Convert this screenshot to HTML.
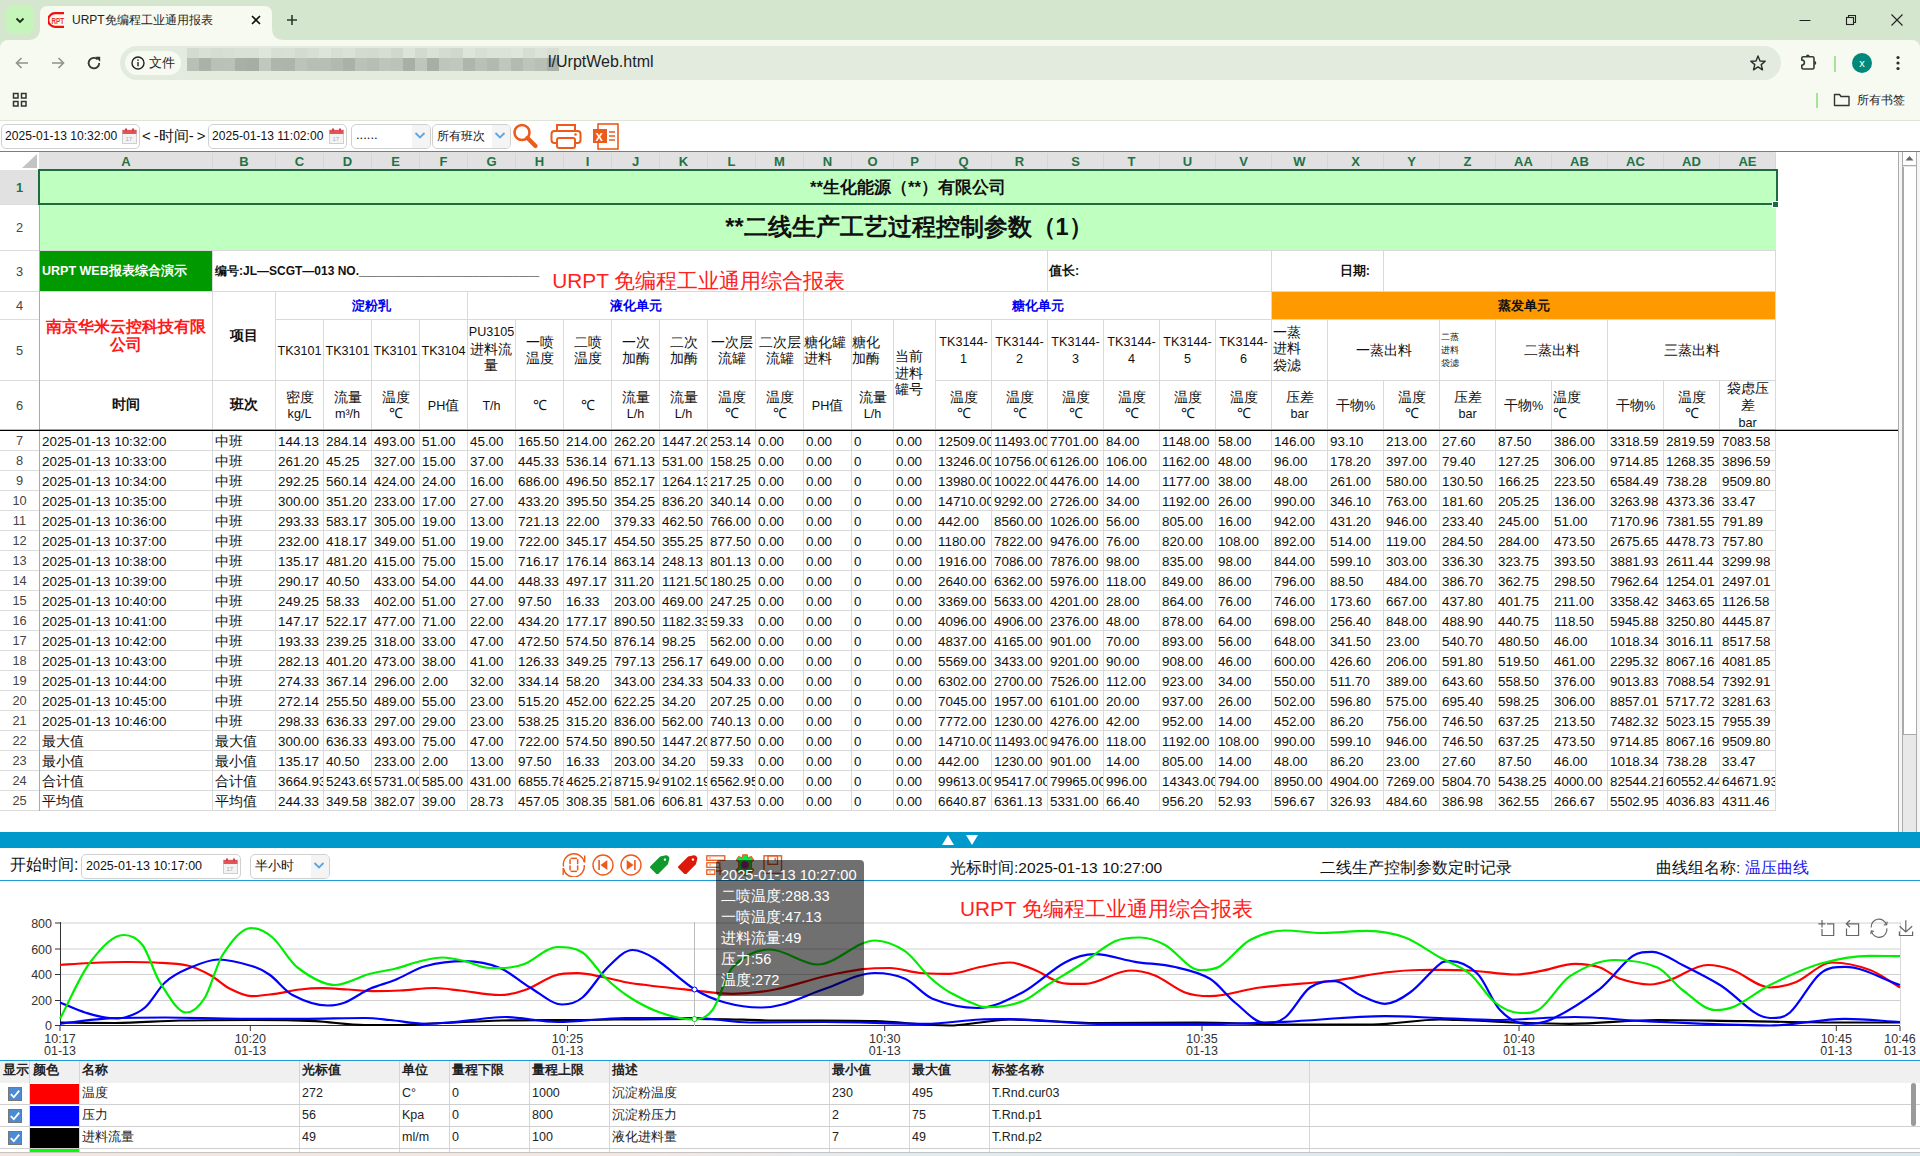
<!DOCTYPE html>
<html><head><meta charset="utf-8"><title>URPT</title>
<style>
html,body{margin:0;padding:0}
body{width:1920px;height:1156px;overflow:hidden;position:relative;font-family:"Liberation Sans",sans-serif;background:#fff}
.c{position:absolute;display:flex;align-items:center;overflow:hidden;white-space:nowrap;font-size:13.4px;color:#111;box-sizing:border-box}
.ch{position:absolute;top:153px;height:16px;line-height:18px;text-align:center;color:#217346;font-weight:bold;font-size:13px}
.zh{font-size:14px}
.rh{position:absolute;left:0;width:39px;text-align:center;font-size:12.8px}
</style></head><body>
<div style="position:absolute;left:0;top:0;width:1920px;height:50px;background:#d5e6cf"></div>
<div style="position:absolute;left:0;top:40px;width:1920px;height:80px;background:#f7faf0;border-radius:8px 8px 0 0"></div>
<svg style="position:absolute;left:28px;top:6px" width="256" height="34" viewBox="0 0 256 34"><path d="M0 34 Q12 34 12 22 L12 8 Q12 0 20 0 L236 0 Q244 0 244 8 L244 22 Q244 34 256 34 Z" fill="#f7faf0"/></svg>
<div style="position:absolute;left:6px;top:6px;width:28px;height:28px;border-radius:8px;background:#c5f5b9"></div>
<svg style="position:absolute;left:14px;top:14px" width="12" height="12" viewBox="0 0 12 12"><path d="M2.5 4.5 L6 8 L9.5 4.5" fill="none" stroke="#1f2a1f" stroke-width="1.8"/></svg>
<svg style="position:absolute;left:48px;top:12px" width="17" height="16" viewBox="0 0 17 16"><path d="M16 1.2 L7 1.2 A6.8 6.8 0 0 0 7 14.8 L16 14.8" fill="none" stroke="#f01010" stroke-width="2.2"/><text x="3.4" y="12.2" font-family="Liberation Sans" font-size="9.5" font-weight="bold" fill="#f03030" textLength="12.6" lengthAdjust="spacingAndGlyphs">RPT</text></svg>
<div style="position:absolute;left:72px;top:11px;font-size:12px;line-height:18px;color:#1f1f1f;white-space:nowrap">URPT免编程工业通用报表</div>
<svg style="position:absolute;left:250px;top:14px" width="12" height="12" viewBox="0 0 12 12"><path d="M2 2 L10 10 M10 2 L2 10" stroke="#111" stroke-width="1.6"/></svg>
<svg style="position:absolute;left:286px;top:14px" width="12" height="12" viewBox="0 0 12 12"><path d="M6 1 L6 11 M1 6 L11 6" stroke="#2b3a2b" stroke-width="1.6"/></svg>
<svg style="position:absolute;left:1798px;top:13px" width="14" height="14" viewBox="0 0 14 14"><path d="M1.5 7.5 L12.5 7.5" stroke="#222" stroke-width="1"/></svg>
<svg style="position:absolute;left:1844px;top:13px" width="14" height="14" viewBox="0 0 14 14"><rect x="2.5" y="4.5" width="7" height="7" fill="none" stroke="#222" stroke-width="1.1"/><path d="M4.5 4.5 L4.5 2.5 L11.5 2.5 L11.5 9.5 L9.5 9.5" fill="none" stroke="#222" stroke-width="1.1"/></svg>
<svg style="position:absolute;left:1890px;top:13px" width="14" height="14" viewBox="0 0 14 14"><path d="M1.5 1.5 L12.5 12.5 M12.5 1.5 L1.5 12.5" stroke="#222" stroke-width="1.1"/></svg>
<div style="position:absolute;left:0;top:120px;width:1920px;height:1px;background:#dfe3d8"></div>
<svg style="position:absolute;left:14px;top:55px" width="16" height="16" viewBox="0 0 16 16"><path d="M14 8 L2.5 8 M7.5 3 L2.5 8 L7.5 13" fill="none" stroke="#8e948a" stroke-width="1.6"/></svg>
<svg style="position:absolute;left:50px;top:55px" width="16" height="16" viewBox="0 0 16 16"><path d="M2 8 L13.5 8 M8.5 3 L13.5 8 L8.5 13" fill="none" stroke="#8e948a" stroke-width="1.6"/></svg>
<svg style="position:absolute;left:86px;top:55px" width="16" height="16" viewBox="0 0 16 16"><path d="M13.2 8 A5.3 5.3 0 1 1 11.6 4.3" fill="none" stroke="#2e3a2e" stroke-width="1.8"/><path d="M9.2 1.8 L14.2 1.8 L14.2 6.8 Z" fill="#2e3a2e"/></svg>
<div style="position:absolute;left:120px;top:46px;width:1661px;height:34px;border-radius:17px;background:#e3ebdf"></div>
<div style="position:absolute;left:125px;top:51px;width:56px;height:24px;border-radius:12px;background:#f7faf0"></div>
<svg style="position:absolute;left:130px;top:55px" width="16" height="16" viewBox="0 0 16 16"><circle cx="8" cy="8" r="6" fill="none" stroke="#222" stroke-width="1.4"/><rect x="7.3" y="7" width="1.4" height="4.3" fill="#222"/><rect x="7.3" y="4.4" width="1.4" height="1.5" fill="#222"/></svg>
<div style="position:absolute;left:149px;top:54px;font-size:13px;line-height:18px;color:#1f1f1f">文件</div>
<div style="position:absolute;left:187px;top:48px;width:12px;height:10px;background:rgb(211,219,209)"></div>
<div style="position:absolute;left:187px;top:58px;width:12px;height:13px;background:rgb(184,192,182)"></div>
<div style="position:absolute;left:199px;top:48px;width:12px;height:10px;background:rgb(216,224,214)"></div>
<div style="position:absolute;left:199px;top:58px;width:12px;height:13px;background:rgb(170,178,168)"></div>
<div style="position:absolute;left:211px;top:48px;width:12px;height:10px;background:rgb(213,221,211)"></div>
<div style="position:absolute;left:211px;top:58px;width:12px;height:13px;background:rgb(185,193,183)"></div>
<div style="position:absolute;left:223px;top:48px;width:12px;height:10px;background:rgb(215,223,213)"></div>
<div style="position:absolute;left:223px;top:58px;width:12px;height:13px;background:rgb(186,194,184)"></div>
<div style="position:absolute;left:235px;top:48px;width:12px;height:10px;background:rgb(217,225,215)"></div>
<div style="position:absolute;left:235px;top:58px;width:12px;height:13px;background:rgb(168,176,166)"></div>
<div style="position:absolute;left:247px;top:48px;width:12px;height:10px;background:rgb(217,225,215)"></div>
<div style="position:absolute;left:247px;top:58px;width:12px;height:13px;background:rgb(166,174,164)"></div>
<div style="position:absolute;left:259px;top:48px;width:12px;height:10px;background:rgb(222,230,220)"></div>
<div style="position:absolute;left:259px;top:58px;width:12px;height:13px;background:rgb(192,200,190)"></div>
<div style="position:absolute;left:271px;top:48px;width:12px;height:10px;background:rgb(215,223,213)"></div>
<div style="position:absolute;left:271px;top:58px;width:12px;height:13px;background:rgb(174,182,172)"></div>
<div style="position:absolute;left:283px;top:48px;width:12px;height:10px;background:rgb(216,224,214)"></div>
<div style="position:absolute;left:283px;top:58px;width:12px;height:13px;background:rgb(173,181,171)"></div>
<div style="position:absolute;left:295px;top:48px;width:12px;height:10px;background:rgb(211,219,209)"></div>
<div style="position:absolute;left:295px;top:58px;width:12px;height:13px;background:rgb(188,196,186)"></div>
<div style="position:absolute;left:307px;top:48px;width:12px;height:10px;background:rgb(215,223,213)"></div>
<div style="position:absolute;left:307px;top:58px;width:12px;height:13px;background:rgb(183,191,181)"></div>
<div style="position:absolute;left:319px;top:48px;width:12px;height:10px;background:rgb(221,229,219)"></div>
<div style="position:absolute;left:319px;top:58px;width:12px;height:13px;background:rgb(183,191,181)"></div>
<div style="position:absolute;left:331px;top:48px;width:12px;height:10px;background:rgb(215,223,213)"></div>
<div style="position:absolute;left:331px;top:58px;width:12px;height:13px;background:rgb(178,186,176)"></div>
<div style="position:absolute;left:343px;top:48px;width:12px;height:10px;background:rgb(218,226,216)"></div>
<div style="position:absolute;left:343px;top:58px;width:12px;height:13px;background:rgb(170,178,168)"></div>
<div style="position:absolute;left:355px;top:48px;width:12px;height:10px;background:rgb(211,219,209)"></div>
<div style="position:absolute;left:355px;top:58px;width:12px;height:13px;background:rgb(186,194,184)"></div>
<div style="position:absolute;left:367px;top:48px;width:12px;height:10px;background:rgb(210,218,208)"></div>
<div style="position:absolute;left:367px;top:58px;width:12px;height:13px;background:rgb(182,190,180)"></div>
<div style="position:absolute;left:379px;top:48px;width:12px;height:10px;background:rgb(214,222,212)"></div>
<div style="position:absolute;left:379px;top:58px;width:12px;height:13px;background:rgb(189,197,187)"></div>
<div style="position:absolute;left:391px;top:48px;width:12px;height:10px;background:rgb(208,216,206)"></div>
<div style="position:absolute;left:391px;top:58px;width:12px;height:13px;background:rgb(187,195,185)"></div>
<div style="position:absolute;left:403px;top:48px;width:12px;height:10px;background:rgb(220,228,218)"></div>
<div style="position:absolute;left:403px;top:58px;width:12px;height:13px;background:rgb(168,176,166)"></div>
<div style="position:absolute;left:415px;top:48px;width:12px;height:10px;background:rgb(210,218,208)"></div>
<div style="position:absolute;left:415px;top:58px;width:12px;height:13px;background:rgb(190,198,188)"></div>
<div style="position:absolute;left:427px;top:48px;width:12px;height:10px;background:rgb(217,225,215)"></div>
<div style="position:absolute;left:427px;top:58px;width:12px;height:13px;background:rgb(167,175,165)"></div>
<div style="position:absolute;left:439px;top:48px;width:12px;height:10px;background:rgb(212,220,210)"></div>
<div style="position:absolute;left:439px;top:58px;width:12px;height:13px;background:rgb(190,198,188)"></div>
<div style="position:absolute;left:451px;top:48px;width:12px;height:10px;background:rgb(208,216,206)"></div>
<div style="position:absolute;left:451px;top:58px;width:12px;height:13px;background:rgb(192,200,190)"></div>
<div style="position:absolute;left:463px;top:48px;width:12px;height:10px;background:rgb(221,229,219)"></div>
<div style="position:absolute;left:463px;top:58px;width:12px;height:13px;background:rgb(174,182,172)"></div>
<div style="position:absolute;left:475px;top:48px;width:12px;height:10px;background:rgb(215,223,213)"></div>
<div style="position:absolute;left:475px;top:58px;width:12px;height:13px;background:rgb(185,193,183)"></div>
<div style="position:absolute;left:487px;top:48px;width:12px;height:10px;background:rgb(219,227,217)"></div>
<div style="position:absolute;left:487px;top:58px;width:12px;height:13px;background:rgb(178,186,176)"></div>
<div style="position:absolute;left:499px;top:48px;width:12px;height:10px;background:rgb(219,227,217)"></div>
<div style="position:absolute;left:499px;top:58px;width:12px;height:13px;background:rgb(191,199,189)"></div>
<div style="position:absolute;left:511px;top:48px;width:12px;height:10px;background:rgb(222,230,220)"></div>
<div style="position:absolute;left:511px;top:58px;width:12px;height:13px;background:rgb(179,187,177)"></div>
<div style="position:absolute;left:523px;top:48px;width:12px;height:10px;background:rgb(214,222,212)"></div>
<div style="position:absolute;left:523px;top:58px;width:12px;height:13px;background:rgb(189,197,187)"></div>
<div style="position:absolute;left:535px;top:48px;width:12px;height:10px;background:rgb(220,228,218)"></div>
<div style="position:absolute;left:535px;top:58px;width:12px;height:13px;background:rgb(184,192,182)"></div>
<div style="position:absolute;left:547px;top:48px;width:12px;height:10px;background:rgb(215,223,213)"></div>
<div style="position:absolute;left:547px;top:58px;width:12px;height:13px;background:rgb(170,178,168)"></div>
<div style="position:absolute;left:548px;top:52px;font-size:16px;line-height:20px;color:#1f1f1f;white-space:nowrap">l/UrptWeb.html</div>
<svg style="position:absolute;left:1749px;top:54px" width="18" height="18" viewBox="0 0 18 18"><path d="M9 2 L11 7 L16.2 7.3 L12.2 10.6 L13.5 15.8 L9 12.9 L4.5 15.8 L5.8 10.6 L1.8 7.3 L7 7 Z" fill="none" stroke="#2b2b2b" stroke-width="1.4" stroke-linejoin="round"/></svg>
<svg style="position:absolute;left:1795px;top:50px" width="26" height="26" viewBox="0 0 26 26"><path d="M8.3 6.8 H17.5 Q19 6.8 19 8.3 V17.5 Q19 19 17.5 19 H8.3 Q6.8 19 6.8 17.5 V15.2 A2.6 2.6 0 0 0 6.8 10 V8.3 Q6.8 6.8 8.3 6.8 Z" fill="none" stroke="#2e3e2e" stroke-width="1.6"/><path d="M10.9 6.4 A1.9 1.9 0 0 1 14.7 6.4 Z M19.4 11 A1.9 1.9 0 0 1 19.4 14.8 Z" fill="#2e3e2e"/></svg>
<div style="position:absolute;left:1834px;top:56px;width:2px;height:16px;background:#a8e39a"></div>
<div style="position:absolute;left:1852px;top:53px;width:20px;height:20px;border-radius:10px;background:#00897b;color:#fff;font-size:11px;line-height:20px;text-align:center">x</div>
<svg style="position:absolute;left:1890px;top:54px" width="16" height="18" viewBox="0 0 16 18"><circle cx="8" cy="3.5" r="1.6" fill="#2b2b2b"/><circle cx="8" cy="9" r="1.6" fill="#2b2b2b"/><circle cx="8" cy="14.5" r="1.6" fill="#2b2b2b"/></svg>
<svg style="position:absolute;left:12px;top:92px" width="16" height="16" viewBox="0 0 16 16"><g fill="none" stroke="#333" stroke-width="1.5"><rect x="1.5" y="1.5" width="4.5" height="4.5"/><rect x="9.5" y="1.5" width="4.5" height="4.5"/><rect x="1.5" y="9.5" width="4.5" height="4.5"/><rect x="9.5" y="9.5" width="4.5" height="4.5"/></g></svg>
<div style="position:absolute;left:1816px;top:93px;width:2px;height:15px;background:#a8e39a"></div>
<svg style="position:absolute;left:1833px;top:92px" width="18" height="16" viewBox="0 0 18 16"><path d="M1.5 2.5 L6.5 2.5 L8 4.5 L16 4.5 L16 13.5 L1.5 13.5 Z" fill="none" stroke="#333" stroke-width="1.4" stroke-linejoin="round"/></svg>
<div style="position:absolute;left:1857px;top:92px;font-size:12px;line-height:16px;color:#222;white-space:nowrap">所有书签</div>
<div style="position:absolute;left:0;top:121px;width:1920px;height:30px;background:#fff"></div>
<div style="position:absolute;left:1px;top:124px;width:137px;height:23px;border:1px solid #d0d0d0;border-radius:5px;background:#fff"></div><div style="position:absolute;left:5px;top:127px;font-size:12.1px;line-height:18px;color:#111;white-space:nowrap">2025-01-13 10:32:00</div><svg style="position:absolute;left:122px;top:128px" width="15" height="16" viewBox="0 0 15 16"><rect x="0.5" y="2" width="14" height="13.5" fill="#f3f3f3" stroke="#cfcfcf"/><rect x="0.5" y="2" width="14" height="4" fill="#e5535a"/><rect x="3" y="0.5" width="2" height="3" fill="#c44"/><rect x="10" y="0.5" width="2" height="3" fill="#c44"/><text x="3.5" y="13" font-size="6" fill="#aaa" font-family="Liberation Sans">17</text></svg>
<div style="position:absolute;left:142px;top:126px;font-size:15px;line-height:20px;color:#111;white-space:nowrap">&lt;<span style="margin-left:3px">-</span>时间-<span style="margin-left:3px">&gt;</span></div>
<div style="position:absolute;left:208px;top:124px;width:137px;height:23px;border:1px solid #d0d0d0;border-radius:5px;background:#fff"></div><div style="position:absolute;left:212px;top:127px;font-size:12.1px;line-height:18px;color:#111;white-space:nowrap">2025-01-13 11:02:00</div><svg style="position:absolute;left:329px;top:128px" width="15" height="16" viewBox="0 0 15 16"><rect x="0.5" y="2" width="14" height="13.5" fill="#f3f3f3" stroke="#cfcfcf"/><rect x="0.5" y="2" width="14" height="4" fill="#e5535a"/><rect x="3" y="0.5" width="2" height="3" fill="#c44"/><rect x="10" y="0.5" width="2" height="3" fill="#c44"/><text x="3.5" y="13" font-size="6" fill="#aaa" font-family="Liberation Sans">17</text></svg>
<div style="position:absolute;left:351px;top:124px;width:78px;height:23px;border:1px solid #d0d0d0;border-radius:5px;background:#fff;overflow:hidden"><div style="position:absolute;right:0;top:0;width:18px;height:23px;background:#f4f4f4"></div></div><div style="position:absolute;left:356px;top:126px;font-size:13px;line-height:18px;color:#111;white-space:nowrap">......</div><svg style="position:absolute;left:414px;top:131px" width="12" height="9" viewBox="0 0 12 9"><path d="M1.5 2 L6 6.5 L10.5 2" fill="none" stroke="#5aa7e6" stroke-width="1.8"/></svg>
<div style="position:absolute;left:432px;top:124px;width:77px;height:23px;border:1px solid #d0d0d0;border-radius:5px;background:#fff;overflow:hidden"><div style="position:absolute;right:0;top:0;width:18px;height:23px;background:#f4f4f4"></div></div><div style="position:absolute;left:437px;top:127px;font-size:13px;line-height:18px;color:#111;white-space:nowrap"><span style="font-size:12px">所有班次</span></div><svg style="position:absolute;left:494px;top:131px" width="12" height="9" viewBox="0 0 12 9"><path d="M1.5 2 L6 6.5 L10.5 2" fill="none" stroke="#5aa7e6" stroke-width="1.8"/></svg>
<svg style="position:absolute;left:512px;top:122px" width="27" height="27" viewBox="0 0 27 27"><circle cx="10" cy="10.5" r="7.5" fill="none" stroke="#ec5a1c" stroke-width="2.6"/><path d="M15.5 16 L23.5 24" stroke="#ec5a1c" stroke-width="4.2" stroke-linecap="round"/></svg>
<svg style="position:absolute;left:550px;top:123px" width="32" height="27" viewBox="0 0 32 27"><g fill="none" stroke="#ec5a1c" stroke-width="2"><path d="M7 8 L7 2 L25 2 L25 8"/><rect x="1.5" y="8" width="29" height="12" rx="3"/><rect x="7" y="15" width="18" height="10" rx="2" fill="#fff"/></g><circle cx="25.5" cy="11.5" r="1.3" fill="#ec5a1c"/></svg>
<svg style="position:absolute;left:592px;top:123px" width="28" height="27" viewBox="0 0 28 27"><rect x="6" y="1" width="20" height="25" fill="#fff" stroke="#ec5a1c" stroke-width="1.6"/><path d="M17 9 L23 9 M17 13 L23 13 M17 17 L23 17" stroke="#ec5a1c" stroke-width="1.4"/><rect x="1" y="6" width="14" height="14" fill="#ec5a1c"/><text x="3.6" y="17.5" font-size="11" font-weight="bold" fill="#fff" font-family="Liberation Sans">X</text></svg>
<div style="position:absolute;left:0;top:151px;width:1920px;height:1px;background:#1e9ad6"></div>
<div style="position:absolute;left:0;top:152px;width:1898px;height:680px;background:#fff"></div>
<div style="position:absolute;left:39px;top:152px;width:1737px;height:17px;background:#e1e1e1"></div>
<svg style="position:absolute;left:20px;top:153px" width="18" height="16" viewBox="0 0 18 16"><path d="M17 1 L17 15 L2 15 Z" fill="#c4c4c4"/></svg>
<div class="ch" style="left:40px;width:172px">A</div>
<div style="position:absolute;left:212px;top:153px;width:1px;height:16px;background:#d6d6d6"></div>
<div class="ch" style="left:213px;width:62px">B</div>
<div style="position:absolute;left:275px;top:153px;width:1px;height:16px;background:#d6d6d6"></div>
<div class="ch" style="left:276px;width:47px">C</div>
<div style="position:absolute;left:323px;top:153px;width:1px;height:16px;background:#d6d6d6"></div>
<div class="ch" style="left:324px;width:47px">D</div>
<div style="position:absolute;left:371px;top:153px;width:1px;height:16px;background:#d6d6d6"></div>
<div class="ch" style="left:372px;width:47px">E</div>
<div style="position:absolute;left:419px;top:153px;width:1px;height:16px;background:#d6d6d6"></div>
<div class="ch" style="left:420px;width:47px">F</div>
<div style="position:absolute;left:467px;top:153px;width:1px;height:16px;background:#d6d6d6"></div>
<div class="ch" style="left:468px;width:47px">G</div>
<div style="position:absolute;left:515px;top:153px;width:1px;height:16px;background:#d6d6d6"></div>
<div class="ch" style="left:516px;width:47px">H</div>
<div style="position:absolute;left:563px;top:153px;width:1px;height:16px;background:#d6d6d6"></div>
<div class="ch" style="left:564px;width:47px">I</div>
<div style="position:absolute;left:611px;top:153px;width:1px;height:16px;background:#d6d6d6"></div>
<div class="ch" style="left:612px;width:47px">J</div>
<div style="position:absolute;left:659px;top:153px;width:1px;height:16px;background:#d6d6d6"></div>
<div class="ch" style="left:660px;width:47px">K</div>
<div style="position:absolute;left:707px;top:153px;width:1px;height:16px;background:#d6d6d6"></div>
<div class="ch" style="left:708px;width:47px">L</div>
<div style="position:absolute;left:755px;top:153px;width:1px;height:16px;background:#d6d6d6"></div>
<div class="ch" style="left:756px;width:47px">M</div>
<div style="position:absolute;left:803px;top:153px;width:1px;height:16px;background:#d6d6d6"></div>
<div class="ch" style="left:804px;width:47px">N</div>
<div style="position:absolute;left:851px;top:153px;width:1px;height:16px;background:#d6d6d6"></div>
<div class="ch" style="left:852px;width:41px">O</div>
<div style="position:absolute;left:893px;top:153px;width:1px;height:16px;background:#d6d6d6"></div>
<div class="ch" style="left:894px;width:41px">P</div>
<div style="position:absolute;left:935px;top:153px;width:1px;height:16px;background:#d6d6d6"></div>
<div class="ch" style="left:936px;width:55px">Q</div>
<div style="position:absolute;left:991px;top:153px;width:1px;height:16px;background:#d6d6d6"></div>
<div class="ch" style="left:992px;width:55px">R</div>
<div style="position:absolute;left:1047px;top:153px;width:1px;height:16px;background:#d6d6d6"></div>
<div class="ch" style="left:1048px;width:55px">S</div>
<div style="position:absolute;left:1103px;top:153px;width:1px;height:16px;background:#d6d6d6"></div>
<div class="ch" style="left:1104px;width:55px">T</div>
<div style="position:absolute;left:1159px;top:153px;width:1px;height:16px;background:#d6d6d6"></div>
<div class="ch" style="left:1160px;width:55px">U</div>
<div style="position:absolute;left:1215px;top:153px;width:1px;height:16px;background:#d6d6d6"></div>
<div class="ch" style="left:1216px;width:55px">V</div>
<div style="position:absolute;left:1271px;top:153px;width:1px;height:16px;background:#d6d6d6"></div>
<div class="ch" style="left:1272px;width:55px">W</div>
<div style="position:absolute;left:1327px;top:153px;width:1px;height:16px;background:#d6d6d6"></div>
<div class="ch" style="left:1328px;width:55px">X</div>
<div style="position:absolute;left:1383px;top:153px;width:1px;height:16px;background:#d6d6d6"></div>
<div class="ch" style="left:1384px;width:55px">Y</div>
<div style="position:absolute;left:1439px;top:153px;width:1px;height:16px;background:#d6d6d6"></div>
<div class="ch" style="left:1440px;width:55px">Z</div>
<div style="position:absolute;left:1495px;top:153px;width:1px;height:16px;background:#d6d6d6"></div>
<div class="ch" style="left:1496px;width:55px">AA</div>
<div style="position:absolute;left:1551px;top:153px;width:1px;height:16px;background:#d6d6d6"></div>
<div class="ch" style="left:1552px;width:55px">AB</div>
<div style="position:absolute;left:1607px;top:153px;width:1px;height:16px;background:#d6d6d6"></div>
<div class="ch" style="left:1608px;width:55px">AC</div>
<div style="position:absolute;left:1663px;top:153px;width:1px;height:16px;background:#d6d6d6"></div>
<div class="ch" style="left:1664px;width:55px">AD</div>
<div style="position:absolute;left:1719px;top:153px;width:1px;height:16px;background:#d6d6d6"></div>
<div class="ch" style="left:1720px;width:55px">AE</div>
<div style="position:absolute;left:1775px;top:153px;width:1px;height:16px;background:#d6d6d6"></div>
<div class="rh" style="top:170px;height:34px;line-height:35px;background:#e1e1e1;color:#217346;font-weight:bold">1</div>
<div style="position:absolute;left:0;top:204px;width:39px;height:1px;background:#dcdcdc"></div>
<div class="rh" style="top:205px;height:45px;line-height:46px;background:#fff;color:#444;font-weight:normal">2</div>
<div style="position:absolute;left:0;top:250px;width:39px;height:1px;background:#dcdcdc"></div>
<div class="rh" style="top:251px;height:40px;line-height:41px;background:#fff;color:#444;font-weight:normal">3</div>
<div style="position:absolute;left:0;top:291px;width:39px;height:1px;background:#dcdcdc"></div>
<div class="rh" style="top:292px;height:27px;line-height:28px;background:#fff;color:#444;font-weight:normal">4</div>
<div style="position:absolute;left:0;top:319px;width:39px;height:1px;background:#dcdcdc"></div>
<div class="rh" style="top:320px;height:60px;line-height:61px;background:#fff;color:#444;font-weight:normal">5</div>
<div style="position:absolute;left:0;top:380px;width:39px;height:1px;background:#dcdcdc"></div>
<div class="rh" style="top:381px;height:49px;line-height:50px;background:#fff;color:#444;font-weight:normal">6</div>
<div class="rh" style="top:431px;height:19px;line-height:20px;background:#fff;color:#444;font-weight:normal">7</div>
<div style="position:absolute;left:0;top:450px;width:39px;height:1px;background:#dcdcdc"></div>
<div class="rh" style="top:451px;height:19px;line-height:20px;background:#fff;color:#444;font-weight:normal">8</div>
<div style="position:absolute;left:0;top:470px;width:39px;height:1px;background:#dcdcdc"></div>
<div class="rh" style="top:471px;height:19px;line-height:20px;background:#fff;color:#444;font-weight:normal">9</div>
<div style="position:absolute;left:0;top:490px;width:39px;height:1px;background:#dcdcdc"></div>
<div class="rh" style="top:491px;height:19px;line-height:20px;background:#fff;color:#444;font-weight:normal">10</div>
<div style="position:absolute;left:0;top:510px;width:39px;height:1px;background:#dcdcdc"></div>
<div class="rh" style="top:511px;height:19px;line-height:20px;background:#fff;color:#444;font-weight:normal">11</div>
<div style="position:absolute;left:0;top:530px;width:39px;height:1px;background:#dcdcdc"></div>
<div class="rh" style="top:531px;height:19px;line-height:20px;background:#fff;color:#444;font-weight:normal">12</div>
<div style="position:absolute;left:0;top:550px;width:39px;height:1px;background:#dcdcdc"></div>
<div class="rh" style="top:551px;height:19px;line-height:20px;background:#fff;color:#444;font-weight:normal">13</div>
<div style="position:absolute;left:0;top:570px;width:39px;height:1px;background:#dcdcdc"></div>
<div class="rh" style="top:571px;height:19px;line-height:20px;background:#fff;color:#444;font-weight:normal">14</div>
<div style="position:absolute;left:0;top:590px;width:39px;height:1px;background:#dcdcdc"></div>
<div class="rh" style="top:591px;height:19px;line-height:20px;background:#fff;color:#444;font-weight:normal">15</div>
<div style="position:absolute;left:0;top:610px;width:39px;height:1px;background:#dcdcdc"></div>
<div class="rh" style="top:611px;height:19px;line-height:20px;background:#fff;color:#444;font-weight:normal">16</div>
<div style="position:absolute;left:0;top:630px;width:39px;height:1px;background:#dcdcdc"></div>
<div class="rh" style="top:631px;height:19px;line-height:20px;background:#fff;color:#444;font-weight:normal">17</div>
<div style="position:absolute;left:0;top:650px;width:39px;height:1px;background:#dcdcdc"></div>
<div class="rh" style="top:651px;height:19px;line-height:20px;background:#fff;color:#444;font-weight:normal">18</div>
<div style="position:absolute;left:0;top:670px;width:39px;height:1px;background:#dcdcdc"></div>
<div class="rh" style="top:671px;height:19px;line-height:20px;background:#fff;color:#444;font-weight:normal">19</div>
<div style="position:absolute;left:0;top:690px;width:39px;height:1px;background:#dcdcdc"></div>
<div class="rh" style="top:691px;height:19px;line-height:20px;background:#fff;color:#444;font-weight:normal">20</div>
<div style="position:absolute;left:0;top:710px;width:39px;height:1px;background:#dcdcdc"></div>
<div class="rh" style="top:711px;height:19px;line-height:20px;background:#fff;color:#444;font-weight:normal">21</div>
<div style="position:absolute;left:0;top:730px;width:39px;height:1px;background:#dcdcdc"></div>
<div class="rh" style="top:731px;height:19px;line-height:20px;background:#fff;color:#444;font-weight:normal">22</div>
<div style="position:absolute;left:0;top:750px;width:39px;height:1px;background:#dcdcdc"></div>
<div class="rh" style="top:751px;height:19px;line-height:20px;background:#fff;color:#444;font-weight:normal">23</div>
<div style="position:absolute;left:0;top:770px;width:39px;height:1px;background:#dcdcdc"></div>
<div class="rh" style="top:771px;height:19px;line-height:20px;background:#fff;color:#444;font-weight:normal">24</div>
<div style="position:absolute;left:0;top:790px;width:39px;height:1px;background:#dcdcdc"></div>
<div class="rh" style="top:791px;height:19px;line-height:20px;background:#fff;color:#444;font-weight:normal">25</div>
<div style="position:absolute;left:0;top:810px;width:39px;height:1px;background:#dcdcdc"></div>
<div style="position:absolute;left:39px;top:169px;width:1px;height:642px;background:#aaa"></div>
<div class="c" style="left:40px;top:170px;width:1736px;height:34px;background:#bfffbf;justify-content:center;font-weight:bold;font-size:16.8px;padding-left:0px">**生化能源（**）有限公司</div>
<div class="c" style="left:40px;top:204px;width:1736px;height:47px;background:#bfffbf;border-bottom:1px solid #d9d9d9;justify-content:center;font-weight:bold;font-size:23.5px;padding-left:2px">**二线生产工艺过程控制参数（1）</div>
<div style="position:absolute;left:38px;top:169px;width:1736px;height:32px;border:2px solid #1e6b41;border-bottom-width:2px"></div>
<div style="position:absolute;left:1772px;top:201px;width:5px;height:5px;background:#1e6b41;border:1px solid #fff"></div>
<div class="c" style="left:40px;top:251px;width:173px;height:41px;border-right:1px solid #d9d9d9;border-bottom:1px solid #d9d9d9;justify-content:flex-start;text-align:left;padding-left:2px;background:#009900;color:#fff;font-weight:bold;font-size:12.5px">URPT WEB报表综合演示</div>
<div class="c" style="left:213px;top:251px;width:835px;height:41px;border-right:1px solid #d9d9d9;border-bottom:1px solid #d9d9d9;justify-content:flex-start;text-align:left;padding-left:2px;"><span style="font-weight:bold;font-size:12px">编号:JL—SCGT—013 NO.___________________________</span><span style="color:#ff2020;font-size:20.8px;margin-left:13px;position:relative;top:10px">URPT 免编程工业通用综合报表</span></div>
<div class="c" style="left:1048px;top:251px;width:224px;height:41px;border-right:1px solid #d9d9d9;border-bottom:1px solid #d9d9d9;justify-content:flex-start;text-align:left;padding-left:1px;"><b style="font-size:12.5px">值长:</b></div>
<div class="c" style="left:1272px;top:251px;width:112px;height:41px;border-right:1px solid #d9d9d9;border-bottom:1px solid #d9d9d9;justify-content:flex-end;text-align:right;padding-left:0px;padding-right:13px"><b style="font-size:12.5px">日期:</b></div>
<div class="c" style="left:1384px;top:251px;width:392px;height:41px;border-right:1px solid #d9d9d9;border-bottom:1px solid #d9d9d9;justify-content:flex-start;text-align:left;padding-left:0px;"></div>
<div class="c" style="left:40px;top:292px;width:173px;height:89px;border-right:1px solid #d9d9d9;border-bottom:1px solid #d9d9d9;justify-content:center;text-align:center;padding-left:0px;"><span style="color:#ff1a1a;font-weight:bold;font-size:16px;line-height:18px">南京华米云控科技有限<br>公司</span></div>
<div class="c" style="left:213px;top:292px;width:63px;height:89px;border-right:1px solid #d9d9d9;border-bottom:1px solid #d9d9d9;justify-content:center;text-align:center;padding-left:0px;"><b style="font-size:14px">项目</b></div>
<div class="c" style="left:276px;top:292px;width:192px;height:28px;border-right:1px solid #d9d9d9;border-bottom:1px solid #d9d9d9;justify-content:center;text-align:center;padding-left:0px;"><b style="color:#0000ee;font-size:13px">淀粉乳</b></div>
<div class="c" style="left:468px;top:292px;width:336px;height:28px;border-right:1px solid #d9d9d9;border-bottom:1px solid #d9d9d9;justify-content:center;text-align:center;padding-left:0px;"><b style="color:#0000ee;font-size:13px">液化单元</b></div>
<div class="c" style="left:804px;top:292px;width:468px;height:28px;border-right:1px solid #d9d9d9;border-bottom:1px solid #d9d9d9;justify-content:center;text-align:center;padding-left:0px;"><b style="color:#0000ee;font-size:13px">糖化单元</b></div>
<div class="c" style="left:1272px;top:292px;width:504px;height:28px;border-right:1px solid #d9d9d9;border-bottom:1px solid #d9d9d9;justify-content:center;text-align:center;padding-left:0px;background:#ff9900"><b style="font-size:13px">蒸发单元</b></div>
<div class="c" style="left:276px;top:320px;width:48px;height:61px;border-right:1px solid #d9d9d9;border-bottom:1px solid #d9d9d9;justify-content:center;text-align:center;padding-left:0px;"><span style="font-size:14px;line-height:16px;"><span style="font-size:12.6px">TK3101</span></span></div>
<div class="c" style="left:324px;top:320px;width:48px;height:61px;border-right:1px solid #d9d9d9;border-bottom:1px solid #d9d9d9;justify-content:center;text-align:center;padding-left:0px;"><span style="font-size:14px;line-height:16px;"><span style="font-size:12.6px">TK3101</span></span></div>
<div class="c" style="left:372px;top:320px;width:48px;height:61px;border-right:1px solid #d9d9d9;border-bottom:1px solid #d9d9d9;justify-content:center;text-align:center;padding-left:0px;"><span style="font-size:14px;line-height:16px;"><span style="font-size:12.6px">TK3101</span></span></div>
<div class="c" style="left:420px;top:320px;width:48px;height:61px;border-right:1px solid #d9d9d9;border-bottom:1px solid #d9d9d9;justify-content:center;text-align:center;padding-left:0px;"><span style="font-size:14px;line-height:16px;"><span style="font-size:12.6px">TK3104</span></span></div>
<div class="c" style="left:468px;top:320px;width:48px;height:61px;border-right:1px solid #d9d9d9;border-bottom:1px solid #d9d9d9;justify-content:center;text-align:center;padding-left:0px;"><span style="font-size:14px;line-height:16px;position:relative;top:-1.5px;line-height:16.5px;"><span style="font-size:12.6px">PU3105</span><br>进料流<br>量</span></div>
<div class="c" style="left:516px;top:320px;width:48px;height:61px;border-right:1px solid #d9d9d9;border-bottom:1px solid #d9d9d9;justify-content:center;text-align:center;padding-left:0px;"><span style="font-size:14px;line-height:16px;">一喷<br>温度</span></div>
<div class="c" style="left:564px;top:320px;width:48px;height:61px;border-right:1px solid #d9d9d9;border-bottom:1px solid #d9d9d9;justify-content:center;text-align:center;padding-left:0px;"><span style="font-size:14px;line-height:16px;">二喷<br>温度</span></div>
<div class="c" style="left:612px;top:320px;width:48px;height:61px;border-right:1px solid #d9d9d9;border-bottom:1px solid #d9d9d9;justify-content:center;text-align:center;padding-left:0px;"><span style="font-size:14px;line-height:16px;">一次<br>加酶</span></div>
<div class="c" style="left:660px;top:320px;width:48px;height:61px;border-right:1px solid #d9d9d9;border-bottom:1px solid #d9d9d9;justify-content:center;text-align:center;padding-left:0px;"><span style="font-size:14px;line-height:16px;">二次<br>加酶</span></div>
<div class="c" style="left:708px;top:320px;width:48px;height:61px;border-right:1px solid #d9d9d9;border-bottom:1px solid #d9d9d9;justify-content:center;text-align:center;padding-left:0px;"><span style="font-size:14px;line-height:16px;">一次层<br>流罐</span></div>
<div class="c" style="left:756px;top:320px;width:48px;height:61px;border-right:1px solid #d9d9d9;border-bottom:1px solid #d9d9d9;justify-content:center;text-align:center;padding-left:0px;"><span style="font-size:14px;line-height:16px;">二次层<br>流罐</span></div>
<div class="c" style="left:804px;top:320px;width:48px;height:61px;border-right:1px solid #d9d9d9;border-bottom:1px solid #d9d9d9;justify-content:flex-start;text-align:left;padding-left:0px;"><span style="font-size:14px;line-height:16px;">糖化罐<br>进料</span></div>
<div class="c" style="left:852px;top:320px;width:42px;height:61px;border-right:1px solid #d9d9d9;border-bottom:1px solid #d9d9d9;justify-content:flex-start;text-align:left;padding-left:0px;"><span style="font-size:14px;line-height:16px;">糖化<br>加酶</span></div>
<div class="c" style="left:894px;top:320px;width:42px;height:110px;border-right:1px solid #d9d9d9;border-bottom:1px solid #d9d9d9;justify-content:flex-start;text-align:left;padding-left:1px;"><span style="font-size:14px;line-height:16px;position:relative;top:-1.5px;line-height:16.5px;">当前<br>进料<br>罐号</span></div>
<div class="c" style="left:936px;top:320px;width:56px;height:61px;border-right:1px solid #d9d9d9;border-bottom:1px solid #d9d9d9;justify-content:center;text-align:center;padding-left:0px;"><span style="font-size:14px;line-height:16px;"><span style="font-size:12.6px">TK3144-</span><br><span style="font-size:12.6px">1</span></span></div>
<div class="c" style="left:992px;top:320px;width:56px;height:61px;border-right:1px solid #d9d9d9;border-bottom:1px solid #d9d9d9;justify-content:center;text-align:center;padding-left:0px;"><span style="font-size:14px;line-height:16px;"><span style="font-size:12.6px">TK3144-</span><br><span style="font-size:12.6px">2</span></span></div>
<div class="c" style="left:1048px;top:320px;width:56px;height:61px;border-right:1px solid #d9d9d9;border-bottom:1px solid #d9d9d9;justify-content:center;text-align:center;padding-left:0px;"><span style="font-size:14px;line-height:16px;"><span style="font-size:12.6px">TK3144-</span><br><span style="font-size:12.6px">3</span></span></div>
<div class="c" style="left:1104px;top:320px;width:56px;height:61px;border-right:1px solid #d9d9d9;border-bottom:1px solid #d9d9d9;justify-content:center;text-align:center;padding-left:0px;"><span style="font-size:14px;line-height:16px;"><span style="font-size:12.6px">TK3144-</span><br><span style="font-size:12.6px">4</span></span></div>
<div class="c" style="left:1160px;top:320px;width:56px;height:61px;border-right:1px solid #d9d9d9;border-bottom:1px solid #d9d9d9;justify-content:center;text-align:center;padding-left:0px;"><span style="font-size:14px;line-height:16px;"><span style="font-size:12.6px">TK3144-</span><br><span style="font-size:12.6px">5</span></span></div>
<div class="c" style="left:1216px;top:320px;width:56px;height:61px;border-right:1px solid #d9d9d9;border-bottom:1px solid #d9d9d9;justify-content:center;text-align:center;padding-left:0px;"><span style="font-size:14px;line-height:16px;"><span style="font-size:12.6px">TK3144-</span><br><span style="font-size:12.6px">6</span></span></div>
<div class="c" style="left:1272px;top:320px;width:56px;height:61px;border-right:1px solid #d9d9d9;border-bottom:1px solid #d9d9d9;justify-content:flex-start;text-align:left;padding-left:1px;"><span style="font-size:14px;line-height:16px;position:relative;top:-1.5px;line-height:16.5px;">一蒸<br>进料<br>袋滤</span></div>
<div class="c" style="left:1328px;top:320px;width:112px;height:61px;border-right:1px solid #d9d9d9;border-bottom:1px solid #d9d9d9;justify-content:center;text-align:center;padding-left:0px;"><span style="font-size:14px;line-height:16px;">一蒸出料</span></div>
<div class="c" style="left:1440px;top:320px;width:56px;height:61px;border-right:1px solid #d9d9d9;border-bottom:1px solid #d9d9d9;justify-content:flex-start;text-align:left;padding-left:1px;"><span style="font-size:9px;line-height:16px;line-height:13px">二蒸<br>进料<br>袋滤</span></div>
<div class="c" style="left:1496px;top:320px;width:112px;height:61px;border-right:1px solid #d9d9d9;border-bottom:1px solid #d9d9d9;justify-content:center;text-align:center;padding-left:0px;"><span style="font-size:14px;line-height:16px;">二蒸出料</span></div>
<div class="c" style="left:1608px;top:320px;width:168px;height:61px;border-right:1px solid #d9d9d9;border-bottom:1px solid #d9d9d9;justify-content:center;text-align:center;padding-left:0px;"><span style="font-size:14px;line-height:16px;">三蒸出料</span></div>
<div class="c" style="left:40px;top:381px;width:173px;height:49px;border-right:1px solid #d9d9d9;border-bottom:1px solid #d9d9d9;justify-content:center;text-align:center;padding-left:0px;"><b style="font-size:14px">时间</b></div>
<div class="c" style="left:213px;top:381px;width:63px;height:49px;border-right:1px solid #d9d9d9;border-bottom:1px solid #d9d9d9;justify-content:center;text-align:center;padding-left:0px;"><b style="font-size:14px">班次</b></div>
<div class="c" style="left:276px;top:381px;width:48px;height:49px;border-right:1px solid #d9d9d9;border-bottom:1px solid #d9d9d9;justify-content:center;text-align:center;padding-left:0px;"><span style="font-size:14px;line-height:16px;">密度<br><span style="font-size:12.6px">kg/L</span></span></div>
<div class="c" style="left:324px;top:381px;width:48px;height:49px;border-right:1px solid #d9d9d9;border-bottom:1px solid #d9d9d9;justify-content:center;text-align:center;padding-left:0px;"><span style="font-size:14px;line-height:16px;">流量<br><span style="font-size:12.6px">m³/h</span></span></div>
<div class="c" style="left:372px;top:381px;width:48px;height:49px;border-right:1px solid #d9d9d9;border-bottom:1px solid #d9d9d9;justify-content:center;text-align:center;padding-left:0px;"><span style="font-size:14px;line-height:16px;">温度<br>℃</span></div>
<div class="c" style="left:420px;top:381px;width:48px;height:49px;border-right:1px solid #d9d9d9;border-bottom:1px solid #d9d9d9;justify-content:center;text-align:center;padding-left:0px;"><span style="font-size:14px;line-height:16px;"><span style="font-size:12.6px">PH</span>值</span></div>
<div class="c" style="left:468px;top:381px;width:48px;height:49px;border-right:1px solid #d9d9d9;border-bottom:1px solid #d9d9d9;justify-content:center;text-align:center;padding-left:0px;"><span style="font-size:14px;line-height:16px;"><span style="font-size:12.6px">T/h</span></span></div>
<div class="c" style="left:516px;top:381px;width:48px;height:49px;border-right:1px solid #d9d9d9;border-bottom:1px solid #d9d9d9;justify-content:center;text-align:center;padding-left:0px;"><span style="font-size:14px;line-height:16px;">℃</span></div>
<div class="c" style="left:564px;top:381px;width:48px;height:49px;border-right:1px solid #d9d9d9;border-bottom:1px solid #d9d9d9;justify-content:center;text-align:center;padding-left:0px;"><span style="font-size:14px;line-height:16px;">℃</span></div>
<div class="c" style="left:612px;top:381px;width:48px;height:49px;border-right:1px solid #d9d9d9;border-bottom:1px solid #d9d9d9;justify-content:center;text-align:center;padding-left:0px;"><span style="font-size:14px;line-height:16px;">流量<br><span style="font-size:12.6px">L/h</span></span></div>
<div class="c" style="left:660px;top:381px;width:48px;height:49px;border-right:1px solid #d9d9d9;border-bottom:1px solid #d9d9d9;justify-content:center;text-align:center;padding-left:0px;"><span style="font-size:14px;line-height:16px;">流量<br><span style="font-size:12.6px">L/h</span></span></div>
<div class="c" style="left:708px;top:381px;width:48px;height:49px;border-right:1px solid #d9d9d9;border-bottom:1px solid #d9d9d9;justify-content:center;text-align:center;padding-left:0px;"><span style="font-size:14px;line-height:16px;">温度<br>℃</span></div>
<div class="c" style="left:756px;top:381px;width:48px;height:49px;border-right:1px solid #d9d9d9;border-bottom:1px solid #d9d9d9;justify-content:center;text-align:center;padding-left:0px;"><span style="font-size:14px;line-height:16px;">温度<br>℃</span></div>
<div class="c" style="left:804px;top:381px;width:48px;height:49px;border-right:1px solid #d9d9d9;border-bottom:1px solid #d9d9d9;justify-content:center;text-align:center;padding-left:0px;"><span style="font-size:14px;line-height:16px;"><span style="font-size:12.6px">PH</span>值</span></div>
<div class="c" style="left:852px;top:381px;width:42px;height:49px;border-right:1px solid #d9d9d9;border-bottom:1px solid #d9d9d9;justify-content:center;text-align:center;padding-left:0px;"><span style="font-size:14px;line-height:16px;">流量<br><span style="font-size:12.6px">L/h</span></span></div>
<div class="c" style="left:936px;top:381px;width:56px;height:49px;border-right:1px solid #d9d9d9;border-bottom:1px solid #d9d9d9;justify-content:center;text-align:center;padding-left:0px;"><span style="font-size:14px;line-height:16px;">温度<br>℃</span></div>
<div class="c" style="left:992px;top:381px;width:56px;height:49px;border-right:1px solid #d9d9d9;border-bottom:1px solid #d9d9d9;justify-content:center;text-align:center;padding-left:0px;"><span style="font-size:14px;line-height:16px;">温度<br>℃</span></div>
<div class="c" style="left:1048px;top:381px;width:56px;height:49px;border-right:1px solid #d9d9d9;border-bottom:1px solid #d9d9d9;justify-content:center;text-align:center;padding-left:0px;"><span style="font-size:14px;line-height:16px;">温度<br>℃</span></div>
<div class="c" style="left:1104px;top:381px;width:56px;height:49px;border-right:1px solid #d9d9d9;border-bottom:1px solid #d9d9d9;justify-content:center;text-align:center;padding-left:0px;"><span style="font-size:14px;line-height:16px;">温度<br>℃</span></div>
<div class="c" style="left:1160px;top:381px;width:56px;height:49px;border-right:1px solid #d9d9d9;border-bottom:1px solid #d9d9d9;justify-content:center;text-align:center;padding-left:0px;"><span style="font-size:14px;line-height:16px;">温度<br>℃</span></div>
<div class="c" style="left:1216px;top:381px;width:56px;height:49px;border-right:1px solid #d9d9d9;border-bottom:1px solid #d9d9d9;justify-content:center;text-align:center;padding-left:0px;"><span style="font-size:14px;line-height:16px;">温度<br>℃</span></div>
<div class="c" style="left:1272px;top:381px;width:56px;height:49px;border-right:1px solid #d9d9d9;border-bottom:1px solid #d9d9d9;justify-content:center;text-align:center;padding-left:0px;"><span style="font-size:14px;line-height:16px;">压差<br><span style="font-size:12.6px">bar</span></span></div>
<div class="c" style="left:1328px;top:381px;width:56px;height:49px;border-right:1px solid #d9d9d9;border-bottom:1px solid #d9d9d9;justify-content:center;text-align:center;padding-left:0px;"><span style="font-size:14px;line-height:16px;">干物<span style="font-size:12.6px">%</span></span></div>
<div class="c" style="left:1384px;top:381px;width:56px;height:49px;border-right:1px solid #d9d9d9;border-bottom:1px solid #d9d9d9;justify-content:center;text-align:center;padding-left:0px;"><span style="font-size:14px;line-height:16px;">温度<br>℃</span></div>
<div class="c" style="left:1440px;top:381px;width:56px;height:49px;border-right:1px solid #d9d9d9;border-bottom:1px solid #d9d9d9;justify-content:center;text-align:center;padding-left:0px;"><span style="font-size:14px;line-height:16px;">压差<br><span style="font-size:12.6px">bar</span></span></div>
<div class="c" style="left:1496px;top:381px;width:56px;height:49px;border-right:1px solid #d9d9d9;border-bottom:1px solid #d9d9d9;justify-content:center;text-align:center;padding-left:0px;"><span style="font-size:14px;line-height:16px;">干物<span style="font-size:12.6px">%</span></span></div>
<div class="c" style="left:1608px;top:381px;width:56px;height:49px;border-right:1px solid #d9d9d9;border-bottom:1px solid #d9d9d9;justify-content:center;text-align:center;padding-left:0px;"><span style="font-size:14px;line-height:16px;">干物<span style="font-size:12.6px">%</span></span></div>
<div class="c" style="left:1664px;top:381px;width:56px;height:49px;border-right:1px solid #d9d9d9;border-bottom:1px solid #d9d9d9;justify-content:center;text-align:center;padding-left:0px;"><span style="font-size:14px;line-height:16px;">温度<br>℃</span></div>
<div class="c" style="left:1720px;top:381px;width:56px;height:49px;border-right:1px solid #d9d9d9;border-bottom:1px solid #d9d9d9;justify-content:center;text-align:center;padding-left:0px;"><span style="font-size:14px;line-height:16px;position:relative;top:-1.5px;line-height:16.5px;top:0.5px;line-height:17px">袋虑压<br>差<br><span style="font-size:12.6px">bar</span></span></div>
<div class="c" style="left:1552px;top:381px;width:56px;height:49px;border-right:1px solid #d9d9d9;border-bottom:1px solid #d9d9d9;justify-content:flex-start;text-align:left;padding-left:1px;"><span style="font-size:14px;line-height:16px;">温度<br>℃</span></div>
<div style="position:absolute;left:0;top:430px;width:1898px;height:1px;background:#000"></div><div style="position:absolute;left:0;top:429px;width:1898px;height:1px;background:rgba(0,0,0,0.25)"></div>
<div class="c" style="left:40px;top:431px;width:173px;height:20px;border-right:1px solid #d9d9d9;border-bottom:1px solid #d9d9d9;justify-content:flex-start;text-align:left;padding-left:2px;padding-top:2px">2025-01-13 10:32:00</div>
<div class="c" style="left:213px;top:431px;width:63px;height:20px;border-right:1px solid #d9d9d9;border-bottom:1px solid #d9d9d9;justify-content:flex-start;text-align:left;padding-left:2px;padding-top:2px"><span class="zh">中班</span></div>
<div class="c" style="left:276px;top:431px;width:48px;height:20px;border-right:1px solid #d9d9d9;border-bottom:1px solid #d9d9d9;justify-content:flex-start;text-align:left;padding-left:2px;padding-top:2px">144.13</div>
<div class="c" style="left:324px;top:431px;width:48px;height:20px;border-right:1px solid #d9d9d9;border-bottom:1px solid #d9d9d9;justify-content:flex-start;text-align:left;padding-left:2px;padding-top:2px">284.14</div>
<div class="c" style="left:372px;top:431px;width:48px;height:20px;border-right:1px solid #d9d9d9;border-bottom:1px solid #d9d9d9;justify-content:flex-start;text-align:left;padding-left:2px;padding-top:2px">493.00</div>
<div class="c" style="left:420px;top:431px;width:48px;height:20px;border-right:1px solid #d9d9d9;border-bottom:1px solid #d9d9d9;justify-content:flex-start;text-align:left;padding-left:2px;padding-top:2px">51.00</div>
<div class="c" style="left:468px;top:431px;width:48px;height:20px;border-right:1px solid #d9d9d9;border-bottom:1px solid #d9d9d9;justify-content:flex-start;text-align:left;padding-left:2px;padding-top:2px">45.00</div>
<div class="c" style="left:516px;top:431px;width:48px;height:20px;border-right:1px solid #d9d9d9;border-bottom:1px solid #d9d9d9;justify-content:flex-start;text-align:left;padding-left:2px;padding-top:2px">165.50</div>
<div class="c" style="left:564px;top:431px;width:48px;height:20px;border-right:1px solid #d9d9d9;border-bottom:1px solid #d9d9d9;justify-content:flex-start;text-align:left;padding-left:2px;padding-top:2px">214.00</div>
<div class="c" style="left:612px;top:431px;width:48px;height:20px;border-right:1px solid #d9d9d9;border-bottom:1px solid #d9d9d9;justify-content:flex-start;text-align:left;padding-left:2px;padding-top:2px">262.20</div>
<div class="c" style="left:660px;top:431px;width:48px;height:20px;border-right:1px solid #d9d9d9;border-bottom:1px solid #d9d9d9;justify-content:flex-start;text-align:left;padding-left:2px;padding-top:2px">1447.20</div>
<div class="c" style="left:708px;top:431px;width:48px;height:20px;border-right:1px solid #d9d9d9;border-bottom:1px solid #d9d9d9;justify-content:flex-start;text-align:left;padding-left:2px;padding-top:2px">253.14</div>
<div class="c" style="left:756px;top:431px;width:48px;height:20px;border-right:1px solid #d9d9d9;border-bottom:1px solid #d9d9d9;justify-content:flex-start;text-align:left;padding-left:2px;padding-top:2px">0.00</div>
<div class="c" style="left:804px;top:431px;width:48px;height:20px;border-right:1px solid #d9d9d9;border-bottom:1px solid #d9d9d9;justify-content:flex-start;text-align:left;padding-left:2px;padding-top:2px">0.00</div>
<div class="c" style="left:852px;top:431px;width:42px;height:20px;border-right:1px solid #d9d9d9;border-bottom:1px solid #d9d9d9;justify-content:flex-start;text-align:left;padding-left:2px;padding-top:2px">0</div>
<div class="c" style="left:894px;top:431px;width:42px;height:20px;border-right:1px solid #d9d9d9;border-bottom:1px solid #d9d9d9;justify-content:flex-start;text-align:left;padding-left:2px;padding-top:2px">0.00</div>
<div class="c" style="left:936px;top:431px;width:56px;height:20px;border-right:1px solid #d9d9d9;border-bottom:1px solid #d9d9d9;justify-content:flex-start;text-align:left;padding-left:2px;padding-top:2px">12509.00</div>
<div class="c" style="left:992px;top:431px;width:56px;height:20px;border-right:1px solid #d9d9d9;border-bottom:1px solid #d9d9d9;justify-content:flex-start;text-align:left;padding-left:2px;padding-top:2px">11493.00</div>
<div class="c" style="left:1048px;top:431px;width:56px;height:20px;border-right:1px solid #d9d9d9;border-bottom:1px solid #d9d9d9;justify-content:flex-start;text-align:left;padding-left:2px;padding-top:2px">7701.00</div>
<div class="c" style="left:1104px;top:431px;width:56px;height:20px;border-right:1px solid #d9d9d9;border-bottom:1px solid #d9d9d9;justify-content:flex-start;text-align:left;padding-left:2px;padding-top:2px">84.00</div>
<div class="c" style="left:1160px;top:431px;width:56px;height:20px;border-right:1px solid #d9d9d9;border-bottom:1px solid #d9d9d9;justify-content:flex-start;text-align:left;padding-left:2px;padding-top:2px">1148.00</div>
<div class="c" style="left:1216px;top:431px;width:56px;height:20px;border-right:1px solid #d9d9d9;border-bottom:1px solid #d9d9d9;justify-content:flex-start;text-align:left;padding-left:2px;padding-top:2px">58.00</div>
<div class="c" style="left:1272px;top:431px;width:56px;height:20px;border-right:1px solid #d9d9d9;border-bottom:1px solid #d9d9d9;justify-content:flex-start;text-align:left;padding-left:2px;padding-top:2px">146.00</div>
<div class="c" style="left:1328px;top:431px;width:56px;height:20px;border-right:1px solid #d9d9d9;border-bottom:1px solid #d9d9d9;justify-content:flex-start;text-align:left;padding-left:2px;padding-top:2px">93.10</div>
<div class="c" style="left:1384px;top:431px;width:56px;height:20px;border-right:1px solid #d9d9d9;border-bottom:1px solid #d9d9d9;justify-content:flex-start;text-align:left;padding-left:2px;padding-top:2px">213.00</div>
<div class="c" style="left:1440px;top:431px;width:56px;height:20px;border-right:1px solid #d9d9d9;border-bottom:1px solid #d9d9d9;justify-content:flex-start;text-align:left;padding-left:2px;padding-top:2px">27.60</div>
<div class="c" style="left:1496px;top:431px;width:56px;height:20px;border-right:1px solid #d9d9d9;border-bottom:1px solid #d9d9d9;justify-content:flex-start;text-align:left;padding-left:2px;padding-top:2px">87.50</div>
<div class="c" style="left:1552px;top:431px;width:56px;height:20px;border-right:1px solid #d9d9d9;border-bottom:1px solid #d9d9d9;justify-content:flex-start;text-align:left;padding-left:2px;padding-top:2px">386.00</div>
<div class="c" style="left:1608px;top:431px;width:56px;height:20px;border-right:1px solid #d9d9d9;border-bottom:1px solid #d9d9d9;justify-content:flex-start;text-align:left;padding-left:2px;padding-top:2px">3318.59</div>
<div class="c" style="left:1664px;top:431px;width:56px;height:20px;border-right:1px solid #d9d9d9;border-bottom:1px solid #d9d9d9;justify-content:flex-start;text-align:left;padding-left:2px;padding-top:2px">2819.59</div>
<div class="c" style="left:1720px;top:431px;width:56px;height:20px;border-right:1px solid #d9d9d9;border-bottom:1px solid #d9d9d9;justify-content:flex-start;text-align:left;padding-left:2px;padding-top:2px">7083.58</div>
<div class="c" style="left:40px;top:451px;width:173px;height:20px;border-right:1px solid #d9d9d9;border-bottom:1px solid #d9d9d9;justify-content:flex-start;text-align:left;padding-left:2px;padding-top:2px">2025-01-13 10:33:00</div>
<div class="c" style="left:213px;top:451px;width:63px;height:20px;border-right:1px solid #d9d9d9;border-bottom:1px solid #d9d9d9;justify-content:flex-start;text-align:left;padding-left:2px;padding-top:2px"><span class="zh">中班</span></div>
<div class="c" style="left:276px;top:451px;width:48px;height:20px;border-right:1px solid #d9d9d9;border-bottom:1px solid #d9d9d9;justify-content:flex-start;text-align:left;padding-left:2px;padding-top:2px">261.20</div>
<div class="c" style="left:324px;top:451px;width:48px;height:20px;border-right:1px solid #d9d9d9;border-bottom:1px solid #d9d9d9;justify-content:flex-start;text-align:left;padding-left:2px;padding-top:2px">45.25</div>
<div class="c" style="left:372px;top:451px;width:48px;height:20px;border-right:1px solid #d9d9d9;border-bottom:1px solid #d9d9d9;justify-content:flex-start;text-align:left;padding-left:2px;padding-top:2px">327.00</div>
<div class="c" style="left:420px;top:451px;width:48px;height:20px;border-right:1px solid #d9d9d9;border-bottom:1px solid #d9d9d9;justify-content:flex-start;text-align:left;padding-left:2px;padding-top:2px">15.00</div>
<div class="c" style="left:468px;top:451px;width:48px;height:20px;border-right:1px solid #d9d9d9;border-bottom:1px solid #d9d9d9;justify-content:flex-start;text-align:left;padding-left:2px;padding-top:2px">37.00</div>
<div class="c" style="left:516px;top:451px;width:48px;height:20px;border-right:1px solid #d9d9d9;border-bottom:1px solid #d9d9d9;justify-content:flex-start;text-align:left;padding-left:2px;padding-top:2px">445.33</div>
<div class="c" style="left:564px;top:451px;width:48px;height:20px;border-right:1px solid #d9d9d9;border-bottom:1px solid #d9d9d9;justify-content:flex-start;text-align:left;padding-left:2px;padding-top:2px">536.14</div>
<div class="c" style="left:612px;top:451px;width:48px;height:20px;border-right:1px solid #d9d9d9;border-bottom:1px solid #d9d9d9;justify-content:flex-start;text-align:left;padding-left:2px;padding-top:2px">671.13</div>
<div class="c" style="left:660px;top:451px;width:48px;height:20px;border-right:1px solid #d9d9d9;border-bottom:1px solid #d9d9d9;justify-content:flex-start;text-align:left;padding-left:2px;padding-top:2px">531.00</div>
<div class="c" style="left:708px;top:451px;width:48px;height:20px;border-right:1px solid #d9d9d9;border-bottom:1px solid #d9d9d9;justify-content:flex-start;text-align:left;padding-left:2px;padding-top:2px">158.25</div>
<div class="c" style="left:756px;top:451px;width:48px;height:20px;border-right:1px solid #d9d9d9;border-bottom:1px solid #d9d9d9;justify-content:flex-start;text-align:left;padding-left:2px;padding-top:2px">0.00</div>
<div class="c" style="left:804px;top:451px;width:48px;height:20px;border-right:1px solid #d9d9d9;border-bottom:1px solid #d9d9d9;justify-content:flex-start;text-align:left;padding-left:2px;padding-top:2px">0.00</div>
<div class="c" style="left:852px;top:451px;width:42px;height:20px;border-right:1px solid #d9d9d9;border-bottom:1px solid #d9d9d9;justify-content:flex-start;text-align:left;padding-left:2px;padding-top:2px">0</div>
<div class="c" style="left:894px;top:451px;width:42px;height:20px;border-right:1px solid #d9d9d9;border-bottom:1px solid #d9d9d9;justify-content:flex-start;text-align:left;padding-left:2px;padding-top:2px">0.00</div>
<div class="c" style="left:936px;top:451px;width:56px;height:20px;border-right:1px solid #d9d9d9;border-bottom:1px solid #d9d9d9;justify-content:flex-start;text-align:left;padding-left:2px;padding-top:2px">13246.00</div>
<div class="c" style="left:992px;top:451px;width:56px;height:20px;border-right:1px solid #d9d9d9;border-bottom:1px solid #d9d9d9;justify-content:flex-start;text-align:left;padding-left:2px;padding-top:2px">10756.00</div>
<div class="c" style="left:1048px;top:451px;width:56px;height:20px;border-right:1px solid #d9d9d9;border-bottom:1px solid #d9d9d9;justify-content:flex-start;text-align:left;padding-left:2px;padding-top:2px">6126.00</div>
<div class="c" style="left:1104px;top:451px;width:56px;height:20px;border-right:1px solid #d9d9d9;border-bottom:1px solid #d9d9d9;justify-content:flex-start;text-align:left;padding-left:2px;padding-top:2px">106.00</div>
<div class="c" style="left:1160px;top:451px;width:56px;height:20px;border-right:1px solid #d9d9d9;border-bottom:1px solid #d9d9d9;justify-content:flex-start;text-align:left;padding-left:2px;padding-top:2px">1162.00</div>
<div class="c" style="left:1216px;top:451px;width:56px;height:20px;border-right:1px solid #d9d9d9;border-bottom:1px solid #d9d9d9;justify-content:flex-start;text-align:left;padding-left:2px;padding-top:2px">48.00</div>
<div class="c" style="left:1272px;top:451px;width:56px;height:20px;border-right:1px solid #d9d9d9;border-bottom:1px solid #d9d9d9;justify-content:flex-start;text-align:left;padding-left:2px;padding-top:2px">96.00</div>
<div class="c" style="left:1328px;top:451px;width:56px;height:20px;border-right:1px solid #d9d9d9;border-bottom:1px solid #d9d9d9;justify-content:flex-start;text-align:left;padding-left:2px;padding-top:2px">178.20</div>
<div class="c" style="left:1384px;top:451px;width:56px;height:20px;border-right:1px solid #d9d9d9;border-bottom:1px solid #d9d9d9;justify-content:flex-start;text-align:left;padding-left:2px;padding-top:2px">397.00</div>
<div class="c" style="left:1440px;top:451px;width:56px;height:20px;border-right:1px solid #d9d9d9;border-bottom:1px solid #d9d9d9;justify-content:flex-start;text-align:left;padding-left:2px;padding-top:2px">79.40</div>
<div class="c" style="left:1496px;top:451px;width:56px;height:20px;border-right:1px solid #d9d9d9;border-bottom:1px solid #d9d9d9;justify-content:flex-start;text-align:left;padding-left:2px;padding-top:2px">127.25</div>
<div class="c" style="left:1552px;top:451px;width:56px;height:20px;border-right:1px solid #d9d9d9;border-bottom:1px solid #d9d9d9;justify-content:flex-start;text-align:left;padding-left:2px;padding-top:2px">306.00</div>
<div class="c" style="left:1608px;top:451px;width:56px;height:20px;border-right:1px solid #d9d9d9;border-bottom:1px solid #d9d9d9;justify-content:flex-start;text-align:left;padding-left:2px;padding-top:2px">9714.85</div>
<div class="c" style="left:1664px;top:451px;width:56px;height:20px;border-right:1px solid #d9d9d9;border-bottom:1px solid #d9d9d9;justify-content:flex-start;text-align:left;padding-left:2px;padding-top:2px">1268.35</div>
<div class="c" style="left:1720px;top:451px;width:56px;height:20px;border-right:1px solid #d9d9d9;border-bottom:1px solid #d9d9d9;justify-content:flex-start;text-align:left;padding-left:2px;padding-top:2px">3896.59</div>
<div class="c" style="left:40px;top:471px;width:173px;height:20px;border-right:1px solid #d9d9d9;border-bottom:1px solid #d9d9d9;justify-content:flex-start;text-align:left;padding-left:2px;padding-top:2px">2025-01-13 10:34:00</div>
<div class="c" style="left:213px;top:471px;width:63px;height:20px;border-right:1px solid #d9d9d9;border-bottom:1px solid #d9d9d9;justify-content:flex-start;text-align:left;padding-left:2px;padding-top:2px"><span class="zh">中班</span></div>
<div class="c" style="left:276px;top:471px;width:48px;height:20px;border-right:1px solid #d9d9d9;border-bottom:1px solid #d9d9d9;justify-content:flex-start;text-align:left;padding-left:2px;padding-top:2px">292.25</div>
<div class="c" style="left:324px;top:471px;width:48px;height:20px;border-right:1px solid #d9d9d9;border-bottom:1px solid #d9d9d9;justify-content:flex-start;text-align:left;padding-left:2px;padding-top:2px">560.14</div>
<div class="c" style="left:372px;top:471px;width:48px;height:20px;border-right:1px solid #d9d9d9;border-bottom:1px solid #d9d9d9;justify-content:flex-start;text-align:left;padding-left:2px;padding-top:2px">424.00</div>
<div class="c" style="left:420px;top:471px;width:48px;height:20px;border-right:1px solid #d9d9d9;border-bottom:1px solid #d9d9d9;justify-content:flex-start;text-align:left;padding-left:2px;padding-top:2px">24.00</div>
<div class="c" style="left:468px;top:471px;width:48px;height:20px;border-right:1px solid #d9d9d9;border-bottom:1px solid #d9d9d9;justify-content:flex-start;text-align:left;padding-left:2px;padding-top:2px">16.00</div>
<div class="c" style="left:516px;top:471px;width:48px;height:20px;border-right:1px solid #d9d9d9;border-bottom:1px solid #d9d9d9;justify-content:flex-start;text-align:left;padding-left:2px;padding-top:2px">686.00</div>
<div class="c" style="left:564px;top:471px;width:48px;height:20px;border-right:1px solid #d9d9d9;border-bottom:1px solid #d9d9d9;justify-content:flex-start;text-align:left;padding-left:2px;padding-top:2px">496.50</div>
<div class="c" style="left:612px;top:471px;width:48px;height:20px;border-right:1px solid #d9d9d9;border-bottom:1px solid #d9d9d9;justify-content:flex-start;text-align:left;padding-left:2px;padding-top:2px">852.17</div>
<div class="c" style="left:660px;top:471px;width:48px;height:20px;border-right:1px solid #d9d9d9;border-bottom:1px solid #d9d9d9;justify-content:flex-start;text-align:left;padding-left:2px;padding-top:2px">1264.13</div>
<div class="c" style="left:708px;top:471px;width:48px;height:20px;border-right:1px solid #d9d9d9;border-bottom:1px solid #d9d9d9;justify-content:flex-start;text-align:left;padding-left:2px;padding-top:2px">217.25</div>
<div class="c" style="left:756px;top:471px;width:48px;height:20px;border-right:1px solid #d9d9d9;border-bottom:1px solid #d9d9d9;justify-content:flex-start;text-align:left;padding-left:2px;padding-top:2px">0.00</div>
<div class="c" style="left:804px;top:471px;width:48px;height:20px;border-right:1px solid #d9d9d9;border-bottom:1px solid #d9d9d9;justify-content:flex-start;text-align:left;padding-left:2px;padding-top:2px">0.00</div>
<div class="c" style="left:852px;top:471px;width:42px;height:20px;border-right:1px solid #d9d9d9;border-bottom:1px solid #d9d9d9;justify-content:flex-start;text-align:left;padding-left:2px;padding-top:2px">0</div>
<div class="c" style="left:894px;top:471px;width:42px;height:20px;border-right:1px solid #d9d9d9;border-bottom:1px solid #d9d9d9;justify-content:flex-start;text-align:left;padding-left:2px;padding-top:2px">0.00</div>
<div class="c" style="left:936px;top:471px;width:56px;height:20px;border-right:1px solid #d9d9d9;border-bottom:1px solid #d9d9d9;justify-content:flex-start;text-align:left;padding-left:2px;padding-top:2px">13980.00</div>
<div class="c" style="left:992px;top:471px;width:56px;height:20px;border-right:1px solid #d9d9d9;border-bottom:1px solid #d9d9d9;justify-content:flex-start;text-align:left;padding-left:2px;padding-top:2px">10022.00</div>
<div class="c" style="left:1048px;top:471px;width:56px;height:20px;border-right:1px solid #d9d9d9;border-bottom:1px solid #d9d9d9;justify-content:flex-start;text-align:left;padding-left:2px;padding-top:2px">4476.00</div>
<div class="c" style="left:1104px;top:471px;width:56px;height:20px;border-right:1px solid #d9d9d9;border-bottom:1px solid #d9d9d9;justify-content:flex-start;text-align:left;padding-left:2px;padding-top:2px">14.00</div>
<div class="c" style="left:1160px;top:471px;width:56px;height:20px;border-right:1px solid #d9d9d9;border-bottom:1px solid #d9d9d9;justify-content:flex-start;text-align:left;padding-left:2px;padding-top:2px">1177.00</div>
<div class="c" style="left:1216px;top:471px;width:56px;height:20px;border-right:1px solid #d9d9d9;border-bottom:1px solid #d9d9d9;justify-content:flex-start;text-align:left;padding-left:2px;padding-top:2px">38.00</div>
<div class="c" style="left:1272px;top:471px;width:56px;height:20px;border-right:1px solid #d9d9d9;border-bottom:1px solid #d9d9d9;justify-content:flex-start;text-align:left;padding-left:2px;padding-top:2px">48.00</div>
<div class="c" style="left:1328px;top:471px;width:56px;height:20px;border-right:1px solid #d9d9d9;border-bottom:1px solid #d9d9d9;justify-content:flex-start;text-align:left;padding-left:2px;padding-top:2px">261.00</div>
<div class="c" style="left:1384px;top:471px;width:56px;height:20px;border-right:1px solid #d9d9d9;border-bottom:1px solid #d9d9d9;justify-content:flex-start;text-align:left;padding-left:2px;padding-top:2px">580.00</div>
<div class="c" style="left:1440px;top:471px;width:56px;height:20px;border-right:1px solid #d9d9d9;border-bottom:1px solid #d9d9d9;justify-content:flex-start;text-align:left;padding-left:2px;padding-top:2px">130.50</div>
<div class="c" style="left:1496px;top:471px;width:56px;height:20px;border-right:1px solid #d9d9d9;border-bottom:1px solid #d9d9d9;justify-content:flex-start;text-align:left;padding-left:2px;padding-top:2px">166.25</div>
<div class="c" style="left:1552px;top:471px;width:56px;height:20px;border-right:1px solid #d9d9d9;border-bottom:1px solid #d9d9d9;justify-content:flex-start;text-align:left;padding-left:2px;padding-top:2px">223.50</div>
<div class="c" style="left:1608px;top:471px;width:56px;height:20px;border-right:1px solid #d9d9d9;border-bottom:1px solid #d9d9d9;justify-content:flex-start;text-align:left;padding-left:2px;padding-top:2px">6584.49</div>
<div class="c" style="left:1664px;top:471px;width:56px;height:20px;border-right:1px solid #d9d9d9;border-bottom:1px solid #d9d9d9;justify-content:flex-start;text-align:left;padding-left:2px;padding-top:2px">738.28</div>
<div class="c" style="left:1720px;top:471px;width:56px;height:20px;border-right:1px solid #d9d9d9;border-bottom:1px solid #d9d9d9;justify-content:flex-start;text-align:left;padding-left:2px;padding-top:2px">9509.80</div>
<div class="c" style="left:40px;top:491px;width:173px;height:20px;border-right:1px solid #d9d9d9;border-bottom:1px solid #d9d9d9;justify-content:flex-start;text-align:left;padding-left:2px;padding-top:2px">2025-01-13 10:35:00</div>
<div class="c" style="left:213px;top:491px;width:63px;height:20px;border-right:1px solid #d9d9d9;border-bottom:1px solid #d9d9d9;justify-content:flex-start;text-align:left;padding-left:2px;padding-top:2px"><span class="zh">中班</span></div>
<div class="c" style="left:276px;top:491px;width:48px;height:20px;border-right:1px solid #d9d9d9;border-bottom:1px solid #d9d9d9;justify-content:flex-start;text-align:left;padding-left:2px;padding-top:2px">300.00</div>
<div class="c" style="left:324px;top:491px;width:48px;height:20px;border-right:1px solid #d9d9d9;border-bottom:1px solid #d9d9d9;justify-content:flex-start;text-align:left;padding-left:2px;padding-top:2px">351.20</div>
<div class="c" style="left:372px;top:491px;width:48px;height:20px;border-right:1px solid #d9d9d9;border-bottom:1px solid #d9d9d9;justify-content:flex-start;text-align:left;padding-left:2px;padding-top:2px">233.00</div>
<div class="c" style="left:420px;top:491px;width:48px;height:20px;border-right:1px solid #d9d9d9;border-bottom:1px solid #d9d9d9;justify-content:flex-start;text-align:left;padding-left:2px;padding-top:2px">17.00</div>
<div class="c" style="left:468px;top:491px;width:48px;height:20px;border-right:1px solid #d9d9d9;border-bottom:1px solid #d9d9d9;justify-content:flex-start;text-align:left;padding-left:2px;padding-top:2px">27.00</div>
<div class="c" style="left:516px;top:491px;width:48px;height:20px;border-right:1px solid #d9d9d9;border-bottom:1px solid #d9d9d9;justify-content:flex-start;text-align:left;padding-left:2px;padding-top:2px">433.20</div>
<div class="c" style="left:564px;top:491px;width:48px;height:20px;border-right:1px solid #d9d9d9;border-bottom:1px solid #d9d9d9;justify-content:flex-start;text-align:left;padding-left:2px;padding-top:2px">395.50</div>
<div class="c" style="left:612px;top:491px;width:48px;height:20px;border-right:1px solid #d9d9d9;border-bottom:1px solid #d9d9d9;justify-content:flex-start;text-align:left;padding-left:2px;padding-top:2px">354.25</div>
<div class="c" style="left:660px;top:491px;width:48px;height:20px;border-right:1px solid #d9d9d9;border-bottom:1px solid #d9d9d9;justify-content:flex-start;text-align:left;padding-left:2px;padding-top:2px">836.20</div>
<div class="c" style="left:708px;top:491px;width:48px;height:20px;border-right:1px solid #d9d9d9;border-bottom:1px solid #d9d9d9;justify-content:flex-start;text-align:left;padding-left:2px;padding-top:2px">340.14</div>
<div class="c" style="left:756px;top:491px;width:48px;height:20px;border-right:1px solid #d9d9d9;border-bottom:1px solid #d9d9d9;justify-content:flex-start;text-align:left;padding-left:2px;padding-top:2px">0.00</div>
<div class="c" style="left:804px;top:491px;width:48px;height:20px;border-right:1px solid #d9d9d9;border-bottom:1px solid #d9d9d9;justify-content:flex-start;text-align:left;padding-left:2px;padding-top:2px">0.00</div>
<div class="c" style="left:852px;top:491px;width:42px;height:20px;border-right:1px solid #d9d9d9;border-bottom:1px solid #d9d9d9;justify-content:flex-start;text-align:left;padding-left:2px;padding-top:2px">0</div>
<div class="c" style="left:894px;top:491px;width:42px;height:20px;border-right:1px solid #d9d9d9;border-bottom:1px solid #d9d9d9;justify-content:flex-start;text-align:left;padding-left:2px;padding-top:2px">0.00</div>
<div class="c" style="left:936px;top:491px;width:56px;height:20px;border-right:1px solid #d9d9d9;border-bottom:1px solid #d9d9d9;justify-content:flex-start;text-align:left;padding-left:2px;padding-top:2px">14710.00</div>
<div class="c" style="left:992px;top:491px;width:56px;height:20px;border-right:1px solid #d9d9d9;border-bottom:1px solid #d9d9d9;justify-content:flex-start;text-align:left;padding-left:2px;padding-top:2px">9292.00</div>
<div class="c" style="left:1048px;top:491px;width:56px;height:20px;border-right:1px solid #d9d9d9;border-bottom:1px solid #d9d9d9;justify-content:flex-start;text-align:left;padding-left:2px;padding-top:2px">2726.00</div>
<div class="c" style="left:1104px;top:491px;width:56px;height:20px;border-right:1px solid #d9d9d9;border-bottom:1px solid #d9d9d9;justify-content:flex-start;text-align:left;padding-left:2px;padding-top:2px">34.00</div>
<div class="c" style="left:1160px;top:491px;width:56px;height:20px;border-right:1px solid #d9d9d9;border-bottom:1px solid #d9d9d9;justify-content:flex-start;text-align:left;padding-left:2px;padding-top:2px">1192.00</div>
<div class="c" style="left:1216px;top:491px;width:56px;height:20px;border-right:1px solid #d9d9d9;border-bottom:1px solid #d9d9d9;justify-content:flex-start;text-align:left;padding-left:2px;padding-top:2px">26.00</div>
<div class="c" style="left:1272px;top:491px;width:56px;height:20px;border-right:1px solid #d9d9d9;border-bottom:1px solid #d9d9d9;justify-content:flex-start;text-align:left;padding-left:2px;padding-top:2px">990.00</div>
<div class="c" style="left:1328px;top:491px;width:56px;height:20px;border-right:1px solid #d9d9d9;border-bottom:1px solid #d9d9d9;justify-content:flex-start;text-align:left;padding-left:2px;padding-top:2px">346.10</div>
<div class="c" style="left:1384px;top:491px;width:56px;height:20px;border-right:1px solid #d9d9d9;border-bottom:1px solid #d9d9d9;justify-content:flex-start;text-align:left;padding-left:2px;padding-top:2px">763.00</div>
<div class="c" style="left:1440px;top:491px;width:56px;height:20px;border-right:1px solid #d9d9d9;border-bottom:1px solid #d9d9d9;justify-content:flex-start;text-align:left;padding-left:2px;padding-top:2px">181.60</div>
<div class="c" style="left:1496px;top:491px;width:56px;height:20px;border-right:1px solid #d9d9d9;border-bottom:1px solid #d9d9d9;justify-content:flex-start;text-align:left;padding-left:2px;padding-top:2px">205.25</div>
<div class="c" style="left:1552px;top:491px;width:56px;height:20px;border-right:1px solid #d9d9d9;border-bottom:1px solid #d9d9d9;justify-content:flex-start;text-align:left;padding-left:2px;padding-top:2px">136.00</div>
<div class="c" style="left:1608px;top:491px;width:56px;height:20px;border-right:1px solid #d9d9d9;border-bottom:1px solid #d9d9d9;justify-content:flex-start;text-align:left;padding-left:2px;padding-top:2px">3263.98</div>
<div class="c" style="left:1664px;top:491px;width:56px;height:20px;border-right:1px solid #d9d9d9;border-bottom:1px solid #d9d9d9;justify-content:flex-start;text-align:left;padding-left:2px;padding-top:2px">4373.36</div>
<div class="c" style="left:1720px;top:491px;width:56px;height:20px;border-right:1px solid #d9d9d9;border-bottom:1px solid #d9d9d9;justify-content:flex-start;text-align:left;padding-left:2px;padding-top:2px">33.47</div>
<div class="c" style="left:40px;top:511px;width:173px;height:20px;border-right:1px solid #d9d9d9;border-bottom:1px solid #d9d9d9;justify-content:flex-start;text-align:left;padding-left:2px;padding-top:2px">2025-01-13 10:36:00</div>
<div class="c" style="left:213px;top:511px;width:63px;height:20px;border-right:1px solid #d9d9d9;border-bottom:1px solid #d9d9d9;justify-content:flex-start;text-align:left;padding-left:2px;padding-top:2px"><span class="zh">中班</span></div>
<div class="c" style="left:276px;top:511px;width:48px;height:20px;border-right:1px solid #d9d9d9;border-bottom:1px solid #d9d9d9;justify-content:flex-start;text-align:left;padding-left:2px;padding-top:2px">293.33</div>
<div class="c" style="left:324px;top:511px;width:48px;height:20px;border-right:1px solid #d9d9d9;border-bottom:1px solid #d9d9d9;justify-content:flex-start;text-align:left;padding-left:2px;padding-top:2px">583.17</div>
<div class="c" style="left:372px;top:511px;width:48px;height:20px;border-right:1px solid #d9d9d9;border-bottom:1px solid #d9d9d9;justify-content:flex-start;text-align:left;padding-left:2px;padding-top:2px">305.00</div>
<div class="c" style="left:420px;top:511px;width:48px;height:20px;border-right:1px solid #d9d9d9;border-bottom:1px solid #d9d9d9;justify-content:flex-start;text-align:left;padding-left:2px;padding-top:2px">19.00</div>
<div class="c" style="left:468px;top:511px;width:48px;height:20px;border-right:1px solid #d9d9d9;border-bottom:1px solid #d9d9d9;justify-content:flex-start;text-align:left;padding-left:2px;padding-top:2px">13.00</div>
<div class="c" style="left:516px;top:511px;width:48px;height:20px;border-right:1px solid #d9d9d9;border-bottom:1px solid #d9d9d9;justify-content:flex-start;text-align:left;padding-left:2px;padding-top:2px">721.13</div>
<div class="c" style="left:564px;top:511px;width:48px;height:20px;border-right:1px solid #d9d9d9;border-bottom:1px solid #d9d9d9;justify-content:flex-start;text-align:left;padding-left:2px;padding-top:2px">22.00</div>
<div class="c" style="left:612px;top:511px;width:48px;height:20px;border-right:1px solid #d9d9d9;border-bottom:1px solid #d9d9d9;justify-content:flex-start;text-align:left;padding-left:2px;padding-top:2px">379.33</div>
<div class="c" style="left:660px;top:511px;width:48px;height:20px;border-right:1px solid #d9d9d9;border-bottom:1px solid #d9d9d9;justify-content:flex-start;text-align:left;padding-left:2px;padding-top:2px">462.50</div>
<div class="c" style="left:708px;top:511px;width:48px;height:20px;border-right:1px solid #d9d9d9;border-bottom:1px solid #d9d9d9;justify-content:flex-start;text-align:left;padding-left:2px;padding-top:2px">766.00</div>
<div class="c" style="left:756px;top:511px;width:48px;height:20px;border-right:1px solid #d9d9d9;border-bottom:1px solid #d9d9d9;justify-content:flex-start;text-align:left;padding-left:2px;padding-top:2px">0.00</div>
<div class="c" style="left:804px;top:511px;width:48px;height:20px;border-right:1px solid #d9d9d9;border-bottom:1px solid #d9d9d9;justify-content:flex-start;text-align:left;padding-left:2px;padding-top:2px">0.00</div>
<div class="c" style="left:852px;top:511px;width:42px;height:20px;border-right:1px solid #d9d9d9;border-bottom:1px solid #d9d9d9;justify-content:flex-start;text-align:left;padding-left:2px;padding-top:2px">0</div>
<div class="c" style="left:894px;top:511px;width:42px;height:20px;border-right:1px solid #d9d9d9;border-bottom:1px solid #d9d9d9;justify-content:flex-start;text-align:left;padding-left:2px;padding-top:2px">0.00</div>
<div class="c" style="left:936px;top:511px;width:56px;height:20px;border-right:1px solid #d9d9d9;border-bottom:1px solid #d9d9d9;justify-content:flex-start;text-align:left;padding-left:2px;padding-top:2px">442.00</div>
<div class="c" style="left:992px;top:511px;width:56px;height:20px;border-right:1px solid #d9d9d9;border-bottom:1px solid #d9d9d9;justify-content:flex-start;text-align:left;padding-left:2px;padding-top:2px">8560.00</div>
<div class="c" style="left:1048px;top:511px;width:56px;height:20px;border-right:1px solid #d9d9d9;border-bottom:1px solid #d9d9d9;justify-content:flex-start;text-align:left;padding-left:2px;padding-top:2px">1026.00</div>
<div class="c" style="left:1104px;top:511px;width:56px;height:20px;border-right:1px solid #d9d9d9;border-bottom:1px solid #d9d9d9;justify-content:flex-start;text-align:left;padding-left:2px;padding-top:2px">56.00</div>
<div class="c" style="left:1160px;top:511px;width:56px;height:20px;border-right:1px solid #d9d9d9;border-bottom:1px solid #d9d9d9;justify-content:flex-start;text-align:left;padding-left:2px;padding-top:2px">805.00</div>
<div class="c" style="left:1216px;top:511px;width:56px;height:20px;border-right:1px solid #d9d9d9;border-bottom:1px solid #d9d9d9;justify-content:flex-start;text-align:left;padding-left:2px;padding-top:2px">16.00</div>
<div class="c" style="left:1272px;top:511px;width:56px;height:20px;border-right:1px solid #d9d9d9;border-bottom:1px solid #d9d9d9;justify-content:flex-start;text-align:left;padding-left:2px;padding-top:2px">942.00</div>
<div class="c" style="left:1328px;top:511px;width:56px;height:20px;border-right:1px solid #d9d9d9;border-bottom:1px solid #d9d9d9;justify-content:flex-start;text-align:left;padding-left:2px;padding-top:2px">431.20</div>
<div class="c" style="left:1384px;top:511px;width:56px;height:20px;border-right:1px solid #d9d9d9;border-bottom:1px solid #d9d9d9;justify-content:flex-start;text-align:left;padding-left:2px;padding-top:2px">946.00</div>
<div class="c" style="left:1440px;top:511px;width:56px;height:20px;border-right:1px solid #d9d9d9;border-bottom:1px solid #d9d9d9;justify-content:flex-start;text-align:left;padding-left:2px;padding-top:2px">233.40</div>
<div class="c" style="left:1496px;top:511px;width:56px;height:20px;border-right:1px solid #d9d9d9;border-bottom:1px solid #d9d9d9;justify-content:flex-start;text-align:left;padding-left:2px;padding-top:2px">245.00</div>
<div class="c" style="left:1552px;top:511px;width:56px;height:20px;border-right:1px solid #d9d9d9;border-bottom:1px solid #d9d9d9;justify-content:flex-start;text-align:left;padding-left:2px;padding-top:2px">51.00</div>
<div class="c" style="left:1608px;top:511px;width:56px;height:20px;border-right:1px solid #d9d9d9;border-bottom:1px solid #d9d9d9;justify-content:flex-start;text-align:left;padding-left:2px;padding-top:2px">7170.96</div>
<div class="c" style="left:1664px;top:511px;width:56px;height:20px;border-right:1px solid #d9d9d9;border-bottom:1px solid #d9d9d9;justify-content:flex-start;text-align:left;padding-left:2px;padding-top:2px">7381.55</div>
<div class="c" style="left:1720px;top:511px;width:56px;height:20px;border-right:1px solid #d9d9d9;border-bottom:1px solid #d9d9d9;justify-content:flex-start;text-align:left;padding-left:2px;padding-top:2px">791.89</div>
<div class="c" style="left:40px;top:531px;width:173px;height:20px;border-right:1px solid #d9d9d9;border-bottom:1px solid #d9d9d9;justify-content:flex-start;text-align:left;padding-left:2px;padding-top:2px">2025-01-13 10:37:00</div>
<div class="c" style="left:213px;top:531px;width:63px;height:20px;border-right:1px solid #d9d9d9;border-bottom:1px solid #d9d9d9;justify-content:flex-start;text-align:left;padding-left:2px;padding-top:2px"><span class="zh">中班</span></div>
<div class="c" style="left:276px;top:531px;width:48px;height:20px;border-right:1px solid #d9d9d9;border-bottom:1px solid #d9d9d9;justify-content:flex-start;text-align:left;padding-left:2px;padding-top:2px">232.00</div>
<div class="c" style="left:324px;top:531px;width:48px;height:20px;border-right:1px solid #d9d9d9;border-bottom:1px solid #d9d9d9;justify-content:flex-start;text-align:left;padding-left:2px;padding-top:2px">418.17</div>
<div class="c" style="left:372px;top:531px;width:48px;height:20px;border-right:1px solid #d9d9d9;border-bottom:1px solid #d9d9d9;justify-content:flex-start;text-align:left;padding-left:2px;padding-top:2px">349.00</div>
<div class="c" style="left:420px;top:531px;width:48px;height:20px;border-right:1px solid #d9d9d9;border-bottom:1px solid #d9d9d9;justify-content:flex-start;text-align:left;padding-left:2px;padding-top:2px">51.00</div>
<div class="c" style="left:468px;top:531px;width:48px;height:20px;border-right:1px solid #d9d9d9;border-bottom:1px solid #d9d9d9;justify-content:flex-start;text-align:left;padding-left:2px;padding-top:2px">19.00</div>
<div class="c" style="left:516px;top:531px;width:48px;height:20px;border-right:1px solid #d9d9d9;border-bottom:1px solid #d9d9d9;justify-content:flex-start;text-align:left;padding-left:2px;padding-top:2px">722.00</div>
<div class="c" style="left:564px;top:531px;width:48px;height:20px;border-right:1px solid #d9d9d9;border-bottom:1px solid #d9d9d9;justify-content:flex-start;text-align:left;padding-left:2px;padding-top:2px">345.17</div>
<div class="c" style="left:612px;top:531px;width:48px;height:20px;border-right:1px solid #d9d9d9;border-bottom:1px solid #d9d9d9;justify-content:flex-start;text-align:left;padding-left:2px;padding-top:2px">454.50</div>
<div class="c" style="left:660px;top:531px;width:48px;height:20px;border-right:1px solid #d9d9d9;border-bottom:1px solid #d9d9d9;justify-content:flex-start;text-align:left;padding-left:2px;padding-top:2px">355.25</div>
<div class="c" style="left:708px;top:531px;width:48px;height:20px;border-right:1px solid #d9d9d9;border-bottom:1px solid #d9d9d9;justify-content:flex-start;text-align:left;padding-left:2px;padding-top:2px">877.50</div>
<div class="c" style="left:756px;top:531px;width:48px;height:20px;border-right:1px solid #d9d9d9;border-bottom:1px solid #d9d9d9;justify-content:flex-start;text-align:left;padding-left:2px;padding-top:2px">0.00</div>
<div class="c" style="left:804px;top:531px;width:48px;height:20px;border-right:1px solid #d9d9d9;border-bottom:1px solid #d9d9d9;justify-content:flex-start;text-align:left;padding-left:2px;padding-top:2px">0.00</div>
<div class="c" style="left:852px;top:531px;width:42px;height:20px;border-right:1px solid #d9d9d9;border-bottom:1px solid #d9d9d9;justify-content:flex-start;text-align:left;padding-left:2px;padding-top:2px">0</div>
<div class="c" style="left:894px;top:531px;width:42px;height:20px;border-right:1px solid #d9d9d9;border-bottom:1px solid #d9d9d9;justify-content:flex-start;text-align:left;padding-left:2px;padding-top:2px">0.00</div>
<div class="c" style="left:936px;top:531px;width:56px;height:20px;border-right:1px solid #d9d9d9;border-bottom:1px solid #d9d9d9;justify-content:flex-start;text-align:left;padding-left:2px;padding-top:2px">1180.00</div>
<div class="c" style="left:992px;top:531px;width:56px;height:20px;border-right:1px solid #d9d9d9;border-bottom:1px solid #d9d9d9;justify-content:flex-start;text-align:left;padding-left:2px;padding-top:2px">7822.00</div>
<div class="c" style="left:1048px;top:531px;width:56px;height:20px;border-right:1px solid #d9d9d9;border-bottom:1px solid #d9d9d9;justify-content:flex-start;text-align:left;padding-left:2px;padding-top:2px">9476.00</div>
<div class="c" style="left:1104px;top:531px;width:56px;height:20px;border-right:1px solid #d9d9d9;border-bottom:1px solid #d9d9d9;justify-content:flex-start;text-align:left;padding-left:2px;padding-top:2px">76.00</div>
<div class="c" style="left:1160px;top:531px;width:56px;height:20px;border-right:1px solid #d9d9d9;border-bottom:1px solid #d9d9d9;justify-content:flex-start;text-align:left;padding-left:2px;padding-top:2px">820.00</div>
<div class="c" style="left:1216px;top:531px;width:56px;height:20px;border-right:1px solid #d9d9d9;border-bottom:1px solid #d9d9d9;justify-content:flex-start;text-align:left;padding-left:2px;padding-top:2px">108.00</div>
<div class="c" style="left:1272px;top:531px;width:56px;height:20px;border-right:1px solid #d9d9d9;border-bottom:1px solid #d9d9d9;justify-content:flex-start;text-align:left;padding-left:2px;padding-top:2px">892.00</div>
<div class="c" style="left:1328px;top:531px;width:56px;height:20px;border-right:1px solid #d9d9d9;border-bottom:1px solid #d9d9d9;justify-content:flex-start;text-align:left;padding-left:2px;padding-top:2px">514.00</div>
<div class="c" style="left:1384px;top:531px;width:56px;height:20px;border-right:1px solid #d9d9d9;border-bottom:1px solid #d9d9d9;justify-content:flex-start;text-align:left;padding-left:2px;padding-top:2px">119.00</div>
<div class="c" style="left:1440px;top:531px;width:56px;height:20px;border-right:1px solid #d9d9d9;border-bottom:1px solid #d9d9d9;justify-content:flex-start;text-align:left;padding-left:2px;padding-top:2px">284.50</div>
<div class="c" style="left:1496px;top:531px;width:56px;height:20px;border-right:1px solid #d9d9d9;border-bottom:1px solid #d9d9d9;justify-content:flex-start;text-align:left;padding-left:2px;padding-top:2px">284.00</div>
<div class="c" style="left:1552px;top:531px;width:56px;height:20px;border-right:1px solid #d9d9d9;border-bottom:1px solid #d9d9d9;justify-content:flex-start;text-align:left;padding-left:2px;padding-top:2px">473.50</div>
<div class="c" style="left:1608px;top:531px;width:56px;height:20px;border-right:1px solid #d9d9d9;border-bottom:1px solid #d9d9d9;justify-content:flex-start;text-align:left;padding-left:2px;padding-top:2px">2675.65</div>
<div class="c" style="left:1664px;top:531px;width:56px;height:20px;border-right:1px solid #d9d9d9;border-bottom:1px solid #d9d9d9;justify-content:flex-start;text-align:left;padding-left:2px;padding-top:2px">4478.73</div>
<div class="c" style="left:1720px;top:531px;width:56px;height:20px;border-right:1px solid #d9d9d9;border-bottom:1px solid #d9d9d9;justify-content:flex-start;text-align:left;padding-left:2px;padding-top:2px">757.80</div>
<div class="c" style="left:40px;top:551px;width:173px;height:20px;border-right:1px solid #d9d9d9;border-bottom:1px solid #d9d9d9;justify-content:flex-start;text-align:left;padding-left:2px;padding-top:2px">2025-01-13 10:38:00</div>
<div class="c" style="left:213px;top:551px;width:63px;height:20px;border-right:1px solid #d9d9d9;border-bottom:1px solid #d9d9d9;justify-content:flex-start;text-align:left;padding-left:2px;padding-top:2px"><span class="zh">中班</span></div>
<div class="c" style="left:276px;top:551px;width:48px;height:20px;border-right:1px solid #d9d9d9;border-bottom:1px solid #d9d9d9;justify-content:flex-start;text-align:left;padding-left:2px;padding-top:2px">135.17</div>
<div class="c" style="left:324px;top:551px;width:48px;height:20px;border-right:1px solid #d9d9d9;border-bottom:1px solid #d9d9d9;justify-content:flex-start;text-align:left;padding-left:2px;padding-top:2px">481.20</div>
<div class="c" style="left:372px;top:551px;width:48px;height:20px;border-right:1px solid #d9d9d9;border-bottom:1px solid #d9d9d9;justify-content:flex-start;text-align:left;padding-left:2px;padding-top:2px">415.00</div>
<div class="c" style="left:420px;top:551px;width:48px;height:20px;border-right:1px solid #d9d9d9;border-bottom:1px solid #d9d9d9;justify-content:flex-start;text-align:left;padding-left:2px;padding-top:2px">75.00</div>
<div class="c" style="left:468px;top:551px;width:48px;height:20px;border-right:1px solid #d9d9d9;border-bottom:1px solid #d9d9d9;justify-content:flex-start;text-align:left;padding-left:2px;padding-top:2px">15.00</div>
<div class="c" style="left:516px;top:551px;width:48px;height:20px;border-right:1px solid #d9d9d9;border-bottom:1px solid #d9d9d9;justify-content:flex-start;text-align:left;padding-left:2px;padding-top:2px">716.17</div>
<div class="c" style="left:564px;top:551px;width:48px;height:20px;border-right:1px solid #d9d9d9;border-bottom:1px solid #d9d9d9;justify-content:flex-start;text-align:left;padding-left:2px;padding-top:2px">176.14</div>
<div class="c" style="left:612px;top:551px;width:48px;height:20px;border-right:1px solid #d9d9d9;border-bottom:1px solid #d9d9d9;justify-content:flex-start;text-align:left;padding-left:2px;padding-top:2px">863.14</div>
<div class="c" style="left:660px;top:551px;width:48px;height:20px;border-right:1px solid #d9d9d9;border-bottom:1px solid #d9d9d9;justify-content:flex-start;text-align:left;padding-left:2px;padding-top:2px">248.13</div>
<div class="c" style="left:708px;top:551px;width:48px;height:20px;border-right:1px solid #d9d9d9;border-bottom:1px solid #d9d9d9;justify-content:flex-start;text-align:left;padding-left:2px;padding-top:2px">801.13</div>
<div class="c" style="left:756px;top:551px;width:48px;height:20px;border-right:1px solid #d9d9d9;border-bottom:1px solid #d9d9d9;justify-content:flex-start;text-align:left;padding-left:2px;padding-top:2px">0.00</div>
<div class="c" style="left:804px;top:551px;width:48px;height:20px;border-right:1px solid #d9d9d9;border-bottom:1px solid #d9d9d9;justify-content:flex-start;text-align:left;padding-left:2px;padding-top:2px">0.00</div>
<div class="c" style="left:852px;top:551px;width:42px;height:20px;border-right:1px solid #d9d9d9;border-bottom:1px solid #d9d9d9;justify-content:flex-start;text-align:left;padding-left:2px;padding-top:2px">0</div>
<div class="c" style="left:894px;top:551px;width:42px;height:20px;border-right:1px solid #d9d9d9;border-bottom:1px solid #d9d9d9;justify-content:flex-start;text-align:left;padding-left:2px;padding-top:2px">0.00</div>
<div class="c" style="left:936px;top:551px;width:56px;height:20px;border-right:1px solid #d9d9d9;border-bottom:1px solid #d9d9d9;justify-content:flex-start;text-align:left;padding-left:2px;padding-top:2px">1916.00</div>
<div class="c" style="left:992px;top:551px;width:56px;height:20px;border-right:1px solid #d9d9d9;border-bottom:1px solid #d9d9d9;justify-content:flex-start;text-align:left;padding-left:2px;padding-top:2px">7086.00</div>
<div class="c" style="left:1048px;top:551px;width:56px;height:20px;border-right:1px solid #d9d9d9;border-bottom:1px solid #d9d9d9;justify-content:flex-start;text-align:left;padding-left:2px;padding-top:2px">7876.00</div>
<div class="c" style="left:1104px;top:551px;width:56px;height:20px;border-right:1px solid #d9d9d9;border-bottom:1px solid #d9d9d9;justify-content:flex-start;text-align:left;padding-left:2px;padding-top:2px">98.00</div>
<div class="c" style="left:1160px;top:551px;width:56px;height:20px;border-right:1px solid #d9d9d9;border-bottom:1px solid #d9d9d9;justify-content:flex-start;text-align:left;padding-left:2px;padding-top:2px">835.00</div>
<div class="c" style="left:1216px;top:551px;width:56px;height:20px;border-right:1px solid #d9d9d9;border-bottom:1px solid #d9d9d9;justify-content:flex-start;text-align:left;padding-left:2px;padding-top:2px">98.00</div>
<div class="c" style="left:1272px;top:551px;width:56px;height:20px;border-right:1px solid #d9d9d9;border-bottom:1px solid #d9d9d9;justify-content:flex-start;text-align:left;padding-left:2px;padding-top:2px">844.00</div>
<div class="c" style="left:1328px;top:551px;width:56px;height:20px;border-right:1px solid #d9d9d9;border-bottom:1px solid #d9d9d9;justify-content:flex-start;text-align:left;padding-left:2px;padding-top:2px">599.10</div>
<div class="c" style="left:1384px;top:551px;width:56px;height:20px;border-right:1px solid #d9d9d9;border-bottom:1px solid #d9d9d9;justify-content:flex-start;text-align:left;padding-left:2px;padding-top:2px">303.00</div>
<div class="c" style="left:1440px;top:551px;width:56px;height:20px;border-right:1px solid #d9d9d9;border-bottom:1px solid #d9d9d9;justify-content:flex-start;text-align:left;padding-left:2px;padding-top:2px">336.30</div>
<div class="c" style="left:1496px;top:551px;width:56px;height:20px;border-right:1px solid #d9d9d9;border-bottom:1px solid #d9d9d9;justify-content:flex-start;text-align:left;padding-left:2px;padding-top:2px">323.75</div>
<div class="c" style="left:1552px;top:551px;width:56px;height:20px;border-right:1px solid #d9d9d9;border-bottom:1px solid #d9d9d9;justify-content:flex-start;text-align:left;padding-left:2px;padding-top:2px">393.50</div>
<div class="c" style="left:1608px;top:551px;width:56px;height:20px;border-right:1px solid #d9d9d9;border-bottom:1px solid #d9d9d9;justify-content:flex-start;text-align:left;padding-left:2px;padding-top:2px">3881.93</div>
<div class="c" style="left:1664px;top:551px;width:56px;height:20px;border-right:1px solid #d9d9d9;border-bottom:1px solid #d9d9d9;justify-content:flex-start;text-align:left;padding-left:2px;padding-top:2px">2611.44</div>
<div class="c" style="left:1720px;top:551px;width:56px;height:20px;border-right:1px solid #d9d9d9;border-bottom:1px solid #d9d9d9;justify-content:flex-start;text-align:left;padding-left:2px;padding-top:2px">3299.98</div>
<div class="c" style="left:40px;top:571px;width:173px;height:20px;border-right:1px solid #d9d9d9;border-bottom:1px solid #d9d9d9;justify-content:flex-start;text-align:left;padding-left:2px;padding-top:2px">2025-01-13 10:39:00</div>
<div class="c" style="left:213px;top:571px;width:63px;height:20px;border-right:1px solid #d9d9d9;border-bottom:1px solid #d9d9d9;justify-content:flex-start;text-align:left;padding-left:2px;padding-top:2px"><span class="zh">中班</span></div>
<div class="c" style="left:276px;top:571px;width:48px;height:20px;border-right:1px solid #d9d9d9;border-bottom:1px solid #d9d9d9;justify-content:flex-start;text-align:left;padding-left:2px;padding-top:2px">290.17</div>
<div class="c" style="left:324px;top:571px;width:48px;height:20px;border-right:1px solid #d9d9d9;border-bottom:1px solid #d9d9d9;justify-content:flex-start;text-align:left;padding-left:2px;padding-top:2px">40.50</div>
<div class="c" style="left:372px;top:571px;width:48px;height:20px;border-right:1px solid #d9d9d9;border-bottom:1px solid #d9d9d9;justify-content:flex-start;text-align:left;padding-left:2px;padding-top:2px">433.00</div>
<div class="c" style="left:420px;top:571px;width:48px;height:20px;border-right:1px solid #d9d9d9;border-bottom:1px solid #d9d9d9;justify-content:flex-start;text-align:left;padding-left:2px;padding-top:2px">54.00</div>
<div class="c" style="left:468px;top:571px;width:48px;height:20px;border-right:1px solid #d9d9d9;border-bottom:1px solid #d9d9d9;justify-content:flex-start;text-align:left;padding-left:2px;padding-top:2px">44.00</div>
<div class="c" style="left:516px;top:571px;width:48px;height:20px;border-right:1px solid #d9d9d9;border-bottom:1px solid #d9d9d9;justify-content:flex-start;text-align:left;padding-left:2px;padding-top:2px">448.33</div>
<div class="c" style="left:564px;top:571px;width:48px;height:20px;border-right:1px solid #d9d9d9;border-bottom:1px solid #d9d9d9;justify-content:flex-start;text-align:left;padding-left:2px;padding-top:2px">497.17</div>
<div class="c" style="left:612px;top:571px;width:48px;height:20px;border-right:1px solid #d9d9d9;border-bottom:1px solid #d9d9d9;justify-content:flex-start;text-align:left;padding-left:2px;padding-top:2px">311.20</div>
<div class="c" style="left:660px;top:571px;width:48px;height:20px;border-right:1px solid #d9d9d9;border-bottom:1px solid #d9d9d9;justify-content:flex-start;text-align:left;padding-left:2px;padding-top:2px">1121.50</div>
<div class="c" style="left:708px;top:571px;width:48px;height:20px;border-right:1px solid #d9d9d9;border-bottom:1px solid #d9d9d9;justify-content:flex-start;text-align:left;padding-left:2px;padding-top:2px">180.25</div>
<div class="c" style="left:756px;top:571px;width:48px;height:20px;border-right:1px solid #d9d9d9;border-bottom:1px solid #d9d9d9;justify-content:flex-start;text-align:left;padding-left:2px;padding-top:2px">0.00</div>
<div class="c" style="left:804px;top:571px;width:48px;height:20px;border-right:1px solid #d9d9d9;border-bottom:1px solid #d9d9d9;justify-content:flex-start;text-align:left;padding-left:2px;padding-top:2px">0.00</div>
<div class="c" style="left:852px;top:571px;width:42px;height:20px;border-right:1px solid #d9d9d9;border-bottom:1px solid #d9d9d9;justify-content:flex-start;text-align:left;padding-left:2px;padding-top:2px">0</div>
<div class="c" style="left:894px;top:571px;width:42px;height:20px;border-right:1px solid #d9d9d9;border-bottom:1px solid #d9d9d9;justify-content:flex-start;text-align:left;padding-left:2px;padding-top:2px">0.00</div>
<div class="c" style="left:936px;top:571px;width:56px;height:20px;border-right:1px solid #d9d9d9;border-bottom:1px solid #d9d9d9;justify-content:flex-start;text-align:left;padding-left:2px;padding-top:2px">2640.00</div>
<div class="c" style="left:992px;top:571px;width:56px;height:20px;border-right:1px solid #d9d9d9;border-bottom:1px solid #d9d9d9;justify-content:flex-start;text-align:left;padding-left:2px;padding-top:2px">6362.00</div>
<div class="c" style="left:1048px;top:571px;width:56px;height:20px;border-right:1px solid #d9d9d9;border-bottom:1px solid #d9d9d9;justify-content:flex-start;text-align:left;padding-left:2px;padding-top:2px">5976.00</div>
<div class="c" style="left:1104px;top:571px;width:56px;height:20px;border-right:1px solid #d9d9d9;border-bottom:1px solid #d9d9d9;justify-content:flex-start;text-align:left;padding-left:2px;padding-top:2px">118.00</div>
<div class="c" style="left:1160px;top:571px;width:56px;height:20px;border-right:1px solid #d9d9d9;border-bottom:1px solid #d9d9d9;justify-content:flex-start;text-align:left;padding-left:2px;padding-top:2px">849.00</div>
<div class="c" style="left:1216px;top:571px;width:56px;height:20px;border-right:1px solid #d9d9d9;border-bottom:1px solid #d9d9d9;justify-content:flex-start;text-align:left;padding-left:2px;padding-top:2px">86.00</div>
<div class="c" style="left:1272px;top:571px;width:56px;height:20px;border-right:1px solid #d9d9d9;border-bottom:1px solid #d9d9d9;justify-content:flex-start;text-align:left;padding-left:2px;padding-top:2px">796.00</div>
<div class="c" style="left:1328px;top:571px;width:56px;height:20px;border-right:1px solid #d9d9d9;border-bottom:1px solid #d9d9d9;justify-content:flex-start;text-align:left;padding-left:2px;padding-top:2px">88.50</div>
<div class="c" style="left:1384px;top:571px;width:56px;height:20px;border-right:1px solid #d9d9d9;border-bottom:1px solid #d9d9d9;justify-content:flex-start;text-align:left;padding-left:2px;padding-top:2px">484.00</div>
<div class="c" style="left:1440px;top:571px;width:56px;height:20px;border-right:1px solid #d9d9d9;border-bottom:1px solid #d9d9d9;justify-content:flex-start;text-align:left;padding-left:2px;padding-top:2px">386.70</div>
<div class="c" style="left:1496px;top:571px;width:56px;height:20px;border-right:1px solid #d9d9d9;border-bottom:1px solid #d9d9d9;justify-content:flex-start;text-align:left;padding-left:2px;padding-top:2px">362.75</div>
<div class="c" style="left:1552px;top:571px;width:56px;height:20px;border-right:1px solid #d9d9d9;border-bottom:1px solid #d9d9d9;justify-content:flex-start;text-align:left;padding-left:2px;padding-top:2px">298.50</div>
<div class="c" style="left:1608px;top:571px;width:56px;height:20px;border-right:1px solid #d9d9d9;border-bottom:1px solid #d9d9d9;justify-content:flex-start;text-align:left;padding-left:2px;padding-top:2px">7962.64</div>
<div class="c" style="left:1664px;top:571px;width:56px;height:20px;border-right:1px solid #d9d9d9;border-bottom:1px solid #d9d9d9;justify-content:flex-start;text-align:left;padding-left:2px;padding-top:2px">1254.01</div>
<div class="c" style="left:1720px;top:571px;width:56px;height:20px;border-right:1px solid #d9d9d9;border-bottom:1px solid #d9d9d9;justify-content:flex-start;text-align:left;padding-left:2px;padding-top:2px">2497.01</div>
<div class="c" style="left:40px;top:591px;width:173px;height:20px;border-right:1px solid #d9d9d9;border-bottom:1px solid #d9d9d9;justify-content:flex-start;text-align:left;padding-left:2px;padding-top:2px">2025-01-13 10:40:00</div>
<div class="c" style="left:213px;top:591px;width:63px;height:20px;border-right:1px solid #d9d9d9;border-bottom:1px solid #d9d9d9;justify-content:flex-start;text-align:left;padding-left:2px;padding-top:2px"><span class="zh">中班</span></div>
<div class="c" style="left:276px;top:591px;width:48px;height:20px;border-right:1px solid #d9d9d9;border-bottom:1px solid #d9d9d9;justify-content:flex-start;text-align:left;padding-left:2px;padding-top:2px">249.25</div>
<div class="c" style="left:324px;top:591px;width:48px;height:20px;border-right:1px solid #d9d9d9;border-bottom:1px solid #d9d9d9;justify-content:flex-start;text-align:left;padding-left:2px;padding-top:2px">58.33</div>
<div class="c" style="left:372px;top:591px;width:48px;height:20px;border-right:1px solid #d9d9d9;border-bottom:1px solid #d9d9d9;justify-content:flex-start;text-align:left;padding-left:2px;padding-top:2px">402.00</div>
<div class="c" style="left:420px;top:591px;width:48px;height:20px;border-right:1px solid #d9d9d9;border-bottom:1px solid #d9d9d9;justify-content:flex-start;text-align:left;padding-left:2px;padding-top:2px">51.00</div>
<div class="c" style="left:468px;top:591px;width:48px;height:20px;border-right:1px solid #d9d9d9;border-bottom:1px solid #d9d9d9;justify-content:flex-start;text-align:left;padding-left:2px;padding-top:2px">27.00</div>
<div class="c" style="left:516px;top:591px;width:48px;height:20px;border-right:1px solid #d9d9d9;border-bottom:1px solid #d9d9d9;justify-content:flex-start;text-align:left;padding-left:2px;padding-top:2px">97.50</div>
<div class="c" style="left:564px;top:591px;width:48px;height:20px;border-right:1px solid #d9d9d9;border-bottom:1px solid #d9d9d9;justify-content:flex-start;text-align:left;padding-left:2px;padding-top:2px">16.33</div>
<div class="c" style="left:612px;top:591px;width:48px;height:20px;border-right:1px solid #d9d9d9;border-bottom:1px solid #d9d9d9;justify-content:flex-start;text-align:left;padding-left:2px;padding-top:2px">203.00</div>
<div class="c" style="left:660px;top:591px;width:48px;height:20px;border-right:1px solid #d9d9d9;border-bottom:1px solid #d9d9d9;justify-content:flex-start;text-align:left;padding-left:2px;padding-top:2px">469.00</div>
<div class="c" style="left:708px;top:591px;width:48px;height:20px;border-right:1px solid #d9d9d9;border-bottom:1px solid #d9d9d9;justify-content:flex-start;text-align:left;padding-left:2px;padding-top:2px">247.25</div>
<div class="c" style="left:756px;top:591px;width:48px;height:20px;border-right:1px solid #d9d9d9;border-bottom:1px solid #d9d9d9;justify-content:flex-start;text-align:left;padding-left:2px;padding-top:2px">0.00</div>
<div class="c" style="left:804px;top:591px;width:48px;height:20px;border-right:1px solid #d9d9d9;border-bottom:1px solid #d9d9d9;justify-content:flex-start;text-align:left;padding-left:2px;padding-top:2px">0.00</div>
<div class="c" style="left:852px;top:591px;width:42px;height:20px;border-right:1px solid #d9d9d9;border-bottom:1px solid #d9d9d9;justify-content:flex-start;text-align:left;padding-left:2px;padding-top:2px">0</div>
<div class="c" style="left:894px;top:591px;width:42px;height:20px;border-right:1px solid #d9d9d9;border-bottom:1px solid #d9d9d9;justify-content:flex-start;text-align:left;padding-left:2px;padding-top:2px">0.00</div>
<div class="c" style="left:936px;top:591px;width:56px;height:20px;border-right:1px solid #d9d9d9;border-bottom:1px solid #d9d9d9;justify-content:flex-start;text-align:left;padding-left:2px;padding-top:2px">3369.00</div>
<div class="c" style="left:992px;top:591px;width:56px;height:20px;border-right:1px solid #d9d9d9;border-bottom:1px solid #d9d9d9;justify-content:flex-start;text-align:left;padding-left:2px;padding-top:2px">5633.00</div>
<div class="c" style="left:1048px;top:591px;width:56px;height:20px;border-right:1px solid #d9d9d9;border-bottom:1px solid #d9d9d9;justify-content:flex-start;text-align:left;padding-left:2px;padding-top:2px">4201.00</div>
<div class="c" style="left:1104px;top:591px;width:56px;height:20px;border-right:1px solid #d9d9d9;border-bottom:1px solid #d9d9d9;justify-content:flex-start;text-align:left;padding-left:2px;padding-top:2px">28.00</div>
<div class="c" style="left:1160px;top:591px;width:56px;height:20px;border-right:1px solid #d9d9d9;border-bottom:1px solid #d9d9d9;justify-content:flex-start;text-align:left;padding-left:2px;padding-top:2px">864.00</div>
<div class="c" style="left:1216px;top:591px;width:56px;height:20px;border-right:1px solid #d9d9d9;border-bottom:1px solid #d9d9d9;justify-content:flex-start;text-align:left;padding-left:2px;padding-top:2px">76.00</div>
<div class="c" style="left:1272px;top:591px;width:56px;height:20px;border-right:1px solid #d9d9d9;border-bottom:1px solid #d9d9d9;justify-content:flex-start;text-align:left;padding-left:2px;padding-top:2px">746.00</div>
<div class="c" style="left:1328px;top:591px;width:56px;height:20px;border-right:1px solid #d9d9d9;border-bottom:1px solid #d9d9d9;justify-content:flex-start;text-align:left;padding-left:2px;padding-top:2px">173.60</div>
<div class="c" style="left:1384px;top:591px;width:56px;height:20px;border-right:1px solid #d9d9d9;border-bottom:1px solid #d9d9d9;justify-content:flex-start;text-align:left;padding-left:2px;padding-top:2px">667.00</div>
<div class="c" style="left:1440px;top:591px;width:56px;height:20px;border-right:1px solid #d9d9d9;border-bottom:1px solid #d9d9d9;justify-content:flex-start;text-align:left;padding-left:2px;padding-top:2px">437.80</div>
<div class="c" style="left:1496px;top:591px;width:56px;height:20px;border-right:1px solid #d9d9d9;border-bottom:1px solid #d9d9d9;justify-content:flex-start;text-align:left;padding-left:2px;padding-top:2px">401.75</div>
<div class="c" style="left:1552px;top:591px;width:56px;height:20px;border-right:1px solid #d9d9d9;border-bottom:1px solid #d9d9d9;justify-content:flex-start;text-align:left;padding-left:2px;padding-top:2px">211.00</div>
<div class="c" style="left:1608px;top:591px;width:56px;height:20px;border-right:1px solid #d9d9d9;border-bottom:1px solid #d9d9d9;justify-content:flex-start;text-align:left;padding-left:2px;padding-top:2px">3358.42</div>
<div class="c" style="left:1664px;top:591px;width:56px;height:20px;border-right:1px solid #d9d9d9;border-bottom:1px solid #d9d9d9;justify-content:flex-start;text-align:left;padding-left:2px;padding-top:2px">3463.65</div>
<div class="c" style="left:1720px;top:591px;width:56px;height:20px;border-right:1px solid #d9d9d9;border-bottom:1px solid #d9d9d9;justify-content:flex-start;text-align:left;padding-left:2px;padding-top:2px">1126.58</div>
<div class="c" style="left:40px;top:611px;width:173px;height:20px;border-right:1px solid #d9d9d9;border-bottom:1px solid #d9d9d9;justify-content:flex-start;text-align:left;padding-left:2px;padding-top:2px">2025-01-13 10:41:00</div>
<div class="c" style="left:213px;top:611px;width:63px;height:20px;border-right:1px solid #d9d9d9;border-bottom:1px solid #d9d9d9;justify-content:flex-start;text-align:left;padding-left:2px;padding-top:2px"><span class="zh">中班</span></div>
<div class="c" style="left:276px;top:611px;width:48px;height:20px;border-right:1px solid #d9d9d9;border-bottom:1px solid #d9d9d9;justify-content:flex-start;text-align:left;padding-left:2px;padding-top:2px">147.17</div>
<div class="c" style="left:324px;top:611px;width:48px;height:20px;border-right:1px solid #d9d9d9;border-bottom:1px solid #d9d9d9;justify-content:flex-start;text-align:left;padding-left:2px;padding-top:2px">522.17</div>
<div class="c" style="left:372px;top:611px;width:48px;height:20px;border-right:1px solid #d9d9d9;border-bottom:1px solid #d9d9d9;justify-content:flex-start;text-align:left;padding-left:2px;padding-top:2px">477.00</div>
<div class="c" style="left:420px;top:611px;width:48px;height:20px;border-right:1px solid #d9d9d9;border-bottom:1px solid #d9d9d9;justify-content:flex-start;text-align:left;padding-left:2px;padding-top:2px">71.00</div>
<div class="c" style="left:468px;top:611px;width:48px;height:20px;border-right:1px solid #d9d9d9;border-bottom:1px solid #d9d9d9;justify-content:flex-start;text-align:left;padding-left:2px;padding-top:2px">22.00</div>
<div class="c" style="left:516px;top:611px;width:48px;height:20px;border-right:1px solid #d9d9d9;border-bottom:1px solid #d9d9d9;justify-content:flex-start;text-align:left;padding-left:2px;padding-top:2px">434.20</div>
<div class="c" style="left:564px;top:611px;width:48px;height:20px;border-right:1px solid #d9d9d9;border-bottom:1px solid #d9d9d9;justify-content:flex-start;text-align:left;padding-left:2px;padding-top:2px">177.17</div>
<div class="c" style="left:612px;top:611px;width:48px;height:20px;border-right:1px solid #d9d9d9;border-bottom:1px solid #d9d9d9;justify-content:flex-start;text-align:left;padding-left:2px;padding-top:2px">890.50</div>
<div class="c" style="left:660px;top:611px;width:48px;height:20px;border-right:1px solid #d9d9d9;border-bottom:1px solid #d9d9d9;justify-content:flex-start;text-align:left;padding-left:2px;padding-top:2px">1182.33</div>
<div class="c" style="left:708px;top:611px;width:48px;height:20px;border-right:1px solid #d9d9d9;border-bottom:1px solid #d9d9d9;justify-content:flex-start;text-align:left;padding-left:2px;padding-top:2px">59.33</div>
<div class="c" style="left:756px;top:611px;width:48px;height:20px;border-right:1px solid #d9d9d9;border-bottom:1px solid #d9d9d9;justify-content:flex-start;text-align:left;padding-left:2px;padding-top:2px">0.00</div>
<div class="c" style="left:804px;top:611px;width:48px;height:20px;border-right:1px solid #d9d9d9;border-bottom:1px solid #d9d9d9;justify-content:flex-start;text-align:left;padding-left:2px;padding-top:2px">0.00</div>
<div class="c" style="left:852px;top:611px;width:42px;height:20px;border-right:1px solid #d9d9d9;border-bottom:1px solid #d9d9d9;justify-content:flex-start;text-align:left;padding-left:2px;padding-top:2px">0</div>
<div class="c" style="left:894px;top:611px;width:42px;height:20px;border-right:1px solid #d9d9d9;border-bottom:1px solid #d9d9d9;justify-content:flex-start;text-align:left;padding-left:2px;padding-top:2px">0.00</div>
<div class="c" style="left:936px;top:611px;width:56px;height:20px;border-right:1px solid #d9d9d9;border-bottom:1px solid #d9d9d9;justify-content:flex-start;text-align:left;padding-left:2px;padding-top:2px">4096.00</div>
<div class="c" style="left:992px;top:611px;width:56px;height:20px;border-right:1px solid #d9d9d9;border-bottom:1px solid #d9d9d9;justify-content:flex-start;text-align:left;padding-left:2px;padding-top:2px">4906.00</div>
<div class="c" style="left:1048px;top:611px;width:56px;height:20px;border-right:1px solid #d9d9d9;border-bottom:1px solid #d9d9d9;justify-content:flex-start;text-align:left;padding-left:2px;padding-top:2px">2376.00</div>
<div class="c" style="left:1104px;top:611px;width:56px;height:20px;border-right:1px solid #d9d9d9;border-bottom:1px solid #d9d9d9;justify-content:flex-start;text-align:left;padding-left:2px;padding-top:2px">48.00</div>
<div class="c" style="left:1160px;top:611px;width:56px;height:20px;border-right:1px solid #d9d9d9;border-bottom:1px solid #d9d9d9;justify-content:flex-start;text-align:left;padding-left:2px;padding-top:2px">878.00</div>
<div class="c" style="left:1216px;top:611px;width:56px;height:20px;border-right:1px solid #d9d9d9;border-bottom:1px solid #d9d9d9;justify-content:flex-start;text-align:left;padding-left:2px;padding-top:2px">64.00</div>
<div class="c" style="left:1272px;top:611px;width:56px;height:20px;border-right:1px solid #d9d9d9;border-bottom:1px solid #d9d9d9;justify-content:flex-start;text-align:left;padding-left:2px;padding-top:2px">698.00</div>
<div class="c" style="left:1328px;top:611px;width:56px;height:20px;border-right:1px solid #d9d9d9;border-bottom:1px solid #d9d9d9;justify-content:flex-start;text-align:left;padding-left:2px;padding-top:2px">256.40</div>
<div class="c" style="left:1384px;top:611px;width:56px;height:20px;border-right:1px solid #d9d9d9;border-bottom:1px solid #d9d9d9;justify-content:flex-start;text-align:left;padding-left:2px;padding-top:2px">848.00</div>
<div class="c" style="left:1440px;top:611px;width:56px;height:20px;border-right:1px solid #d9d9d9;border-bottom:1px solid #d9d9d9;justify-content:flex-start;text-align:left;padding-left:2px;padding-top:2px">488.90</div>
<div class="c" style="left:1496px;top:611px;width:56px;height:20px;border-right:1px solid #d9d9d9;border-bottom:1px solid #d9d9d9;justify-content:flex-start;text-align:left;padding-left:2px;padding-top:2px">440.75</div>
<div class="c" style="left:1552px;top:611px;width:56px;height:20px;border-right:1px solid #d9d9d9;border-bottom:1px solid #d9d9d9;justify-content:flex-start;text-align:left;padding-left:2px;padding-top:2px">118.50</div>
<div class="c" style="left:1608px;top:611px;width:56px;height:20px;border-right:1px solid #d9d9d9;border-bottom:1px solid #d9d9d9;justify-content:flex-start;text-align:left;padding-left:2px;padding-top:2px">5945.88</div>
<div class="c" style="left:1664px;top:611px;width:56px;height:20px;border-right:1px solid #d9d9d9;border-bottom:1px solid #d9d9d9;justify-content:flex-start;text-align:left;padding-left:2px;padding-top:2px">3250.80</div>
<div class="c" style="left:1720px;top:611px;width:56px;height:20px;border-right:1px solid #d9d9d9;border-bottom:1px solid #d9d9d9;justify-content:flex-start;text-align:left;padding-left:2px;padding-top:2px">4445.87</div>
<div class="c" style="left:40px;top:631px;width:173px;height:20px;border-right:1px solid #d9d9d9;border-bottom:1px solid #d9d9d9;justify-content:flex-start;text-align:left;padding-left:2px;padding-top:2px">2025-01-13 10:42:00</div>
<div class="c" style="left:213px;top:631px;width:63px;height:20px;border-right:1px solid #d9d9d9;border-bottom:1px solid #d9d9d9;justify-content:flex-start;text-align:left;padding-left:2px;padding-top:2px"><span class="zh">中班</span></div>
<div class="c" style="left:276px;top:631px;width:48px;height:20px;border-right:1px solid #d9d9d9;border-bottom:1px solid #d9d9d9;justify-content:flex-start;text-align:left;padding-left:2px;padding-top:2px">193.33</div>
<div class="c" style="left:324px;top:631px;width:48px;height:20px;border-right:1px solid #d9d9d9;border-bottom:1px solid #d9d9d9;justify-content:flex-start;text-align:left;padding-left:2px;padding-top:2px">239.25</div>
<div class="c" style="left:372px;top:631px;width:48px;height:20px;border-right:1px solid #d9d9d9;border-bottom:1px solid #d9d9d9;justify-content:flex-start;text-align:left;padding-left:2px;padding-top:2px">318.00</div>
<div class="c" style="left:420px;top:631px;width:48px;height:20px;border-right:1px solid #d9d9d9;border-bottom:1px solid #d9d9d9;justify-content:flex-start;text-align:left;padding-left:2px;padding-top:2px">33.00</div>
<div class="c" style="left:468px;top:631px;width:48px;height:20px;border-right:1px solid #d9d9d9;border-bottom:1px solid #d9d9d9;justify-content:flex-start;text-align:left;padding-left:2px;padding-top:2px">47.00</div>
<div class="c" style="left:516px;top:631px;width:48px;height:20px;border-right:1px solid #d9d9d9;border-bottom:1px solid #d9d9d9;justify-content:flex-start;text-align:left;padding-left:2px;padding-top:2px">472.50</div>
<div class="c" style="left:564px;top:631px;width:48px;height:20px;border-right:1px solid #d9d9d9;border-bottom:1px solid #d9d9d9;justify-content:flex-start;text-align:left;padding-left:2px;padding-top:2px">574.50</div>
<div class="c" style="left:612px;top:631px;width:48px;height:20px;border-right:1px solid #d9d9d9;border-bottom:1px solid #d9d9d9;justify-content:flex-start;text-align:left;padding-left:2px;padding-top:2px">876.14</div>
<div class="c" style="left:660px;top:631px;width:48px;height:20px;border-right:1px solid #d9d9d9;border-bottom:1px solid #d9d9d9;justify-content:flex-start;text-align:left;padding-left:2px;padding-top:2px">98.25</div>
<div class="c" style="left:708px;top:631px;width:48px;height:20px;border-right:1px solid #d9d9d9;border-bottom:1px solid #d9d9d9;justify-content:flex-start;text-align:left;padding-left:2px;padding-top:2px">562.00</div>
<div class="c" style="left:756px;top:631px;width:48px;height:20px;border-right:1px solid #d9d9d9;border-bottom:1px solid #d9d9d9;justify-content:flex-start;text-align:left;padding-left:2px;padding-top:2px">0.00</div>
<div class="c" style="left:804px;top:631px;width:48px;height:20px;border-right:1px solid #d9d9d9;border-bottom:1px solid #d9d9d9;justify-content:flex-start;text-align:left;padding-left:2px;padding-top:2px">0.00</div>
<div class="c" style="left:852px;top:631px;width:42px;height:20px;border-right:1px solid #d9d9d9;border-bottom:1px solid #d9d9d9;justify-content:flex-start;text-align:left;padding-left:2px;padding-top:2px">0</div>
<div class="c" style="left:894px;top:631px;width:42px;height:20px;border-right:1px solid #d9d9d9;border-bottom:1px solid #d9d9d9;justify-content:flex-start;text-align:left;padding-left:2px;padding-top:2px">0.00</div>
<div class="c" style="left:936px;top:631px;width:56px;height:20px;border-right:1px solid #d9d9d9;border-bottom:1px solid #d9d9d9;justify-content:flex-start;text-align:left;padding-left:2px;padding-top:2px">4837.00</div>
<div class="c" style="left:992px;top:631px;width:56px;height:20px;border-right:1px solid #d9d9d9;border-bottom:1px solid #d9d9d9;justify-content:flex-start;text-align:left;padding-left:2px;padding-top:2px">4165.00</div>
<div class="c" style="left:1048px;top:631px;width:56px;height:20px;border-right:1px solid #d9d9d9;border-bottom:1px solid #d9d9d9;justify-content:flex-start;text-align:left;padding-left:2px;padding-top:2px">901.00</div>
<div class="c" style="left:1104px;top:631px;width:56px;height:20px;border-right:1px solid #d9d9d9;border-bottom:1px solid #d9d9d9;justify-content:flex-start;text-align:left;padding-left:2px;padding-top:2px">70.00</div>
<div class="c" style="left:1160px;top:631px;width:56px;height:20px;border-right:1px solid #d9d9d9;border-bottom:1px solid #d9d9d9;justify-content:flex-start;text-align:left;padding-left:2px;padding-top:2px">893.00</div>
<div class="c" style="left:1216px;top:631px;width:56px;height:20px;border-right:1px solid #d9d9d9;border-bottom:1px solid #d9d9d9;justify-content:flex-start;text-align:left;padding-left:2px;padding-top:2px">56.00</div>
<div class="c" style="left:1272px;top:631px;width:56px;height:20px;border-right:1px solid #d9d9d9;border-bottom:1px solid #d9d9d9;justify-content:flex-start;text-align:left;padding-left:2px;padding-top:2px">648.00</div>
<div class="c" style="left:1328px;top:631px;width:56px;height:20px;border-right:1px solid #d9d9d9;border-bottom:1px solid #d9d9d9;justify-content:flex-start;text-align:left;padding-left:2px;padding-top:2px">341.50</div>
<div class="c" style="left:1384px;top:631px;width:56px;height:20px;border-right:1px solid #d9d9d9;border-bottom:1px solid #d9d9d9;justify-content:flex-start;text-align:left;padding-left:2px;padding-top:2px">23.00</div>
<div class="c" style="left:1440px;top:631px;width:56px;height:20px;border-right:1px solid #d9d9d9;border-bottom:1px solid #d9d9d9;justify-content:flex-start;text-align:left;padding-left:2px;padding-top:2px">540.70</div>
<div class="c" style="left:1496px;top:631px;width:56px;height:20px;border-right:1px solid #d9d9d9;border-bottom:1px solid #d9d9d9;justify-content:flex-start;text-align:left;padding-left:2px;padding-top:2px">480.50</div>
<div class="c" style="left:1552px;top:631px;width:56px;height:20px;border-right:1px solid #d9d9d9;border-bottom:1px solid #d9d9d9;justify-content:flex-start;text-align:left;padding-left:2px;padding-top:2px">46.00</div>
<div class="c" style="left:1608px;top:631px;width:56px;height:20px;border-right:1px solid #d9d9d9;border-bottom:1px solid #d9d9d9;justify-content:flex-start;text-align:left;padding-left:2px;padding-top:2px">1018.34</div>
<div class="c" style="left:1664px;top:631px;width:56px;height:20px;border-right:1px solid #d9d9d9;border-bottom:1px solid #d9d9d9;justify-content:flex-start;text-align:left;padding-left:2px;padding-top:2px">3016.11</div>
<div class="c" style="left:1720px;top:631px;width:56px;height:20px;border-right:1px solid #d9d9d9;border-bottom:1px solid #d9d9d9;justify-content:flex-start;text-align:left;padding-left:2px;padding-top:2px">8517.58</div>
<div class="c" style="left:40px;top:651px;width:173px;height:20px;border-right:1px solid #d9d9d9;border-bottom:1px solid #d9d9d9;justify-content:flex-start;text-align:left;padding-left:2px;padding-top:2px">2025-01-13 10:43:00</div>
<div class="c" style="left:213px;top:651px;width:63px;height:20px;border-right:1px solid #d9d9d9;border-bottom:1px solid #d9d9d9;justify-content:flex-start;text-align:left;padding-left:2px;padding-top:2px"><span class="zh">中班</span></div>
<div class="c" style="left:276px;top:651px;width:48px;height:20px;border-right:1px solid #d9d9d9;border-bottom:1px solid #d9d9d9;justify-content:flex-start;text-align:left;padding-left:2px;padding-top:2px">282.13</div>
<div class="c" style="left:324px;top:651px;width:48px;height:20px;border-right:1px solid #d9d9d9;border-bottom:1px solid #d9d9d9;justify-content:flex-start;text-align:left;padding-left:2px;padding-top:2px">401.20</div>
<div class="c" style="left:372px;top:651px;width:48px;height:20px;border-right:1px solid #d9d9d9;border-bottom:1px solid #d9d9d9;justify-content:flex-start;text-align:left;padding-left:2px;padding-top:2px">473.00</div>
<div class="c" style="left:420px;top:651px;width:48px;height:20px;border-right:1px solid #d9d9d9;border-bottom:1px solid #d9d9d9;justify-content:flex-start;text-align:left;padding-left:2px;padding-top:2px">38.00</div>
<div class="c" style="left:468px;top:651px;width:48px;height:20px;border-right:1px solid #d9d9d9;border-bottom:1px solid #d9d9d9;justify-content:flex-start;text-align:left;padding-left:2px;padding-top:2px">41.00</div>
<div class="c" style="left:516px;top:651px;width:48px;height:20px;border-right:1px solid #d9d9d9;border-bottom:1px solid #d9d9d9;justify-content:flex-start;text-align:left;padding-left:2px;padding-top:2px">126.33</div>
<div class="c" style="left:564px;top:651px;width:48px;height:20px;border-right:1px solid #d9d9d9;border-bottom:1px solid #d9d9d9;justify-content:flex-start;text-align:left;padding-left:2px;padding-top:2px">349.25</div>
<div class="c" style="left:612px;top:651px;width:48px;height:20px;border-right:1px solid #d9d9d9;border-bottom:1px solid #d9d9d9;justify-content:flex-start;text-align:left;padding-left:2px;padding-top:2px">797.13</div>
<div class="c" style="left:660px;top:651px;width:48px;height:20px;border-right:1px solid #d9d9d9;border-bottom:1px solid #d9d9d9;justify-content:flex-start;text-align:left;padding-left:2px;padding-top:2px">256.17</div>
<div class="c" style="left:708px;top:651px;width:48px;height:20px;border-right:1px solid #d9d9d9;border-bottom:1px solid #d9d9d9;justify-content:flex-start;text-align:left;padding-left:2px;padding-top:2px">649.00</div>
<div class="c" style="left:756px;top:651px;width:48px;height:20px;border-right:1px solid #d9d9d9;border-bottom:1px solid #d9d9d9;justify-content:flex-start;text-align:left;padding-left:2px;padding-top:2px">0.00</div>
<div class="c" style="left:804px;top:651px;width:48px;height:20px;border-right:1px solid #d9d9d9;border-bottom:1px solid #d9d9d9;justify-content:flex-start;text-align:left;padding-left:2px;padding-top:2px">0.00</div>
<div class="c" style="left:852px;top:651px;width:42px;height:20px;border-right:1px solid #d9d9d9;border-bottom:1px solid #d9d9d9;justify-content:flex-start;text-align:left;padding-left:2px;padding-top:2px">0</div>
<div class="c" style="left:894px;top:651px;width:42px;height:20px;border-right:1px solid #d9d9d9;border-bottom:1px solid #d9d9d9;justify-content:flex-start;text-align:left;padding-left:2px;padding-top:2px">0.00</div>
<div class="c" style="left:936px;top:651px;width:56px;height:20px;border-right:1px solid #d9d9d9;border-bottom:1px solid #d9d9d9;justify-content:flex-start;text-align:left;padding-left:2px;padding-top:2px">5569.00</div>
<div class="c" style="left:992px;top:651px;width:56px;height:20px;border-right:1px solid #d9d9d9;border-bottom:1px solid #d9d9d9;justify-content:flex-start;text-align:left;padding-left:2px;padding-top:2px">3433.00</div>
<div class="c" style="left:1048px;top:651px;width:56px;height:20px;border-right:1px solid #d9d9d9;border-bottom:1px solid #d9d9d9;justify-content:flex-start;text-align:left;padding-left:2px;padding-top:2px">9201.00</div>
<div class="c" style="left:1104px;top:651px;width:56px;height:20px;border-right:1px solid #d9d9d9;border-bottom:1px solid #d9d9d9;justify-content:flex-start;text-align:left;padding-left:2px;padding-top:2px">90.00</div>
<div class="c" style="left:1160px;top:651px;width:56px;height:20px;border-right:1px solid #d9d9d9;border-bottom:1px solid #d9d9d9;justify-content:flex-start;text-align:left;padding-left:2px;padding-top:2px">908.00</div>
<div class="c" style="left:1216px;top:651px;width:56px;height:20px;border-right:1px solid #d9d9d9;border-bottom:1px solid #d9d9d9;justify-content:flex-start;text-align:left;padding-left:2px;padding-top:2px">46.00</div>
<div class="c" style="left:1272px;top:651px;width:56px;height:20px;border-right:1px solid #d9d9d9;border-bottom:1px solid #d9d9d9;justify-content:flex-start;text-align:left;padding-left:2px;padding-top:2px">600.00</div>
<div class="c" style="left:1328px;top:651px;width:56px;height:20px;border-right:1px solid #d9d9d9;border-bottom:1px solid #d9d9d9;justify-content:flex-start;text-align:left;padding-left:2px;padding-top:2px">426.60</div>
<div class="c" style="left:1384px;top:651px;width:56px;height:20px;border-right:1px solid #d9d9d9;border-bottom:1px solid #d9d9d9;justify-content:flex-start;text-align:left;padding-left:2px;padding-top:2px">206.00</div>
<div class="c" style="left:1440px;top:651px;width:56px;height:20px;border-right:1px solid #d9d9d9;border-bottom:1px solid #d9d9d9;justify-content:flex-start;text-align:left;padding-left:2px;padding-top:2px">591.80</div>
<div class="c" style="left:1496px;top:651px;width:56px;height:20px;border-right:1px solid #d9d9d9;border-bottom:1px solid #d9d9d9;justify-content:flex-start;text-align:left;padding-left:2px;padding-top:2px">519.50</div>
<div class="c" style="left:1552px;top:651px;width:56px;height:20px;border-right:1px solid #d9d9d9;border-bottom:1px solid #d9d9d9;justify-content:flex-start;text-align:left;padding-left:2px;padding-top:2px">461.00</div>
<div class="c" style="left:1608px;top:651px;width:56px;height:20px;border-right:1px solid #d9d9d9;border-bottom:1px solid #d9d9d9;justify-content:flex-start;text-align:left;padding-left:2px;padding-top:2px">2295.32</div>
<div class="c" style="left:1664px;top:651px;width:56px;height:20px;border-right:1px solid #d9d9d9;border-bottom:1px solid #d9d9d9;justify-content:flex-start;text-align:left;padding-left:2px;padding-top:2px">8067.16</div>
<div class="c" style="left:1720px;top:651px;width:56px;height:20px;border-right:1px solid #d9d9d9;border-bottom:1px solid #d9d9d9;justify-content:flex-start;text-align:left;padding-left:2px;padding-top:2px">4081.85</div>
<div class="c" style="left:40px;top:671px;width:173px;height:20px;border-right:1px solid #d9d9d9;border-bottom:1px solid #d9d9d9;justify-content:flex-start;text-align:left;padding-left:2px;padding-top:2px">2025-01-13 10:44:00</div>
<div class="c" style="left:213px;top:671px;width:63px;height:20px;border-right:1px solid #d9d9d9;border-bottom:1px solid #d9d9d9;justify-content:flex-start;text-align:left;padding-left:2px;padding-top:2px"><span class="zh">中班</span></div>
<div class="c" style="left:276px;top:671px;width:48px;height:20px;border-right:1px solid #d9d9d9;border-bottom:1px solid #d9d9d9;justify-content:flex-start;text-align:left;padding-left:2px;padding-top:2px">274.33</div>
<div class="c" style="left:324px;top:671px;width:48px;height:20px;border-right:1px solid #d9d9d9;border-bottom:1px solid #d9d9d9;justify-content:flex-start;text-align:left;padding-left:2px;padding-top:2px">367.14</div>
<div class="c" style="left:372px;top:671px;width:48px;height:20px;border-right:1px solid #d9d9d9;border-bottom:1px solid #d9d9d9;justify-content:flex-start;text-align:left;padding-left:2px;padding-top:2px">296.00</div>
<div class="c" style="left:420px;top:671px;width:48px;height:20px;border-right:1px solid #d9d9d9;border-bottom:1px solid #d9d9d9;justify-content:flex-start;text-align:left;padding-left:2px;padding-top:2px">2.00</div>
<div class="c" style="left:468px;top:671px;width:48px;height:20px;border-right:1px solid #d9d9d9;border-bottom:1px solid #d9d9d9;justify-content:flex-start;text-align:left;padding-left:2px;padding-top:2px">32.00</div>
<div class="c" style="left:516px;top:671px;width:48px;height:20px;border-right:1px solid #d9d9d9;border-bottom:1px solid #d9d9d9;justify-content:flex-start;text-align:left;padding-left:2px;padding-top:2px">334.14</div>
<div class="c" style="left:564px;top:671px;width:48px;height:20px;border-right:1px solid #d9d9d9;border-bottom:1px solid #d9d9d9;justify-content:flex-start;text-align:left;padding-left:2px;padding-top:2px">58.20</div>
<div class="c" style="left:612px;top:671px;width:48px;height:20px;border-right:1px solid #d9d9d9;border-bottom:1px solid #d9d9d9;justify-content:flex-start;text-align:left;padding-left:2px;padding-top:2px">343.00</div>
<div class="c" style="left:660px;top:671px;width:48px;height:20px;border-right:1px solid #d9d9d9;border-bottom:1px solid #d9d9d9;justify-content:flex-start;text-align:left;padding-left:2px;padding-top:2px">234.33</div>
<div class="c" style="left:708px;top:671px;width:48px;height:20px;border-right:1px solid #d9d9d9;border-bottom:1px solid #d9d9d9;justify-content:flex-start;text-align:left;padding-left:2px;padding-top:2px">504.33</div>
<div class="c" style="left:756px;top:671px;width:48px;height:20px;border-right:1px solid #d9d9d9;border-bottom:1px solid #d9d9d9;justify-content:flex-start;text-align:left;padding-left:2px;padding-top:2px">0.00</div>
<div class="c" style="left:804px;top:671px;width:48px;height:20px;border-right:1px solid #d9d9d9;border-bottom:1px solid #d9d9d9;justify-content:flex-start;text-align:left;padding-left:2px;padding-top:2px">0.00</div>
<div class="c" style="left:852px;top:671px;width:42px;height:20px;border-right:1px solid #d9d9d9;border-bottom:1px solid #d9d9d9;justify-content:flex-start;text-align:left;padding-left:2px;padding-top:2px">0</div>
<div class="c" style="left:894px;top:671px;width:42px;height:20px;border-right:1px solid #d9d9d9;border-bottom:1px solid #d9d9d9;justify-content:flex-start;text-align:left;padding-left:2px;padding-top:2px">0.00</div>
<div class="c" style="left:936px;top:671px;width:56px;height:20px;border-right:1px solid #d9d9d9;border-bottom:1px solid #d9d9d9;justify-content:flex-start;text-align:left;padding-left:2px;padding-top:2px">6302.00</div>
<div class="c" style="left:992px;top:671px;width:56px;height:20px;border-right:1px solid #d9d9d9;border-bottom:1px solid #d9d9d9;justify-content:flex-start;text-align:left;padding-left:2px;padding-top:2px">2700.00</div>
<div class="c" style="left:1048px;top:671px;width:56px;height:20px;border-right:1px solid #d9d9d9;border-bottom:1px solid #d9d9d9;justify-content:flex-start;text-align:left;padding-left:2px;padding-top:2px">7526.00</div>
<div class="c" style="left:1104px;top:671px;width:56px;height:20px;border-right:1px solid #d9d9d9;border-bottom:1px solid #d9d9d9;justify-content:flex-start;text-align:left;padding-left:2px;padding-top:2px">112.00</div>
<div class="c" style="left:1160px;top:671px;width:56px;height:20px;border-right:1px solid #d9d9d9;border-bottom:1px solid #d9d9d9;justify-content:flex-start;text-align:left;padding-left:2px;padding-top:2px">923.00</div>
<div class="c" style="left:1216px;top:671px;width:56px;height:20px;border-right:1px solid #d9d9d9;border-bottom:1px solid #d9d9d9;justify-content:flex-start;text-align:left;padding-left:2px;padding-top:2px">34.00</div>
<div class="c" style="left:1272px;top:671px;width:56px;height:20px;border-right:1px solid #d9d9d9;border-bottom:1px solid #d9d9d9;justify-content:flex-start;text-align:left;padding-left:2px;padding-top:2px">550.00</div>
<div class="c" style="left:1328px;top:671px;width:56px;height:20px;border-right:1px solid #d9d9d9;border-bottom:1px solid #d9d9d9;justify-content:flex-start;text-align:left;padding-left:2px;padding-top:2px">511.70</div>
<div class="c" style="left:1384px;top:671px;width:56px;height:20px;border-right:1px solid #d9d9d9;border-bottom:1px solid #d9d9d9;justify-content:flex-start;text-align:left;padding-left:2px;padding-top:2px">389.00</div>
<div class="c" style="left:1440px;top:671px;width:56px;height:20px;border-right:1px solid #d9d9d9;border-bottom:1px solid #d9d9d9;justify-content:flex-start;text-align:left;padding-left:2px;padding-top:2px">643.60</div>
<div class="c" style="left:1496px;top:671px;width:56px;height:20px;border-right:1px solid #d9d9d9;border-bottom:1px solid #d9d9d9;justify-content:flex-start;text-align:left;padding-left:2px;padding-top:2px">558.50</div>
<div class="c" style="left:1552px;top:671px;width:56px;height:20px;border-right:1px solid #d9d9d9;border-bottom:1px solid #d9d9d9;justify-content:flex-start;text-align:left;padding-left:2px;padding-top:2px">376.00</div>
<div class="c" style="left:1608px;top:671px;width:56px;height:20px;border-right:1px solid #d9d9d9;border-bottom:1px solid #d9d9d9;justify-content:flex-start;text-align:left;padding-left:2px;padding-top:2px">9013.83</div>
<div class="c" style="left:1664px;top:671px;width:56px;height:20px;border-right:1px solid #d9d9d9;border-bottom:1px solid #d9d9d9;justify-content:flex-start;text-align:left;padding-left:2px;padding-top:2px">7088.54</div>
<div class="c" style="left:1720px;top:671px;width:56px;height:20px;border-right:1px solid #d9d9d9;border-bottom:1px solid #d9d9d9;justify-content:flex-start;text-align:left;padding-left:2px;padding-top:2px">7392.91</div>
<div class="c" style="left:40px;top:691px;width:173px;height:20px;border-right:1px solid #d9d9d9;border-bottom:1px solid #d9d9d9;justify-content:flex-start;text-align:left;padding-left:2px;padding-top:2px">2025-01-13 10:45:00</div>
<div class="c" style="left:213px;top:691px;width:63px;height:20px;border-right:1px solid #d9d9d9;border-bottom:1px solid #d9d9d9;justify-content:flex-start;text-align:left;padding-left:2px;padding-top:2px"><span class="zh">中班</span></div>
<div class="c" style="left:276px;top:691px;width:48px;height:20px;border-right:1px solid #d9d9d9;border-bottom:1px solid #d9d9d9;justify-content:flex-start;text-align:left;padding-left:2px;padding-top:2px">272.14</div>
<div class="c" style="left:324px;top:691px;width:48px;height:20px;border-right:1px solid #d9d9d9;border-bottom:1px solid #d9d9d9;justify-content:flex-start;text-align:left;padding-left:2px;padding-top:2px">255.50</div>
<div class="c" style="left:372px;top:691px;width:48px;height:20px;border-right:1px solid #d9d9d9;border-bottom:1px solid #d9d9d9;justify-content:flex-start;text-align:left;padding-left:2px;padding-top:2px">489.00</div>
<div class="c" style="left:420px;top:691px;width:48px;height:20px;border-right:1px solid #d9d9d9;border-bottom:1px solid #d9d9d9;justify-content:flex-start;text-align:left;padding-left:2px;padding-top:2px">55.00</div>
<div class="c" style="left:468px;top:691px;width:48px;height:20px;border-right:1px solid #d9d9d9;border-bottom:1px solid #d9d9d9;justify-content:flex-start;text-align:left;padding-left:2px;padding-top:2px">23.00</div>
<div class="c" style="left:516px;top:691px;width:48px;height:20px;border-right:1px solid #d9d9d9;border-bottom:1px solid #d9d9d9;justify-content:flex-start;text-align:left;padding-left:2px;padding-top:2px">515.20</div>
<div class="c" style="left:564px;top:691px;width:48px;height:20px;border-right:1px solid #d9d9d9;border-bottom:1px solid #d9d9d9;justify-content:flex-start;text-align:left;padding-left:2px;padding-top:2px">452.00</div>
<div class="c" style="left:612px;top:691px;width:48px;height:20px;border-right:1px solid #d9d9d9;border-bottom:1px solid #d9d9d9;justify-content:flex-start;text-align:left;padding-left:2px;padding-top:2px">622.25</div>
<div class="c" style="left:660px;top:691px;width:48px;height:20px;border-right:1px solid #d9d9d9;border-bottom:1px solid #d9d9d9;justify-content:flex-start;text-align:left;padding-left:2px;padding-top:2px">34.20</div>
<div class="c" style="left:708px;top:691px;width:48px;height:20px;border-right:1px solid #d9d9d9;border-bottom:1px solid #d9d9d9;justify-content:flex-start;text-align:left;padding-left:2px;padding-top:2px">207.25</div>
<div class="c" style="left:756px;top:691px;width:48px;height:20px;border-right:1px solid #d9d9d9;border-bottom:1px solid #d9d9d9;justify-content:flex-start;text-align:left;padding-left:2px;padding-top:2px">0.00</div>
<div class="c" style="left:804px;top:691px;width:48px;height:20px;border-right:1px solid #d9d9d9;border-bottom:1px solid #d9d9d9;justify-content:flex-start;text-align:left;padding-left:2px;padding-top:2px">0.00</div>
<div class="c" style="left:852px;top:691px;width:42px;height:20px;border-right:1px solid #d9d9d9;border-bottom:1px solid #d9d9d9;justify-content:flex-start;text-align:left;padding-left:2px;padding-top:2px">0</div>
<div class="c" style="left:894px;top:691px;width:42px;height:20px;border-right:1px solid #d9d9d9;border-bottom:1px solid #d9d9d9;justify-content:flex-start;text-align:left;padding-left:2px;padding-top:2px">0.00</div>
<div class="c" style="left:936px;top:691px;width:56px;height:20px;border-right:1px solid #d9d9d9;border-bottom:1px solid #d9d9d9;justify-content:flex-start;text-align:left;padding-left:2px;padding-top:2px">7045.00</div>
<div class="c" style="left:992px;top:691px;width:56px;height:20px;border-right:1px solid #d9d9d9;border-bottom:1px solid #d9d9d9;justify-content:flex-start;text-align:left;padding-left:2px;padding-top:2px">1957.00</div>
<div class="c" style="left:1048px;top:691px;width:56px;height:20px;border-right:1px solid #d9d9d9;border-bottom:1px solid #d9d9d9;justify-content:flex-start;text-align:left;padding-left:2px;padding-top:2px">6101.00</div>
<div class="c" style="left:1104px;top:691px;width:56px;height:20px;border-right:1px solid #d9d9d9;border-bottom:1px solid #d9d9d9;justify-content:flex-start;text-align:left;padding-left:2px;padding-top:2px">20.00</div>
<div class="c" style="left:1160px;top:691px;width:56px;height:20px;border-right:1px solid #d9d9d9;border-bottom:1px solid #d9d9d9;justify-content:flex-start;text-align:left;padding-left:2px;padding-top:2px">937.00</div>
<div class="c" style="left:1216px;top:691px;width:56px;height:20px;border-right:1px solid #d9d9d9;border-bottom:1px solid #d9d9d9;justify-content:flex-start;text-align:left;padding-left:2px;padding-top:2px">26.00</div>
<div class="c" style="left:1272px;top:691px;width:56px;height:20px;border-right:1px solid #d9d9d9;border-bottom:1px solid #d9d9d9;justify-content:flex-start;text-align:left;padding-left:2px;padding-top:2px">502.00</div>
<div class="c" style="left:1328px;top:691px;width:56px;height:20px;border-right:1px solid #d9d9d9;border-bottom:1px solid #d9d9d9;justify-content:flex-start;text-align:left;padding-left:2px;padding-top:2px">596.80</div>
<div class="c" style="left:1384px;top:691px;width:56px;height:20px;border-right:1px solid #d9d9d9;border-bottom:1px solid #d9d9d9;justify-content:flex-start;text-align:left;padding-left:2px;padding-top:2px">575.00</div>
<div class="c" style="left:1440px;top:691px;width:56px;height:20px;border-right:1px solid #d9d9d9;border-bottom:1px solid #d9d9d9;justify-content:flex-start;text-align:left;padding-left:2px;padding-top:2px">695.40</div>
<div class="c" style="left:1496px;top:691px;width:56px;height:20px;border-right:1px solid #d9d9d9;border-bottom:1px solid #d9d9d9;justify-content:flex-start;text-align:left;padding-left:2px;padding-top:2px">598.25</div>
<div class="c" style="left:1552px;top:691px;width:56px;height:20px;border-right:1px solid #d9d9d9;border-bottom:1px solid #d9d9d9;justify-content:flex-start;text-align:left;padding-left:2px;padding-top:2px">306.00</div>
<div class="c" style="left:1608px;top:691px;width:56px;height:20px;border-right:1px solid #d9d9d9;border-bottom:1px solid #d9d9d9;justify-content:flex-start;text-align:left;padding-left:2px;padding-top:2px">8857.01</div>
<div class="c" style="left:1664px;top:691px;width:56px;height:20px;border-right:1px solid #d9d9d9;border-bottom:1px solid #d9d9d9;justify-content:flex-start;text-align:left;padding-left:2px;padding-top:2px">5717.72</div>
<div class="c" style="left:1720px;top:691px;width:56px;height:20px;border-right:1px solid #d9d9d9;border-bottom:1px solid #d9d9d9;justify-content:flex-start;text-align:left;padding-left:2px;padding-top:2px">3281.63</div>
<div class="c" style="left:40px;top:711px;width:173px;height:20px;border-right:1px solid #d9d9d9;border-bottom:1px solid #d9d9d9;justify-content:flex-start;text-align:left;padding-left:2px;padding-top:2px">2025-01-13 10:46:00</div>
<div class="c" style="left:213px;top:711px;width:63px;height:20px;border-right:1px solid #d9d9d9;border-bottom:1px solid #d9d9d9;justify-content:flex-start;text-align:left;padding-left:2px;padding-top:2px"><span class="zh">中班</span></div>
<div class="c" style="left:276px;top:711px;width:48px;height:20px;border-right:1px solid #d9d9d9;border-bottom:1px solid #d9d9d9;justify-content:flex-start;text-align:left;padding-left:2px;padding-top:2px">298.33</div>
<div class="c" style="left:324px;top:711px;width:48px;height:20px;border-right:1px solid #d9d9d9;border-bottom:1px solid #d9d9d9;justify-content:flex-start;text-align:left;padding-left:2px;padding-top:2px">636.33</div>
<div class="c" style="left:372px;top:711px;width:48px;height:20px;border-right:1px solid #d9d9d9;border-bottom:1px solid #d9d9d9;justify-content:flex-start;text-align:left;padding-left:2px;padding-top:2px">297.00</div>
<div class="c" style="left:420px;top:711px;width:48px;height:20px;border-right:1px solid #d9d9d9;border-bottom:1px solid #d9d9d9;justify-content:flex-start;text-align:left;padding-left:2px;padding-top:2px">29.00</div>
<div class="c" style="left:468px;top:711px;width:48px;height:20px;border-right:1px solid #d9d9d9;border-bottom:1px solid #d9d9d9;justify-content:flex-start;text-align:left;padding-left:2px;padding-top:2px">23.00</div>
<div class="c" style="left:516px;top:711px;width:48px;height:20px;border-right:1px solid #d9d9d9;border-bottom:1px solid #d9d9d9;justify-content:flex-start;text-align:left;padding-left:2px;padding-top:2px">538.25</div>
<div class="c" style="left:564px;top:711px;width:48px;height:20px;border-right:1px solid #d9d9d9;border-bottom:1px solid #d9d9d9;justify-content:flex-start;text-align:left;padding-left:2px;padding-top:2px">315.20</div>
<div class="c" style="left:612px;top:711px;width:48px;height:20px;border-right:1px solid #d9d9d9;border-bottom:1px solid #d9d9d9;justify-content:flex-start;text-align:left;padding-left:2px;padding-top:2px">836.00</div>
<div class="c" style="left:660px;top:711px;width:48px;height:20px;border-right:1px solid #d9d9d9;border-bottom:1px solid #d9d9d9;justify-content:flex-start;text-align:left;padding-left:2px;padding-top:2px">562.00</div>
<div class="c" style="left:708px;top:711px;width:48px;height:20px;border-right:1px solid #d9d9d9;border-bottom:1px solid #d9d9d9;justify-content:flex-start;text-align:left;padding-left:2px;padding-top:2px">740.13</div>
<div class="c" style="left:756px;top:711px;width:48px;height:20px;border-right:1px solid #d9d9d9;border-bottom:1px solid #d9d9d9;justify-content:flex-start;text-align:left;padding-left:2px;padding-top:2px">0.00</div>
<div class="c" style="left:804px;top:711px;width:48px;height:20px;border-right:1px solid #d9d9d9;border-bottom:1px solid #d9d9d9;justify-content:flex-start;text-align:left;padding-left:2px;padding-top:2px">0.00</div>
<div class="c" style="left:852px;top:711px;width:42px;height:20px;border-right:1px solid #d9d9d9;border-bottom:1px solid #d9d9d9;justify-content:flex-start;text-align:left;padding-left:2px;padding-top:2px">0</div>
<div class="c" style="left:894px;top:711px;width:42px;height:20px;border-right:1px solid #d9d9d9;border-bottom:1px solid #d9d9d9;justify-content:flex-start;text-align:left;padding-left:2px;padding-top:2px">0.00</div>
<div class="c" style="left:936px;top:711px;width:56px;height:20px;border-right:1px solid #d9d9d9;border-bottom:1px solid #d9d9d9;justify-content:flex-start;text-align:left;padding-left:2px;padding-top:2px">7772.00</div>
<div class="c" style="left:992px;top:711px;width:56px;height:20px;border-right:1px solid #d9d9d9;border-bottom:1px solid #d9d9d9;justify-content:flex-start;text-align:left;padding-left:2px;padding-top:2px">1230.00</div>
<div class="c" style="left:1048px;top:711px;width:56px;height:20px;border-right:1px solid #d9d9d9;border-bottom:1px solid #d9d9d9;justify-content:flex-start;text-align:left;padding-left:2px;padding-top:2px">4276.00</div>
<div class="c" style="left:1104px;top:711px;width:56px;height:20px;border-right:1px solid #d9d9d9;border-bottom:1px solid #d9d9d9;justify-content:flex-start;text-align:left;padding-left:2px;padding-top:2px">42.00</div>
<div class="c" style="left:1160px;top:711px;width:56px;height:20px;border-right:1px solid #d9d9d9;border-bottom:1px solid #d9d9d9;justify-content:flex-start;text-align:left;padding-left:2px;padding-top:2px">952.00</div>
<div class="c" style="left:1216px;top:711px;width:56px;height:20px;border-right:1px solid #d9d9d9;border-bottom:1px solid #d9d9d9;justify-content:flex-start;text-align:left;padding-left:2px;padding-top:2px">14.00</div>
<div class="c" style="left:1272px;top:711px;width:56px;height:20px;border-right:1px solid #d9d9d9;border-bottom:1px solid #d9d9d9;justify-content:flex-start;text-align:left;padding-left:2px;padding-top:2px">452.00</div>
<div class="c" style="left:1328px;top:711px;width:56px;height:20px;border-right:1px solid #d9d9d9;border-bottom:1px solid #d9d9d9;justify-content:flex-start;text-align:left;padding-left:2px;padding-top:2px">86.20</div>
<div class="c" style="left:1384px;top:711px;width:56px;height:20px;border-right:1px solid #d9d9d9;border-bottom:1px solid #d9d9d9;justify-content:flex-start;text-align:left;padding-left:2px;padding-top:2px">756.00</div>
<div class="c" style="left:1440px;top:711px;width:56px;height:20px;border-right:1px solid #d9d9d9;border-bottom:1px solid #d9d9d9;justify-content:flex-start;text-align:left;padding-left:2px;padding-top:2px">746.50</div>
<div class="c" style="left:1496px;top:711px;width:56px;height:20px;border-right:1px solid #d9d9d9;border-bottom:1px solid #d9d9d9;justify-content:flex-start;text-align:left;padding-left:2px;padding-top:2px">637.25</div>
<div class="c" style="left:1552px;top:711px;width:56px;height:20px;border-right:1px solid #d9d9d9;border-bottom:1px solid #d9d9d9;justify-content:flex-start;text-align:left;padding-left:2px;padding-top:2px">213.50</div>
<div class="c" style="left:1608px;top:711px;width:56px;height:20px;border-right:1px solid #d9d9d9;border-bottom:1px solid #d9d9d9;justify-content:flex-start;text-align:left;padding-left:2px;padding-top:2px">7482.32</div>
<div class="c" style="left:1664px;top:711px;width:56px;height:20px;border-right:1px solid #d9d9d9;border-bottom:1px solid #d9d9d9;justify-content:flex-start;text-align:left;padding-left:2px;padding-top:2px">5023.15</div>
<div class="c" style="left:1720px;top:711px;width:56px;height:20px;border-right:1px solid #d9d9d9;border-bottom:1px solid #d9d9d9;justify-content:flex-start;text-align:left;padding-left:2px;padding-top:2px">7955.39</div>
<div class="c" style="left:40px;top:731px;width:173px;height:20px;border-right:1px solid #d9d9d9;border-bottom:1px solid #d9d9d9;justify-content:flex-start;text-align:left;padding-left:2px;padding-top:2px"><span class="zh">最大值</span></div>
<div class="c" style="left:213px;top:731px;width:63px;height:20px;border-right:1px solid #d9d9d9;border-bottom:1px solid #d9d9d9;justify-content:flex-start;text-align:left;padding-left:2px;padding-top:2px"><span class="zh">最大值</span></div>
<div class="c" style="left:276px;top:731px;width:48px;height:20px;border-right:1px solid #d9d9d9;border-bottom:1px solid #d9d9d9;justify-content:flex-start;text-align:left;padding-left:2px;padding-top:2px">300.00</div>
<div class="c" style="left:324px;top:731px;width:48px;height:20px;border-right:1px solid #d9d9d9;border-bottom:1px solid #d9d9d9;justify-content:flex-start;text-align:left;padding-left:2px;padding-top:2px">636.33</div>
<div class="c" style="left:372px;top:731px;width:48px;height:20px;border-right:1px solid #d9d9d9;border-bottom:1px solid #d9d9d9;justify-content:flex-start;text-align:left;padding-left:2px;padding-top:2px">493.00</div>
<div class="c" style="left:420px;top:731px;width:48px;height:20px;border-right:1px solid #d9d9d9;border-bottom:1px solid #d9d9d9;justify-content:flex-start;text-align:left;padding-left:2px;padding-top:2px">75.00</div>
<div class="c" style="left:468px;top:731px;width:48px;height:20px;border-right:1px solid #d9d9d9;border-bottom:1px solid #d9d9d9;justify-content:flex-start;text-align:left;padding-left:2px;padding-top:2px">47.00</div>
<div class="c" style="left:516px;top:731px;width:48px;height:20px;border-right:1px solid #d9d9d9;border-bottom:1px solid #d9d9d9;justify-content:flex-start;text-align:left;padding-left:2px;padding-top:2px">722.00</div>
<div class="c" style="left:564px;top:731px;width:48px;height:20px;border-right:1px solid #d9d9d9;border-bottom:1px solid #d9d9d9;justify-content:flex-start;text-align:left;padding-left:2px;padding-top:2px">574.50</div>
<div class="c" style="left:612px;top:731px;width:48px;height:20px;border-right:1px solid #d9d9d9;border-bottom:1px solid #d9d9d9;justify-content:flex-start;text-align:left;padding-left:2px;padding-top:2px">890.50</div>
<div class="c" style="left:660px;top:731px;width:48px;height:20px;border-right:1px solid #d9d9d9;border-bottom:1px solid #d9d9d9;justify-content:flex-start;text-align:left;padding-left:2px;padding-top:2px">1447.20</div>
<div class="c" style="left:708px;top:731px;width:48px;height:20px;border-right:1px solid #d9d9d9;border-bottom:1px solid #d9d9d9;justify-content:flex-start;text-align:left;padding-left:2px;padding-top:2px">877.50</div>
<div class="c" style="left:756px;top:731px;width:48px;height:20px;border-right:1px solid #d9d9d9;border-bottom:1px solid #d9d9d9;justify-content:flex-start;text-align:left;padding-left:2px;padding-top:2px">0.00</div>
<div class="c" style="left:804px;top:731px;width:48px;height:20px;border-right:1px solid #d9d9d9;border-bottom:1px solid #d9d9d9;justify-content:flex-start;text-align:left;padding-left:2px;padding-top:2px">0.00</div>
<div class="c" style="left:852px;top:731px;width:42px;height:20px;border-right:1px solid #d9d9d9;border-bottom:1px solid #d9d9d9;justify-content:flex-start;text-align:left;padding-left:2px;padding-top:2px">0</div>
<div class="c" style="left:894px;top:731px;width:42px;height:20px;border-right:1px solid #d9d9d9;border-bottom:1px solid #d9d9d9;justify-content:flex-start;text-align:left;padding-left:2px;padding-top:2px">0.00</div>
<div class="c" style="left:936px;top:731px;width:56px;height:20px;border-right:1px solid #d9d9d9;border-bottom:1px solid #d9d9d9;justify-content:flex-start;text-align:left;padding-left:2px;padding-top:2px">14710.00</div>
<div class="c" style="left:992px;top:731px;width:56px;height:20px;border-right:1px solid #d9d9d9;border-bottom:1px solid #d9d9d9;justify-content:flex-start;text-align:left;padding-left:2px;padding-top:2px">11493.00</div>
<div class="c" style="left:1048px;top:731px;width:56px;height:20px;border-right:1px solid #d9d9d9;border-bottom:1px solid #d9d9d9;justify-content:flex-start;text-align:left;padding-left:2px;padding-top:2px">9476.00</div>
<div class="c" style="left:1104px;top:731px;width:56px;height:20px;border-right:1px solid #d9d9d9;border-bottom:1px solid #d9d9d9;justify-content:flex-start;text-align:left;padding-left:2px;padding-top:2px">118.00</div>
<div class="c" style="left:1160px;top:731px;width:56px;height:20px;border-right:1px solid #d9d9d9;border-bottom:1px solid #d9d9d9;justify-content:flex-start;text-align:left;padding-left:2px;padding-top:2px">1192.00</div>
<div class="c" style="left:1216px;top:731px;width:56px;height:20px;border-right:1px solid #d9d9d9;border-bottom:1px solid #d9d9d9;justify-content:flex-start;text-align:left;padding-left:2px;padding-top:2px">108.00</div>
<div class="c" style="left:1272px;top:731px;width:56px;height:20px;border-right:1px solid #d9d9d9;border-bottom:1px solid #d9d9d9;justify-content:flex-start;text-align:left;padding-left:2px;padding-top:2px">990.00</div>
<div class="c" style="left:1328px;top:731px;width:56px;height:20px;border-right:1px solid #d9d9d9;border-bottom:1px solid #d9d9d9;justify-content:flex-start;text-align:left;padding-left:2px;padding-top:2px">599.10</div>
<div class="c" style="left:1384px;top:731px;width:56px;height:20px;border-right:1px solid #d9d9d9;border-bottom:1px solid #d9d9d9;justify-content:flex-start;text-align:left;padding-left:2px;padding-top:2px">946.00</div>
<div class="c" style="left:1440px;top:731px;width:56px;height:20px;border-right:1px solid #d9d9d9;border-bottom:1px solid #d9d9d9;justify-content:flex-start;text-align:left;padding-left:2px;padding-top:2px">746.50</div>
<div class="c" style="left:1496px;top:731px;width:56px;height:20px;border-right:1px solid #d9d9d9;border-bottom:1px solid #d9d9d9;justify-content:flex-start;text-align:left;padding-left:2px;padding-top:2px">637.25</div>
<div class="c" style="left:1552px;top:731px;width:56px;height:20px;border-right:1px solid #d9d9d9;border-bottom:1px solid #d9d9d9;justify-content:flex-start;text-align:left;padding-left:2px;padding-top:2px">473.50</div>
<div class="c" style="left:1608px;top:731px;width:56px;height:20px;border-right:1px solid #d9d9d9;border-bottom:1px solid #d9d9d9;justify-content:flex-start;text-align:left;padding-left:2px;padding-top:2px">9714.85</div>
<div class="c" style="left:1664px;top:731px;width:56px;height:20px;border-right:1px solid #d9d9d9;border-bottom:1px solid #d9d9d9;justify-content:flex-start;text-align:left;padding-left:2px;padding-top:2px">8067.16</div>
<div class="c" style="left:1720px;top:731px;width:56px;height:20px;border-right:1px solid #d9d9d9;border-bottom:1px solid #d9d9d9;justify-content:flex-start;text-align:left;padding-left:2px;padding-top:2px">9509.80</div>
<div class="c" style="left:40px;top:751px;width:173px;height:20px;border-right:1px solid #d9d9d9;border-bottom:1px solid #d9d9d9;justify-content:flex-start;text-align:left;padding-left:2px;padding-top:2px"><span class="zh">最小值</span></div>
<div class="c" style="left:213px;top:751px;width:63px;height:20px;border-right:1px solid #d9d9d9;border-bottom:1px solid #d9d9d9;justify-content:flex-start;text-align:left;padding-left:2px;padding-top:2px"><span class="zh">最小值</span></div>
<div class="c" style="left:276px;top:751px;width:48px;height:20px;border-right:1px solid #d9d9d9;border-bottom:1px solid #d9d9d9;justify-content:flex-start;text-align:left;padding-left:2px;padding-top:2px">135.17</div>
<div class="c" style="left:324px;top:751px;width:48px;height:20px;border-right:1px solid #d9d9d9;border-bottom:1px solid #d9d9d9;justify-content:flex-start;text-align:left;padding-left:2px;padding-top:2px">40.50</div>
<div class="c" style="left:372px;top:751px;width:48px;height:20px;border-right:1px solid #d9d9d9;border-bottom:1px solid #d9d9d9;justify-content:flex-start;text-align:left;padding-left:2px;padding-top:2px">233.00</div>
<div class="c" style="left:420px;top:751px;width:48px;height:20px;border-right:1px solid #d9d9d9;border-bottom:1px solid #d9d9d9;justify-content:flex-start;text-align:left;padding-left:2px;padding-top:2px">2.00</div>
<div class="c" style="left:468px;top:751px;width:48px;height:20px;border-right:1px solid #d9d9d9;border-bottom:1px solid #d9d9d9;justify-content:flex-start;text-align:left;padding-left:2px;padding-top:2px">13.00</div>
<div class="c" style="left:516px;top:751px;width:48px;height:20px;border-right:1px solid #d9d9d9;border-bottom:1px solid #d9d9d9;justify-content:flex-start;text-align:left;padding-left:2px;padding-top:2px">97.50</div>
<div class="c" style="left:564px;top:751px;width:48px;height:20px;border-right:1px solid #d9d9d9;border-bottom:1px solid #d9d9d9;justify-content:flex-start;text-align:left;padding-left:2px;padding-top:2px">16.33</div>
<div class="c" style="left:612px;top:751px;width:48px;height:20px;border-right:1px solid #d9d9d9;border-bottom:1px solid #d9d9d9;justify-content:flex-start;text-align:left;padding-left:2px;padding-top:2px">203.00</div>
<div class="c" style="left:660px;top:751px;width:48px;height:20px;border-right:1px solid #d9d9d9;border-bottom:1px solid #d9d9d9;justify-content:flex-start;text-align:left;padding-left:2px;padding-top:2px">34.20</div>
<div class="c" style="left:708px;top:751px;width:48px;height:20px;border-right:1px solid #d9d9d9;border-bottom:1px solid #d9d9d9;justify-content:flex-start;text-align:left;padding-left:2px;padding-top:2px">59.33</div>
<div class="c" style="left:756px;top:751px;width:48px;height:20px;border-right:1px solid #d9d9d9;border-bottom:1px solid #d9d9d9;justify-content:flex-start;text-align:left;padding-left:2px;padding-top:2px">0.00</div>
<div class="c" style="left:804px;top:751px;width:48px;height:20px;border-right:1px solid #d9d9d9;border-bottom:1px solid #d9d9d9;justify-content:flex-start;text-align:left;padding-left:2px;padding-top:2px">0.00</div>
<div class="c" style="left:852px;top:751px;width:42px;height:20px;border-right:1px solid #d9d9d9;border-bottom:1px solid #d9d9d9;justify-content:flex-start;text-align:left;padding-left:2px;padding-top:2px">0</div>
<div class="c" style="left:894px;top:751px;width:42px;height:20px;border-right:1px solid #d9d9d9;border-bottom:1px solid #d9d9d9;justify-content:flex-start;text-align:left;padding-left:2px;padding-top:2px">0.00</div>
<div class="c" style="left:936px;top:751px;width:56px;height:20px;border-right:1px solid #d9d9d9;border-bottom:1px solid #d9d9d9;justify-content:flex-start;text-align:left;padding-left:2px;padding-top:2px">442.00</div>
<div class="c" style="left:992px;top:751px;width:56px;height:20px;border-right:1px solid #d9d9d9;border-bottom:1px solid #d9d9d9;justify-content:flex-start;text-align:left;padding-left:2px;padding-top:2px">1230.00</div>
<div class="c" style="left:1048px;top:751px;width:56px;height:20px;border-right:1px solid #d9d9d9;border-bottom:1px solid #d9d9d9;justify-content:flex-start;text-align:left;padding-left:2px;padding-top:2px">901.00</div>
<div class="c" style="left:1104px;top:751px;width:56px;height:20px;border-right:1px solid #d9d9d9;border-bottom:1px solid #d9d9d9;justify-content:flex-start;text-align:left;padding-left:2px;padding-top:2px">14.00</div>
<div class="c" style="left:1160px;top:751px;width:56px;height:20px;border-right:1px solid #d9d9d9;border-bottom:1px solid #d9d9d9;justify-content:flex-start;text-align:left;padding-left:2px;padding-top:2px">805.00</div>
<div class="c" style="left:1216px;top:751px;width:56px;height:20px;border-right:1px solid #d9d9d9;border-bottom:1px solid #d9d9d9;justify-content:flex-start;text-align:left;padding-left:2px;padding-top:2px">14.00</div>
<div class="c" style="left:1272px;top:751px;width:56px;height:20px;border-right:1px solid #d9d9d9;border-bottom:1px solid #d9d9d9;justify-content:flex-start;text-align:left;padding-left:2px;padding-top:2px">48.00</div>
<div class="c" style="left:1328px;top:751px;width:56px;height:20px;border-right:1px solid #d9d9d9;border-bottom:1px solid #d9d9d9;justify-content:flex-start;text-align:left;padding-left:2px;padding-top:2px">86.20</div>
<div class="c" style="left:1384px;top:751px;width:56px;height:20px;border-right:1px solid #d9d9d9;border-bottom:1px solid #d9d9d9;justify-content:flex-start;text-align:left;padding-left:2px;padding-top:2px">23.00</div>
<div class="c" style="left:1440px;top:751px;width:56px;height:20px;border-right:1px solid #d9d9d9;border-bottom:1px solid #d9d9d9;justify-content:flex-start;text-align:left;padding-left:2px;padding-top:2px">27.60</div>
<div class="c" style="left:1496px;top:751px;width:56px;height:20px;border-right:1px solid #d9d9d9;border-bottom:1px solid #d9d9d9;justify-content:flex-start;text-align:left;padding-left:2px;padding-top:2px">87.50</div>
<div class="c" style="left:1552px;top:751px;width:56px;height:20px;border-right:1px solid #d9d9d9;border-bottom:1px solid #d9d9d9;justify-content:flex-start;text-align:left;padding-left:2px;padding-top:2px">46.00</div>
<div class="c" style="left:1608px;top:751px;width:56px;height:20px;border-right:1px solid #d9d9d9;border-bottom:1px solid #d9d9d9;justify-content:flex-start;text-align:left;padding-left:2px;padding-top:2px">1018.34</div>
<div class="c" style="left:1664px;top:751px;width:56px;height:20px;border-right:1px solid #d9d9d9;border-bottom:1px solid #d9d9d9;justify-content:flex-start;text-align:left;padding-left:2px;padding-top:2px">738.28</div>
<div class="c" style="left:1720px;top:751px;width:56px;height:20px;border-right:1px solid #d9d9d9;border-bottom:1px solid #d9d9d9;justify-content:flex-start;text-align:left;padding-left:2px;padding-top:2px">33.47</div>
<div class="c" style="left:40px;top:771px;width:173px;height:20px;border-right:1px solid #d9d9d9;border-bottom:1px solid #d9d9d9;justify-content:flex-start;text-align:left;padding-left:2px;padding-top:2px"><span class="zh">合计值</span></div>
<div class="c" style="left:213px;top:771px;width:63px;height:20px;border-right:1px solid #d9d9d9;border-bottom:1px solid #d9d9d9;justify-content:flex-start;text-align:left;padding-left:2px;padding-top:2px"><span class="zh">合计值</span></div>
<div class="c" style="left:276px;top:771px;width:48px;height:20px;border-right:1px solid #d9d9d9;border-bottom:1px solid #d9d9d9;justify-content:flex-start;text-align:left;padding-left:2px;padding-top:2px">3664.93</div>
<div class="c" style="left:324px;top:771px;width:48px;height:20px;border-right:1px solid #d9d9d9;border-bottom:1px solid #d9d9d9;justify-content:flex-start;text-align:left;padding-left:2px;padding-top:2px">5243.69</div>
<div class="c" style="left:372px;top:771px;width:48px;height:20px;border-right:1px solid #d9d9d9;border-bottom:1px solid #d9d9d9;justify-content:flex-start;text-align:left;padding-left:2px;padding-top:2px">5731.00</div>
<div class="c" style="left:420px;top:771px;width:48px;height:20px;border-right:1px solid #d9d9d9;border-bottom:1px solid #d9d9d9;justify-content:flex-start;text-align:left;padding-left:2px;padding-top:2px">585.00</div>
<div class="c" style="left:468px;top:771px;width:48px;height:20px;border-right:1px solid #d9d9d9;border-bottom:1px solid #d9d9d9;justify-content:flex-start;text-align:left;padding-left:2px;padding-top:2px">431.00</div>
<div class="c" style="left:516px;top:771px;width:48px;height:20px;border-right:1px solid #d9d9d9;border-bottom:1px solid #d9d9d9;justify-content:flex-start;text-align:left;padding-left:2px;padding-top:2px">6855.78</div>
<div class="c" style="left:564px;top:771px;width:48px;height:20px;border-right:1px solid #d9d9d9;border-bottom:1px solid #d9d9d9;justify-content:flex-start;text-align:left;padding-left:2px;padding-top:2px">4625.27</div>
<div class="c" style="left:612px;top:771px;width:48px;height:20px;border-right:1px solid #d9d9d9;border-bottom:1px solid #d9d9d9;justify-content:flex-start;text-align:left;padding-left:2px;padding-top:2px">8715.94</div>
<div class="c" style="left:660px;top:771px;width:48px;height:20px;border-right:1px solid #d9d9d9;border-bottom:1px solid #d9d9d9;justify-content:flex-start;text-align:left;padding-left:2px;padding-top:2px">9102.19</div>
<div class="c" style="left:708px;top:771px;width:48px;height:20px;border-right:1px solid #d9d9d9;border-bottom:1px solid #d9d9d9;justify-content:flex-start;text-align:left;padding-left:2px;padding-top:2px">6562.95</div>
<div class="c" style="left:756px;top:771px;width:48px;height:20px;border-right:1px solid #d9d9d9;border-bottom:1px solid #d9d9d9;justify-content:flex-start;text-align:left;padding-left:2px;padding-top:2px">0.00</div>
<div class="c" style="left:804px;top:771px;width:48px;height:20px;border-right:1px solid #d9d9d9;border-bottom:1px solid #d9d9d9;justify-content:flex-start;text-align:left;padding-left:2px;padding-top:2px">0.00</div>
<div class="c" style="left:852px;top:771px;width:42px;height:20px;border-right:1px solid #d9d9d9;border-bottom:1px solid #d9d9d9;justify-content:flex-start;text-align:left;padding-left:2px;padding-top:2px">0</div>
<div class="c" style="left:894px;top:771px;width:42px;height:20px;border-right:1px solid #d9d9d9;border-bottom:1px solid #d9d9d9;justify-content:flex-start;text-align:left;padding-left:2px;padding-top:2px">0.00</div>
<div class="c" style="left:936px;top:771px;width:56px;height:20px;border-right:1px solid #d9d9d9;border-bottom:1px solid #d9d9d9;justify-content:flex-start;text-align:left;padding-left:2px;padding-top:2px">99613.00</div>
<div class="c" style="left:992px;top:771px;width:56px;height:20px;border-right:1px solid #d9d9d9;border-bottom:1px solid #d9d9d9;justify-content:flex-start;text-align:left;padding-left:2px;padding-top:2px">95417.00</div>
<div class="c" style="left:1048px;top:771px;width:56px;height:20px;border-right:1px solid #d9d9d9;border-bottom:1px solid #d9d9d9;justify-content:flex-start;text-align:left;padding-left:2px;padding-top:2px">79965.00</div>
<div class="c" style="left:1104px;top:771px;width:56px;height:20px;border-right:1px solid #d9d9d9;border-bottom:1px solid #d9d9d9;justify-content:flex-start;text-align:left;padding-left:2px;padding-top:2px">996.00</div>
<div class="c" style="left:1160px;top:771px;width:56px;height:20px;border-right:1px solid #d9d9d9;border-bottom:1px solid #d9d9d9;justify-content:flex-start;text-align:left;padding-left:2px;padding-top:2px">14343.00</div>
<div class="c" style="left:1216px;top:771px;width:56px;height:20px;border-right:1px solid #d9d9d9;border-bottom:1px solid #d9d9d9;justify-content:flex-start;text-align:left;padding-left:2px;padding-top:2px">794.00</div>
<div class="c" style="left:1272px;top:771px;width:56px;height:20px;border-right:1px solid #d9d9d9;border-bottom:1px solid #d9d9d9;justify-content:flex-start;text-align:left;padding-left:2px;padding-top:2px">8950.00</div>
<div class="c" style="left:1328px;top:771px;width:56px;height:20px;border-right:1px solid #d9d9d9;border-bottom:1px solid #d9d9d9;justify-content:flex-start;text-align:left;padding-left:2px;padding-top:2px">4904.00</div>
<div class="c" style="left:1384px;top:771px;width:56px;height:20px;border-right:1px solid #d9d9d9;border-bottom:1px solid #d9d9d9;justify-content:flex-start;text-align:left;padding-left:2px;padding-top:2px">7269.00</div>
<div class="c" style="left:1440px;top:771px;width:56px;height:20px;border-right:1px solid #d9d9d9;border-bottom:1px solid #d9d9d9;justify-content:flex-start;text-align:left;padding-left:2px;padding-top:2px">5804.70</div>
<div class="c" style="left:1496px;top:771px;width:56px;height:20px;border-right:1px solid #d9d9d9;border-bottom:1px solid #d9d9d9;justify-content:flex-start;text-align:left;padding-left:2px;padding-top:2px">5438.25</div>
<div class="c" style="left:1552px;top:771px;width:56px;height:20px;border-right:1px solid #d9d9d9;border-bottom:1px solid #d9d9d9;justify-content:flex-start;text-align:left;padding-left:2px;padding-top:2px">4000.00</div>
<div class="c" style="left:1608px;top:771px;width:56px;height:20px;border-right:1px solid #d9d9d9;border-bottom:1px solid #d9d9d9;justify-content:flex-start;text-align:left;padding-left:2px;padding-top:2px">82544.21</div>
<div class="c" style="left:1664px;top:771px;width:56px;height:20px;border-right:1px solid #d9d9d9;border-bottom:1px solid #d9d9d9;justify-content:flex-start;text-align:left;padding-left:2px;padding-top:2px">60552.44</div>
<div class="c" style="left:1720px;top:771px;width:56px;height:20px;border-right:1px solid #d9d9d9;border-bottom:1px solid #d9d9d9;justify-content:flex-start;text-align:left;padding-left:2px;padding-top:2px">64671.93</div>
<div class="c" style="left:40px;top:791px;width:173px;height:20px;border-right:1px solid #d9d9d9;border-bottom:1px solid #d9d9d9;justify-content:flex-start;text-align:left;padding-left:2px;padding-top:2px"><span class="zh">平均值</span></div>
<div class="c" style="left:213px;top:791px;width:63px;height:20px;border-right:1px solid #d9d9d9;border-bottom:1px solid #d9d9d9;justify-content:flex-start;text-align:left;padding-left:2px;padding-top:2px"><span class="zh">平均值</span></div>
<div class="c" style="left:276px;top:791px;width:48px;height:20px;border-right:1px solid #d9d9d9;border-bottom:1px solid #d9d9d9;justify-content:flex-start;text-align:left;padding-left:2px;padding-top:2px">244.33</div>
<div class="c" style="left:324px;top:791px;width:48px;height:20px;border-right:1px solid #d9d9d9;border-bottom:1px solid #d9d9d9;justify-content:flex-start;text-align:left;padding-left:2px;padding-top:2px">349.58</div>
<div class="c" style="left:372px;top:791px;width:48px;height:20px;border-right:1px solid #d9d9d9;border-bottom:1px solid #d9d9d9;justify-content:flex-start;text-align:left;padding-left:2px;padding-top:2px">382.07</div>
<div class="c" style="left:420px;top:791px;width:48px;height:20px;border-right:1px solid #d9d9d9;border-bottom:1px solid #d9d9d9;justify-content:flex-start;text-align:left;padding-left:2px;padding-top:2px">39.00</div>
<div class="c" style="left:468px;top:791px;width:48px;height:20px;border-right:1px solid #d9d9d9;border-bottom:1px solid #d9d9d9;justify-content:flex-start;text-align:left;padding-left:2px;padding-top:2px">28.73</div>
<div class="c" style="left:516px;top:791px;width:48px;height:20px;border-right:1px solid #d9d9d9;border-bottom:1px solid #d9d9d9;justify-content:flex-start;text-align:left;padding-left:2px;padding-top:2px">457.05</div>
<div class="c" style="left:564px;top:791px;width:48px;height:20px;border-right:1px solid #d9d9d9;border-bottom:1px solid #d9d9d9;justify-content:flex-start;text-align:left;padding-left:2px;padding-top:2px">308.35</div>
<div class="c" style="left:612px;top:791px;width:48px;height:20px;border-right:1px solid #d9d9d9;border-bottom:1px solid #d9d9d9;justify-content:flex-start;text-align:left;padding-left:2px;padding-top:2px">581.06</div>
<div class="c" style="left:660px;top:791px;width:48px;height:20px;border-right:1px solid #d9d9d9;border-bottom:1px solid #d9d9d9;justify-content:flex-start;text-align:left;padding-left:2px;padding-top:2px">606.81</div>
<div class="c" style="left:708px;top:791px;width:48px;height:20px;border-right:1px solid #d9d9d9;border-bottom:1px solid #d9d9d9;justify-content:flex-start;text-align:left;padding-left:2px;padding-top:2px">437.53</div>
<div class="c" style="left:756px;top:791px;width:48px;height:20px;border-right:1px solid #d9d9d9;border-bottom:1px solid #d9d9d9;justify-content:flex-start;text-align:left;padding-left:2px;padding-top:2px">0.00</div>
<div class="c" style="left:804px;top:791px;width:48px;height:20px;border-right:1px solid #d9d9d9;border-bottom:1px solid #d9d9d9;justify-content:flex-start;text-align:left;padding-left:2px;padding-top:2px">0.00</div>
<div class="c" style="left:852px;top:791px;width:42px;height:20px;border-right:1px solid #d9d9d9;border-bottom:1px solid #d9d9d9;justify-content:flex-start;text-align:left;padding-left:2px;padding-top:2px">0</div>
<div class="c" style="left:894px;top:791px;width:42px;height:20px;border-right:1px solid #d9d9d9;border-bottom:1px solid #d9d9d9;justify-content:flex-start;text-align:left;padding-left:2px;padding-top:2px">0.00</div>
<div class="c" style="left:936px;top:791px;width:56px;height:20px;border-right:1px solid #d9d9d9;border-bottom:1px solid #d9d9d9;justify-content:flex-start;text-align:left;padding-left:2px;padding-top:2px">6640.87</div>
<div class="c" style="left:992px;top:791px;width:56px;height:20px;border-right:1px solid #d9d9d9;border-bottom:1px solid #d9d9d9;justify-content:flex-start;text-align:left;padding-left:2px;padding-top:2px">6361.13</div>
<div class="c" style="left:1048px;top:791px;width:56px;height:20px;border-right:1px solid #d9d9d9;border-bottom:1px solid #d9d9d9;justify-content:flex-start;text-align:left;padding-left:2px;padding-top:2px">5331.00</div>
<div class="c" style="left:1104px;top:791px;width:56px;height:20px;border-right:1px solid #d9d9d9;border-bottom:1px solid #d9d9d9;justify-content:flex-start;text-align:left;padding-left:2px;padding-top:2px">66.40</div>
<div class="c" style="left:1160px;top:791px;width:56px;height:20px;border-right:1px solid #d9d9d9;border-bottom:1px solid #d9d9d9;justify-content:flex-start;text-align:left;padding-left:2px;padding-top:2px">956.20</div>
<div class="c" style="left:1216px;top:791px;width:56px;height:20px;border-right:1px solid #d9d9d9;border-bottom:1px solid #d9d9d9;justify-content:flex-start;text-align:left;padding-left:2px;padding-top:2px">52.93</div>
<div class="c" style="left:1272px;top:791px;width:56px;height:20px;border-right:1px solid #d9d9d9;border-bottom:1px solid #d9d9d9;justify-content:flex-start;text-align:left;padding-left:2px;padding-top:2px">596.67</div>
<div class="c" style="left:1328px;top:791px;width:56px;height:20px;border-right:1px solid #d9d9d9;border-bottom:1px solid #d9d9d9;justify-content:flex-start;text-align:left;padding-left:2px;padding-top:2px">326.93</div>
<div class="c" style="left:1384px;top:791px;width:56px;height:20px;border-right:1px solid #d9d9d9;border-bottom:1px solid #d9d9d9;justify-content:flex-start;text-align:left;padding-left:2px;padding-top:2px">484.60</div>
<div class="c" style="left:1440px;top:791px;width:56px;height:20px;border-right:1px solid #d9d9d9;border-bottom:1px solid #d9d9d9;justify-content:flex-start;text-align:left;padding-left:2px;padding-top:2px">386.98</div>
<div class="c" style="left:1496px;top:791px;width:56px;height:20px;border-right:1px solid #d9d9d9;border-bottom:1px solid #d9d9d9;justify-content:flex-start;text-align:left;padding-left:2px;padding-top:2px">362.55</div>
<div class="c" style="left:1552px;top:791px;width:56px;height:20px;border-right:1px solid #d9d9d9;border-bottom:1px solid #d9d9d9;justify-content:flex-start;text-align:left;padding-left:2px;padding-top:2px">266.67</div>
<div class="c" style="left:1608px;top:791px;width:56px;height:20px;border-right:1px solid #d9d9d9;border-bottom:1px solid #d9d9d9;justify-content:flex-start;text-align:left;padding-left:2px;padding-top:2px">5502.95</div>
<div class="c" style="left:1664px;top:791px;width:56px;height:20px;border-right:1px solid #d9d9d9;border-bottom:1px solid #d9d9d9;justify-content:flex-start;text-align:left;padding-left:2px;padding-top:2px">4036.83</div>
<div class="c" style="left:1720px;top:791px;width:56px;height:20px;border-right:1px solid #d9d9d9;border-bottom:1px solid #d9d9d9;justify-content:flex-start;text-align:left;padding-left:2px;padding-top:2px">4311.46</div>
<div style="position:absolute;left:1898px;top:152px;width:1px;height:680px;background:#aaa"></div>
<div style="position:absolute;left:1899px;top:152px;width:21px;height:680px;background:#f6f6f6"></div>
<div style="position:absolute;left:1902px;top:152px;width:1px;height:680px;background:#aaa"></div>
<div style="position:absolute;left:1903px;top:152px;width:14px;height:680px;background:#e8e8e8"></div>
<div style="position:absolute;left:1916px;top:152px;width:1px;height:680px;background:#aaa"></div>
<div style="position:absolute;left:1903px;top:152px;width:13px;height:13px;background:#fff;border-bottom:1px solid #aaa"></div>
<svg style="position:absolute;left:1905px;top:155px" width="9" height="6" viewBox="0 0 9 6"><path d="M0.5 5.5 L4.5 1 L8.5 5.5 Z" fill="#666"/></svg>
<div style="position:absolute;left:1903px;top:167px;width:12px;height:567px;background:#fff;border:1px solid #aaa;border-top:none"></div>
<div style="position:absolute;left:0;top:832px;width:1920px;height:16px;background:#0099cc"></div>
<svg style="position:absolute;left:940px;top:833px" width="40" height="14" viewBox="0 0 40 14"><path d="M2 12 L8 2 L14 12 Z M26 2 L38 2 L32 12 Z" fill="#fff"/></svg>
<div style="position:absolute;left:10px;top:854px;font-size:16px;line-height:22px;color:#111;white-space:nowrap">开始时间:</div>
<div style="position:absolute;left:81px;top:854px;width:158px;height:23px;border:1px solid #d0d0d0;border-radius:5px;background:#fff"></div>
<div style="position:absolute;left:86px;top:857px;font-size:12.5px;line-height:18px;color:#111;white-space:nowrap">2025-01-13 10:17:00</div>
<svg style="position:absolute;left:223px;top:858px" width="15" height="16" viewBox="0 0 15 16"><rect x="0.5" y="2" width="14" height="13.5" fill="#f3f3f3" stroke="#cfcfcf"/><rect x="0.5" y="2" width="14" height="4" fill="#e5535a"/><rect x="3" y="0.5" width="2" height="3" fill="#c44"/><rect x="10" y="0.5" width="2" height="3" fill="#c44"/><text x="3.5" y="13" font-size="6" fill="#aaa" font-family="Liberation Sans">17</text></svg>
<div style="position:absolute;left:250px;top:854px;width:78px;height:23px;border:1px solid #d0d0d0;border-radius:5px;background:#fff;overflow:hidden"><div style="position:absolute;right:0;top:0;width:18px;height:23px;background:#f4f4f4"></div></div>
<div style="position:absolute;left:255px;top:857px;font-size:13px;line-height:18px;color:#111;white-space:nowrap">半小时</div>
<svg style="position:absolute;left:313px;top:861px" width="12" height="9" viewBox="0 0 12 9"><path d="M1.5 2 L6 6.5 L10.5 2" fill="none" stroke="#5aa7e6" stroke-width="1.8"/></svg>
<svg style="position:absolute;left:562px;top:853px" width="24" height="24" viewBox="0 0 24 24"><g fill="none" stroke="#ec5a1c" stroke-width="1.4"><path d="M1.6 13.5 A10.5 10.5 0 0 1 22.2 9"/><path d="M22.2 12 A10.5 10.5 0 0 1 1.5 15.5"/><path d="M22.7 2.5 L22.7 9.5 M1.2 15 L1.2 22"/></g><g fill="#ec5a1c"><rect x="8.6" y="4.6" width="6.4" height="1.5"/><rect x="8.6" y="17.6" width="6.4" height="1.5"/><rect x="7.3" y="6.2" width="1.5" height="5"/><rect x="7.3" y="12.4" width="1.5" height="5"/><rect x="14.9" y="6.2" width="1.5" height="5"/><rect x="14.9" y="12.4" width="1.5" height="5"/></g></svg>
<svg style="position:absolute;left:592px;top:854px" width="22" height="22" viewBox="0 0 22 22"><circle cx="11" cy="11" r="10" fill="none" stroke="#ec5a1c" stroke-width="1.4"/><rect x="6.3" y="6" width="1.6" height="10" fill="#ec5a1c"/><path d="M15.3 6 L8.5 11 L15.3 16Z" fill="#ec5a1c"/></svg>
<svg style="position:absolute;left:620px;top:854px" width="22" height="22" viewBox="0 0 22 22"><circle cx="11" cy="11" r="10" fill="none" stroke="#ec5a1c" stroke-width="1.4"/><rect x="14.1" y="6" width="1.6" height="10" fill="#ec5a1c"/><path d="M6.7 6 L13.5 11 L6.7 16Z" fill="#ec5a1c"/></svg>
<svg style="position:absolute;left:650px;top:855px" width="21" height="19" viewBox="0 0 21 19"><g transform="translate(10.5 9) rotate(-45)"><path d="M-10 -4.3 Q-10 -5.5 -8.8 -5.5 L5 -5.5 L10 -2.5 Q11 -1.8 11 0 Q11 1.8 10 2.5 L5 5.5 L-8.8 5.5 Q-10 5.5 -10 4.3 Z" fill="#109a2c"/><circle cx="6.3" cy="0" r="1.2" fill="#fff"/></g></svg>
<svg style="position:absolute;left:678px;top:855px" width="21" height="19" viewBox="0 0 21 19"><g transform="translate(10.5 9) rotate(-45)"><path d="M-10 -4.3 Q-10 -5.5 -8.8 -5.5 L5 -5.5 L10 -2.5 Q11 -1.8 11 0 Q11 1.8 10 2.5 L5 5.5 L-8.8 5.5 Q-10 5.5 -10 4.3 Z" fill="#dd1a0a"/><circle cx="6.3" cy="0" r="1.2" fill="#fff"/></g></svg>
<svg style="position:absolute;left:706px;top:855px" width="20" height="21" viewBox="0 0 20 21"><g fill="none" stroke="#ec5a1c" stroke-width="1.3"><rect x="0.8" y="0.8" width="18" height="4.5"/><rect x="0.8" y="7.8" width="13" height="4.5"/><rect x="0.8" y="14.8" width="8" height="4.5"/><path d="M14 12 L14 20 M10 16 L18 16"/></g><g fill="#ec5a1c" opacity="0.6"><rect x="3" y="2.3" width="2" height="1.2"/><rect x="3" y="9.3" width="2" height="1.2"/><rect x="3" y="16.3" width="2" height="1.2"/></g></svg>
<svg style="position:absolute;left:734px;top:854px" width="22" height="22" viewBox="0 0 22 22"><g transform="translate(11 11)"><path d="M-2.2 -10.2 L2.2 -10.2 L2.8 -7 L6.3 -8.5 L8.6 -5 L6.3 -2.6 L6.3 2.6 L8.6 5 L6.3 8.5 L2.8 7 L2.2 10.2 L-2.2 10.2 L-2.8 7 L-6.3 8.5 L-8.6 5 L-6.3 2.6 L-6.3 -2.6 L-8.6 -5 L-6.3 -8.5 L-2.8 -7 Z" fill="#00ee44" stroke="#ec5a1c" stroke-width="1.2" stroke-linejoin="round"/><circle r="4" fill="#8a2a9a" stroke="#c85a20" stroke-width="1"/></g></svg>
<svg style="position:absolute;left:763px;top:855px" width="20" height="20" viewBox="0 0 20 20"><g fill="none" stroke="#ec5a1c" stroke-width="1.4"><rect x="1" y="0.8" width="17.5" height="17.5"/><rect x="5" y="0.8" width="9.5" height="8.5"/></g><rect x="11.5" y="2.8" width="1.3" height="3" fill="#ec5a1c"/></svg>
<div style="position:absolute;left:950px;top:857px;font-size:15.5px;line-height:22px;color:#111;white-space:nowrap">光标时间:2025-01-13 10:27:00</div>
<div style="position:absolute;left:1320px;top:857px;font-size:15.5px;line-height:22px;color:#111;white-space:nowrap">二线生产控制参数定时记录</div>
<div style="position:absolute;left:1656px;top:857px;font-size:15.5px;line-height:22px;color:#111;white-space:nowrap">曲线组名称: <span style="color:#1a1aee">温压曲线</span></div>
<div style="position:absolute;left:0;top:880px;width:1920px;height:1px;background:#1e9ad6"></div>
<svg style="position:absolute;left:0;top:881px" width="1920" height="179" viewBox="0 881 1920 179">
<text x="960" y="916" font-size="20.8" fill="#ff2020" font-family="Liberation Sans">URPT 免编程工业通用综合报表</text>
<line x1="55" y1="1025.5" x2="60" y2="1025.5" stroke="#333" stroke-width="1"/>
<text x="52" y="1030.0" font-size="12.5" fill="#333" text-anchor="end" font-family="Liberation Sans">0</text>
<line x1="60" y1="1000.5" x2="1900" y2="1000.5" stroke="#d0d0d0" stroke-width="1"/>
<line x1="55" y1="1000.5" x2="60" y2="1000.5" stroke="#333" stroke-width="1"/>
<text x="52" y="1005.0" font-size="12.5" fill="#333" text-anchor="end" font-family="Liberation Sans">200</text>
<line x1="60" y1="974.5" x2="1900" y2="974.5" stroke="#d0d0d0" stroke-width="1"/>
<line x1="55" y1="974.5" x2="60" y2="974.5" stroke="#333" stroke-width="1"/>
<text x="52" y="979.0" font-size="12.5" fill="#333" text-anchor="end" font-family="Liberation Sans">400</text>
<line x1="60" y1="949.0" x2="1900" y2="949.0" stroke="#d0d0d0" stroke-width="1"/>
<line x1="55" y1="949.0" x2="60" y2="949.0" stroke="#333" stroke-width="1"/>
<text x="52" y="953.5" font-size="12.5" fill="#333" text-anchor="end" font-family="Liberation Sans">600</text>
<line x1="60" y1="923.0" x2="1900" y2="923.0" stroke="#d0d0d0" stroke-width="1"/>
<line x1="55" y1="923.0" x2="60" y2="923.0" stroke="#333" stroke-width="1"/>
<text x="52" y="927.5" font-size="12.5" fill="#333" text-anchor="end" font-family="Liberation Sans">800</text>
<line x1="1900.5" y1="922" x2="1900.5" y2="1025" stroke="#d8d8d8" stroke-width="1"/>
<line x1="60.5" y1="922" x2="60.5" y2="1026" stroke="#333" stroke-width="1"/>
<line x1="60" y1="1025.5" x2="1900" y2="1025.5" stroke="#333" stroke-width="1"/>
<line x1="60.0" y1="1026" x2="60.0" y2="1031" stroke="#333" stroke-width="1"/>
<text x="60.0" y="1043" font-size="12.5" fill="#333" text-anchor="middle" font-family="Liberation Sans">10:17</text>
<text x="60.0" y="1055" font-size="12.5" fill="#333" text-anchor="middle" font-family="Liberation Sans">01-13</text>
<line x1="250.3" y1="1026" x2="250.3" y2="1031" stroke="#333" stroke-width="1"/>
<text x="250.3" y="1043" font-size="12.5" fill="#333" text-anchor="middle" font-family="Liberation Sans">10:20</text>
<text x="250.3" y="1055" font-size="12.5" fill="#333" text-anchor="middle" font-family="Liberation Sans">01-13</text>
<line x1="567.5" y1="1026" x2="567.5" y2="1031" stroke="#333" stroke-width="1"/>
<text x="567.5" y="1043" font-size="12.5" fill="#333" text-anchor="middle" font-family="Liberation Sans">10:25</text>
<text x="567.5" y="1055" font-size="12.5" fill="#333" text-anchor="middle" font-family="Liberation Sans">01-13</text>
<line x1="884.7" y1="1026" x2="884.7" y2="1031" stroke="#333" stroke-width="1"/>
<text x="884.7" y="1043" font-size="12.5" fill="#333" text-anchor="middle" font-family="Liberation Sans">10:30</text>
<text x="884.7" y="1055" font-size="12.5" fill="#333" text-anchor="middle" font-family="Liberation Sans">01-13</text>
<line x1="1202.0" y1="1026" x2="1202.0" y2="1031" stroke="#333" stroke-width="1"/>
<text x="1202.0" y="1043" font-size="12.5" fill="#333" text-anchor="middle" font-family="Liberation Sans">10:35</text>
<text x="1202.0" y="1055" font-size="12.5" fill="#333" text-anchor="middle" font-family="Liberation Sans">01-13</text>
<line x1="1519.0" y1="1026" x2="1519.0" y2="1031" stroke="#333" stroke-width="1"/>
<text x="1519.0" y="1043" font-size="12.5" fill="#333" text-anchor="middle" font-family="Liberation Sans">10:40</text>
<text x="1519.0" y="1055" font-size="12.5" fill="#333" text-anchor="middle" font-family="Liberation Sans">01-13</text>
<line x1="1836.3" y1="1026" x2="1836.3" y2="1031" stroke="#333" stroke-width="1"/>
<text x="1836.3" y="1043" font-size="12.5" fill="#333" text-anchor="middle" font-family="Liberation Sans">10:45</text>
<text x="1836.3" y="1055" font-size="12.5" fill="#333" text-anchor="middle" font-family="Liberation Sans">01-13</text>
<line x1="1900.0" y1="1026" x2="1900.0" y2="1031" stroke="#333" stroke-width="1"/>
<text x="1900.0" y="1043" font-size="12.5" fill="#333" text-anchor="middle" font-family="Liberation Sans">10:46</text>
<text x="1900.0" y="1055" font-size="12.5" fill="#333" text-anchor="middle" font-family="Liberation Sans">01-13</text>
<line x1="694.5" y1="922" x2="694.5" y2="1026" stroke="#bbb" stroke-width="1"/>
<path d="M60.0,1022.5 C78.3,1022.7 96.7,1023.0 115.0,1023.0 C136.7,1023.0 158.3,1021.0 180.0,1020.5 C204.2,1020.0 228.3,1020.0 252.5,1020.0 C273.3,1020.0 294.2,1020.3 315.0,1021.2 C331.7,1022.0 348.3,1025.0 365.0,1025.0 C377.5,1025.0 390.0,1025.0 402.5,1025.0 C415.0,1025.0 427.5,1023.6 440.0,1023.0 C460.8,1022.1 481.7,1021.0 502.5,1020.5 C526.7,1020.0 550.8,1020.2 575.0,1020.0 C615.0,1019.6 655.0,1018.8 695.0,1018.8 C721.7,1018.8 748.3,1020.1 775.0,1020.5 C808.3,1021.0 841.7,1020.3 875.0,1021.2 C900.0,1022.0 925.0,1025.5 950.0,1025.5 C960.0,1025.5 970.0,1023.5 980.0,1022.5 C990.0,1021.5 1000.0,1019.5 1010.0,1019.5 C1039.2,1019.5 1068.3,1023.0 1097.5,1023.0 C1130.8,1023.0 1164.2,1022.5 1197.5,1022.5 C1226.7,1022.5 1255.8,1024.5 1285.0,1024.5 C1314.2,1024.5 1343.3,1024.5 1372.5,1024.5 C1395.0,1024.5 1417.5,1019.5 1440.0,1019.5 C1445.8,1019.5 1451.7,1019.8 1457.5,1020.0 C1495.0,1021.2 1532.5,1023.8 1570.0,1023.8 C1599.2,1023.8 1628.3,1020.0 1657.5,1020.0 C1686.7,1020.0 1715.8,1020.9 1745.0,1021.2 C1778.3,1021.7 1811.7,1022.5 1845.0,1022.5 C1863.3,1022.5 1881.7,1022.5 1900.0,1022.5" fill="none" stroke="#000" stroke-width="2.2"/>
<path d="M60.0,1023.8 C74.2,1022.1 88.3,1019.6 102.5,1018.8 C123.3,1017.5 144.2,1017.5 165.0,1017.5 C190.0,1017.5 215.0,1018.8 240.0,1018.8 C260.8,1018.8 281.7,1018.8 302.5,1018.8 C323.3,1018.8 344.2,1018.0 365.0,1018.0 C373.3,1018.0 381.7,1019.2 390.0,1020.0 C401.7,1021.1 413.3,1023.8 425.0,1023.8 C433.3,1023.8 441.7,1023.2 450.0,1022.5 C463.3,1021.3 476.7,1019.3 490.0,1018.0 C495.0,1017.5 500.0,1017.0 505.0,1017.0 C522.5,1017.0 540.0,1022.0 557.5,1022.0 C580.0,1022.0 602.5,1018.0 625.0,1018.0 C648.3,1018.0 671.7,1018.0 695.0,1018.0 C713.3,1018.0 731.7,1022.5 750.0,1022.5 C775.0,1022.5 800.0,1022.0 825.0,1022.0 C858.3,1022.0 891.7,1023.8 925.0,1023.8 C943.3,1023.8 961.7,1020.5 980.0,1019.5 C990.0,1019.0 1000.0,1019.2 1010.0,1019.2 C1039.2,1019.2 1068.3,1023.8 1097.5,1023.8 C1135.0,1023.8 1172.5,1023.8 1210.0,1023.8 C1235.0,1023.8 1260.0,1022.8 1285.0,1021.8 C1318.3,1020.3 1351.7,1016.2 1385.0,1016.2 C1403.3,1016.2 1421.7,1017.4 1440.0,1018.0 C1458.3,1018.6 1476.7,1020.0 1495.0,1020.0 C1521.7,1020.0 1548.3,1017.0 1575.0,1017.0 C1598.3,1017.0 1621.7,1020.2 1645.0,1021.2 C1686.7,1023.1 1728.3,1025.5 1770.0,1025.5 C1795.0,1025.5 1820.0,1018.8 1845.0,1018.8 C1863.3,1018.8 1881.7,1020.9 1900.0,1022.0" fill="none" stroke="#0000ff" stroke-width="2.2"/>
<path d="M60.0,965.0 C70.0,964.3 80.0,963.5 90.0,963.0 C101.7,962.5 113.3,962.0 125.0,962.0 C135.0,962.0 145.0,961.9 155.0,962.5 C165.8,963.1 176.7,963.0 187.5,965.5 C195.0,967.2 202.5,970.9 210.0,975.0 C216.7,978.6 223.3,985.3 230.0,988.8 C237.1,992.4 244.2,996.2 251.2,996.2 C259.2,996.2 267.1,994.8 275.0,993.8 C283.3,992.6 291.7,990.5 300.0,989.5 C307.5,988.6 315.0,988.2 322.5,988.2 C330.8,988.2 339.2,989.0 347.5,989.5 C356.7,990.0 365.8,991.2 375.0,991.2 C383.3,991.2 391.7,991.0 400.0,990.5 C411.7,989.9 423.3,988.0 435.0,988.0 C443.3,988.0 451.7,989.6 460.0,990.5 C473.3,991.9 486.7,995.0 500.0,995.0 C508.3,995.0 516.7,993.0 525.0,990.0 C535.0,986.5 545.0,978.7 555.0,975.5 C562.5,973.1 570.0,973.2 577.5,973.2 C586.7,973.2 595.8,975.8 605.0,977.5 C613.3,979.0 621.7,981.8 630.0,983.0 C651.7,986.1 673.3,988.2 695.0,990.5 C707.5,991.8 720.0,993.8 732.5,993.8 C746.7,993.8 760.8,992.2 775.0,989.5 C791.7,986.3 808.3,980.1 825.0,976.2 C837.5,973.4 850.0,970.8 862.5,969.2 C871.7,968.1 880.8,968.0 890.0,968.0 C900.0,968.0 910.0,972.0 920.0,973.0 C930.0,974.0 940.0,973.8 950.0,973.8 C960.0,973.8 970.0,968.9 980.0,967.0 C990.0,965.1 1000.0,962.5 1010.0,962.5 C1018.3,962.5 1026.7,966.7 1035.0,970.0 C1043.3,973.3 1051.7,980.2 1060.0,982.5 C1068.3,984.8 1076.7,983.8 1085.0,983.8 C1100.0,983.8 1115.0,970.5 1130.0,970.5 C1138.3,970.5 1146.7,972.2 1155.0,975.5 C1165.0,979.5 1175.0,988.7 1185.0,992.5 C1193.3,995.6 1201.7,996.2 1210.0,996.2 C1226.7,996.2 1243.3,989.6 1260.0,987.5 C1285.0,984.4 1310.0,983.5 1335.0,980.5 C1351.7,978.5 1368.3,974.6 1385.0,972.5 C1396.7,971.1 1408.3,970.0 1420.0,970.0 C1436.7,970.0 1453.3,969.7 1470.0,970.5 C1485.0,971.2 1500.0,974.5 1515.0,974.5 C1523.3,974.5 1531.7,972.7 1540.0,971.2 C1551.7,969.2 1563.3,963.8 1575.0,963.8 C1583.3,963.8 1591.7,964.7 1600.0,967.5 C1606.7,969.7 1613.3,976.5 1620.0,978.8 C1630.0,982.1 1640.0,984.5 1650.0,984.5 C1656.7,984.5 1663.3,982.3 1670.0,980.0 C1682.5,975.8 1695.0,965.0 1707.5,965.0 C1715.8,965.0 1724.2,967.0 1732.5,970.0 C1745.0,974.5 1757.5,987.5 1770.0,987.5 C1778.3,987.5 1786.7,985.8 1795.0,982.5 C1807.5,977.5 1820.0,962.5 1832.5,962.5 C1845.0,962.5 1857.5,965.4 1870.0,970.0 C1880.0,973.7 1890.0,981.7 1900.0,987.5" fill="none" stroke="#ff0000" stroke-width="2.2"/>
<path d="M60.0,1002.5 C68.3,1005.8 76.7,1009.9 85.0,1012.5 C93.3,1015.1 101.7,1018.0 110.0,1018.0 C115.0,1018.0 120.0,1019.0 125.0,1017.5 C131.7,1015.5 138.3,1013.3 145.0,1007.5 C151.7,1001.7 158.3,988.6 165.0,982.5 C172.5,975.7 180.0,972.0 187.5,968.8 C197.9,964.3 208.3,959.5 218.8,959.5 C230.0,959.5 241.2,962.8 252.5,966.2 C258.3,968.0 264.2,970.8 270.0,975.0 C277.5,980.4 285.0,991.0 292.5,995.0 C304.2,1001.2 315.8,1005.5 327.5,1005.5 C333.3,1005.5 339.2,1004.8 345.0,1002.5 C353.3,999.2 361.7,992.5 370.0,988.8 C378.3,985.0 386.7,983.4 395.0,980.0 C405.0,975.9 415.0,968.9 425.0,966.2 C438.3,962.7 451.7,961.2 465.0,961.2 C476.7,961.2 488.3,963.3 500.0,968.0 C510.0,972.0 520.0,981.7 530.0,987.5 C540.8,993.8 551.7,1004.5 562.5,1004.5 C569.2,1004.5 575.8,1003.0 582.5,997.5 C590.8,990.6 599.2,975.4 607.5,967.5 C615.8,959.6 624.2,950.0 632.5,950.0 C640.0,950.0 647.5,954.0 655.0,958.8 C668.3,967.2 681.7,981.2 695.0,989.5 C705.0,995.8 715.0,999.7 725.0,1002.5 C736.7,1005.7 748.3,1007.5 760.0,1007.5 C767.5,1007.5 775.0,1006.7 782.5,1004.5 C796.7,1000.4 810.8,993.6 825.0,988.8 C841.7,983.1 858.3,973.0 875.0,973.0 C885.0,973.0 895.0,974.3 905.0,978.8 C914.2,982.9 923.3,995.1 932.5,998.8 C947.5,1004.8 962.5,1008.0 977.5,1008.0 C992.5,1008.0 1007.5,1000.3 1022.5,992.5 C1036.7,985.1 1050.8,970.0 1065.0,962.5 C1075.0,957.2 1085.0,954.2 1095.0,954.2 C1108.3,954.2 1121.7,959.6 1135.0,961.8 C1148.3,963.9 1161.7,964.0 1175.0,967.0 C1186.7,969.6 1198.3,971.8 1210.0,978.8 C1218.3,983.7 1226.7,995.8 1235.0,1002.5 C1245.0,1010.5 1255.0,1023.0 1265.0,1023.0 C1271.7,1023.0 1278.3,1022.8 1285.0,1017.5 C1293.3,1010.9 1301.7,993.5 1310.0,987.5 C1318.3,981.5 1326.7,981.2 1335.0,981.2 C1343.3,981.2 1351.7,991.2 1360.0,995.0 C1368.3,998.8 1376.7,1003.8 1385.0,1003.8 C1393.3,1003.8 1401.7,998.6 1410.0,992.5 C1420.0,985.2 1430.0,971.6 1440.0,963.8 C1443.3,961.1 1446.7,961.2 1450.0,961.2 C1459.2,961.2 1468.3,964.8 1477.5,973.8 C1485.0,981.1 1492.5,1002.1 1500.0,1010.0 C1508.3,1018.8 1516.7,1023.8 1525.0,1023.8 C1533.3,1023.8 1541.7,1023.9 1550.0,1020.0 C1566.7,1012.2 1583.3,1001.6 1600.0,988.8 C1610.8,980.4 1621.7,963.9 1632.5,956.2 C1639.2,951.6 1645.8,951.8 1652.5,951.8 C1662.5,951.8 1672.5,960.1 1682.5,965.0 C1695.0,971.2 1707.5,977.4 1720.0,985.0 C1736.7,995.1 1753.3,1018.0 1770.0,1018.0 C1776.7,1018.0 1783.3,1018.4 1790.0,1012.5 C1800.0,1003.6 1810.0,982.1 1820.0,973.8 C1828.3,966.8 1836.7,966.8 1845.0,966.8 C1863.3,966.8 1881.7,978.9 1900.0,985.0" fill="none" stroke="#0000ff" stroke-width="2.2"/>
<path d="M60.0,1018.8 C70.0,1000.0 80.0,975.6 90.0,962.5 C101.2,947.7 112.5,935.0 123.8,935.0 C130.0,935.0 136.2,936.8 142.5,945.0 C148.3,952.6 154.2,973.5 160.0,982.5 C168.8,996.0 177.5,1012.5 186.2,1012.5 C192.5,1012.5 198.8,1007.4 205.0,997.5 C210.8,988.2 216.7,963.8 222.5,955.0 C232.1,940.6 241.7,928.0 251.2,928.0 C258.3,928.0 265.4,931.5 272.5,937.5 C280.8,944.6 289.2,961.2 297.5,967.5 C310.0,977.0 322.5,985.0 335.0,985.0 C346.7,985.0 358.3,976.9 370.0,973.8 C378.3,971.5 386.7,970.8 395.0,968.8 C403.3,966.7 411.7,963.2 420.0,961.2 C427.5,959.5 435.0,957.5 442.5,957.5 C450.0,957.5 457.5,959.6 465.0,961.2 C473.3,963.1 481.7,968.0 490.0,968.0 C496.7,968.0 503.3,968.3 510.0,967.5 C515.0,966.9 520.0,965.9 525.0,963.8 C535.8,959.1 546.7,947.0 557.5,947.0 C565.8,947.0 574.2,947.1 582.5,952.5 C590.0,957.3 597.5,970.4 605.0,977.5 C613.3,985.4 621.7,992.2 630.0,997.5 C640.0,1003.9 650.0,1009.0 660.0,1012.5 C671.2,1016.4 682.5,1019.5 693.8,1019.5 C700.0,1019.5 706.2,1018.4 712.5,1010.0 C719.2,1001.1 725.8,974.5 732.5,967.5 C745.0,954.3 757.5,949.5 770.0,949.5 C785.8,949.5 801.7,964.5 817.5,964.5 C836.7,964.5 855.8,940.5 875.0,940.5 C885.0,940.5 895.0,944.5 905.0,951.2 C913.3,956.9 921.7,969.9 930.0,977.5 C936.7,983.6 943.3,988.7 950.0,992.5 C960.0,998.2 970.0,1002.6 980.0,1006.2 C983.3,1007.5 986.7,1007.0 990.0,1007.0 C1000.8,1007.0 1011.7,1005.4 1022.5,1001.2 C1030.8,998.1 1039.2,990.3 1047.5,985.0 C1058.3,978.2 1069.2,972.0 1080.0,965.0 C1091.7,957.4 1103.3,946.6 1115.0,941.2 C1123.3,937.4 1131.7,937.5 1140.0,937.5 C1148.3,937.5 1156.7,940.5 1165.0,945.0 C1176.7,951.3 1188.3,970.0 1200.0,970.0 C1206.7,970.0 1213.3,970.2 1220.0,966.2 C1230.0,960.2 1240.0,945.5 1250.0,940.0 C1261.7,933.6 1273.3,930.5 1285.0,930.5 C1297.5,930.5 1310.0,933.0 1322.5,933.0 C1337.5,933.0 1352.5,930.8 1367.5,930.8 C1380.0,930.8 1392.5,932.9 1405.0,937.5 C1416.7,941.8 1428.3,951.0 1440.0,957.5 C1450.0,963.1 1460.0,965.6 1470.0,973.8 C1478.3,980.6 1486.7,996.0 1495.0,1002.5 C1503.3,1009.0 1511.7,1013.0 1520.0,1013.0 C1526.7,1013.0 1533.3,1013.6 1540.0,1008.8 C1550.0,1001.4 1560.0,982.8 1570.0,976.2 C1585.0,966.5 1600.0,960.0 1615.0,960.0 C1629.2,960.0 1643.3,961.2 1657.5,967.5 C1665.8,971.2 1674.2,983.8 1682.5,990.0 C1693.3,998.0 1704.2,1010.0 1715.0,1010.0 C1721.7,1010.0 1728.3,1009.3 1735.0,1006.2 C1746.7,1000.9 1758.3,990.8 1770.0,985.0 C1786.7,976.7 1803.3,968.6 1820.0,963.8 C1836.7,958.9 1853.3,955.8 1870.0,955.8 C1880.0,955.8 1890.0,956.1 1900.0,956.2" fill="none" stroke="#00ee00" stroke-width="2.2"/>
<circle cx="694.5" cy="989.5" r="2.5" fill="#fff" stroke="#0000ff" stroke-width="1"/>
<circle cx="694.5" cy="1019" r="2.5" fill="#fff" stroke="#00cc00" stroke-width="1"/>
<g fill="none" stroke="#666" stroke-width="1.2"><path d="M1822 920 L1822 927.5 M1818.3 923.8 L1825.5 923.8 M1827 923.8 L1833.7 923.8 L1833.7 935.5 L1822 935.5 L1822 929"/></g>
<g fill="none" stroke="#666" stroke-width="1.2"><path d="M1846.5 923.8 L1858.6 923.8 L1858.6 935.5 L1846.5 935.5 L1846.5 928.5 M1850 920.3 L1846.3 923.8 L1850 927.2"/></g>
<g fill="none" stroke="#666" stroke-width="1.2"><path d="M1871.2 927.5 A7.8 7.8 0 0 1 1886.4 924.5 M1886.8 928.3 A7.8 7.8 0 0 1 1871.5 931.3"/><path d="M1883.8 924.8 L1886.6 924.6 L1887.2 921.6 M1873.9 931.3 L1871.3 931 L1870.8 934"/></g>
<g fill="none" stroke="#666" stroke-width="1.2"><path d="M1905.8 920.3 L1905.8 932 M1899.6 926.3 L1905.8 932 L1912.2 926.3 M1899.4 931.5 L1899.4 935.5 L1912.6 935.5 L1912.6 931.5"/></g>
</svg>
<div style="position:absolute;left:716px;top:860px;width:148px;height:136px;border-radius:4px;background:rgba(0,0,0,0.56)"></div>
<div style="position:absolute;left:721px;top:865px;font-size:14.6px;line-height:20px;color:#fff;white-space:nowrap">2025-01-13 10:27:00</div>
<div style="position:absolute;left:721px;top:886px;font-size:14.6px;line-height:20px;color:#fff;white-space:nowrap">二喷温度:288.33</div>
<div style="position:absolute;left:721px;top:907px;font-size:14.6px;line-height:20px;color:#fff;white-space:nowrap">一喷温度:47.13</div>
<div style="position:absolute;left:721px;top:928px;font-size:14.6px;line-height:20px;color:#fff;white-space:nowrap">进料流量:49</div>
<div style="position:absolute;left:721px;top:949px;font-size:14.6px;line-height:20px;color:#fff;white-space:nowrap">压力:56</div>
<div style="position:absolute;left:721px;top:970px;font-size:14.6px;line-height:20px;color:#fff;white-space:nowrap">温度:272</div>
<div style="position:absolute;left:0;top:1060px;width:1920px;height:1px;background:#1e9ad6"></div>
<div style="position:absolute;left:0;top:1061px;width:1920px;height:95px;background:#fff"></div>
<div style="position:absolute;left:0;top:1061px;width:1920px;height:22px;background:#f0f0f0"></div>
<div style="position:absolute;left:3px;top:1060px;font-size:12.5px;line-height:20px;font-weight:bold;color:#222;white-space:nowrap">显示</div>
<div style="position:absolute;left:33px;top:1060px;font-size:12.5px;line-height:20px;font-weight:bold;color:#222;white-space:nowrap">颜色</div>
<div style="position:absolute;left:82px;top:1060px;font-size:12.5px;line-height:20px;font-weight:bold;color:#222;white-space:nowrap">名称</div>
<div style="position:absolute;left:302px;top:1060px;font-size:12.5px;line-height:20px;font-weight:bold;color:#222;white-space:nowrap">光标值</div>
<div style="position:absolute;left:402px;top:1060px;font-size:12.5px;line-height:20px;font-weight:bold;color:#222;white-space:nowrap">单位</div>
<div style="position:absolute;left:452px;top:1060px;font-size:12.5px;line-height:20px;font-weight:bold;color:#222;white-space:nowrap">量程下限</div>
<div style="position:absolute;left:532px;top:1060px;font-size:12.5px;line-height:20px;font-weight:bold;color:#222;white-space:nowrap">量程上限</div>
<div style="position:absolute;left:612px;top:1060px;font-size:12.5px;line-height:20px;font-weight:bold;color:#222;white-space:nowrap">描述</div>
<div style="position:absolute;left:832px;top:1060px;font-size:12.5px;line-height:20px;font-weight:bold;color:#222;white-space:nowrap">最小值</div>
<div style="position:absolute;left:912px;top:1060px;font-size:12.5px;line-height:20px;font-weight:bold;color:#222;white-space:nowrap">最大值</div>
<div style="position:absolute;left:992px;top:1060px;font-size:12.5px;line-height:20px;font-weight:bold;color:#222;white-space:nowrap">标签名称</div>
<div style="position:absolute;left:29px;top:1061px;width:1px;height:95px;background:#d6d6d6"></div>
<div style="position:absolute;left:79px;top:1061px;width:1px;height:95px;background:#d6d6d6"></div>
<div style="position:absolute;left:299px;top:1061px;width:1px;height:95px;background:#d6d6d6"></div>
<div style="position:absolute;left:399px;top:1061px;width:1px;height:95px;background:#d6d6d6"></div>
<div style="position:absolute;left:449px;top:1061px;width:1px;height:95px;background:#d6d6d6"></div>
<div style="position:absolute;left:529px;top:1061px;width:1px;height:95px;background:#d6d6d6"></div>
<div style="position:absolute;left:609px;top:1061px;width:1px;height:95px;background:#d6d6d6"></div>
<div style="position:absolute;left:829px;top:1061px;width:1px;height:95px;background:#d6d6d6"></div>
<div style="position:absolute;left:909px;top:1061px;width:1px;height:95px;background:#d6d6d6"></div>
<div style="position:absolute;left:989px;top:1061px;width:1px;height:95px;background:#d6d6d6"></div>
<div style="position:absolute;left:1309px;top:1061px;width:1px;height:95px;background:#d6d6d6"></div>
<div style="position:absolute;left:0;top:1104px;width:1920px;height:1px;background:#cfcfcf"></div>
<div style="position:absolute;left:30px;top:1084px;width:49px;height:20px;background:#ff0000"></div>
<svg style="position:absolute;left:8px;top:1087px" width="14" height="14" viewBox="0 0 14 14"><rect x="0.5" y="0.5" width="13" height="13" fill="#4a8bd6" stroke="#777"/><path d="M2.8 7.2 L5.8 10.2 L11.2 3.6" fill="none" stroke="#fff" stroke-width="1.8"/></svg>
<div style="position:absolute;left:82px;top:1083px;font-size:12.5px;line-height:20px;color:#222;white-space:nowrap">温度</div>
<div style="position:absolute;left:302px;top:1083px;font-size:12.5px;line-height:20px;color:#222;white-space:nowrap">272</div>
<div style="position:absolute;left:402px;top:1083px;font-size:12.5px;line-height:20px;color:#222;white-space:nowrap">C°</div>
<div style="position:absolute;left:452px;top:1083px;font-size:12.5px;line-height:20px;color:#222;white-space:nowrap">0</div>
<div style="position:absolute;left:532px;top:1083px;font-size:12.5px;line-height:20px;color:#222;white-space:nowrap">1000</div>
<div style="position:absolute;left:612px;top:1083px;font-size:12.5px;line-height:20px;color:#222;white-space:nowrap">沉淀粉温度</div>
<div style="position:absolute;left:832px;top:1083px;font-size:12.5px;line-height:20px;color:#222;white-space:nowrap">230</div>
<div style="position:absolute;left:912px;top:1083px;font-size:12.5px;line-height:20px;color:#222;white-space:nowrap">495</div>
<div style="position:absolute;left:992px;top:1083px;font-size:12.5px;line-height:20px;color:#222;white-space:nowrap">T.Rnd.cur03</div>
<div style="position:absolute;left:0;top:1126px;width:1920px;height:1px;background:#cfcfcf"></div>
<div style="position:absolute;left:30px;top:1106px;width:49px;height:20px;background:#0000ff"></div>
<svg style="position:absolute;left:8px;top:1109px" width="14" height="14" viewBox="0 0 14 14"><rect x="0.5" y="0.5" width="13" height="13" fill="#4a8bd6" stroke="#777"/><path d="M2.8 7.2 L5.8 10.2 L11.2 3.6" fill="none" stroke="#fff" stroke-width="1.8"/></svg>
<div style="position:absolute;left:82px;top:1105px;font-size:12.5px;line-height:20px;color:#222;white-space:nowrap">压力</div>
<div style="position:absolute;left:302px;top:1105px;font-size:12.5px;line-height:20px;color:#222;white-space:nowrap">56</div>
<div style="position:absolute;left:402px;top:1105px;font-size:12.5px;line-height:20px;color:#222;white-space:nowrap">Kpa</div>
<div style="position:absolute;left:452px;top:1105px;font-size:12.5px;line-height:20px;color:#222;white-space:nowrap">0</div>
<div style="position:absolute;left:532px;top:1105px;font-size:12.5px;line-height:20px;color:#222;white-space:nowrap">800</div>
<div style="position:absolute;left:612px;top:1105px;font-size:12.5px;line-height:20px;color:#222;white-space:nowrap">沉淀粉压力</div>
<div style="position:absolute;left:832px;top:1105px;font-size:12.5px;line-height:20px;color:#222;white-space:nowrap">2</div>
<div style="position:absolute;left:912px;top:1105px;font-size:12.5px;line-height:20px;color:#222;white-space:nowrap">75</div>
<div style="position:absolute;left:992px;top:1105px;font-size:12.5px;line-height:20px;color:#222;white-space:nowrap">T.Rnd.p1</div>
<div style="position:absolute;left:0;top:1148px;width:1920px;height:1px;background:#cfcfcf"></div>
<div style="position:absolute;left:30px;top:1128px;width:49px;height:20px;background:#000000"></div>
<svg style="position:absolute;left:8px;top:1131px" width="14" height="14" viewBox="0 0 14 14"><rect x="0.5" y="0.5" width="13" height="13" fill="#4a8bd6" stroke="#777"/><path d="M2.8 7.2 L5.8 10.2 L11.2 3.6" fill="none" stroke="#fff" stroke-width="1.8"/></svg>
<div style="position:absolute;left:82px;top:1127px;font-size:12.5px;line-height:20px;color:#222;white-space:nowrap">进料流量</div>
<div style="position:absolute;left:302px;top:1127px;font-size:12.5px;line-height:20px;color:#222;white-space:nowrap">49</div>
<div style="position:absolute;left:402px;top:1127px;font-size:12.5px;line-height:20px;color:#222;white-space:nowrap">ml/m</div>
<div style="position:absolute;left:452px;top:1127px;font-size:12.5px;line-height:20px;color:#222;white-space:nowrap">0</div>
<div style="position:absolute;left:532px;top:1127px;font-size:12.5px;line-height:20px;color:#222;white-space:nowrap">100</div>
<div style="position:absolute;left:612px;top:1127px;font-size:12.5px;line-height:20px;color:#222;white-space:nowrap">液化进料量</div>
<div style="position:absolute;left:832px;top:1127px;font-size:12.5px;line-height:20px;color:#222;white-space:nowrap">7</div>
<div style="position:absolute;left:912px;top:1127px;font-size:12.5px;line-height:20px;color:#222;white-space:nowrap">49</div>
<div style="position:absolute;left:992px;top:1127px;font-size:12.5px;line-height:20px;color:#222;white-space:nowrap">T.Rnd.p2</div>
<div style="position:absolute;left:30px;top:1149px;width:49px;height:3px;background:#00ff00"></div>
<div style="position:absolute;left:0;top:1152px;width:1920px;height:1px;background:#c4c4c4"></div><div style="position:absolute;left:0;top:1153px;width:1920px;height:3px;background:linear-gradient(90deg,#f7e4de 0px,#f7e6e0 640px,#dfecf2 900px,#d8eaf2 1920px)"></div>
<div style="position:absolute;left:1911px;top:1083px;width:5px;height:43px;border-radius:3px;background:#9a9a9a"></div>
</body></html>
